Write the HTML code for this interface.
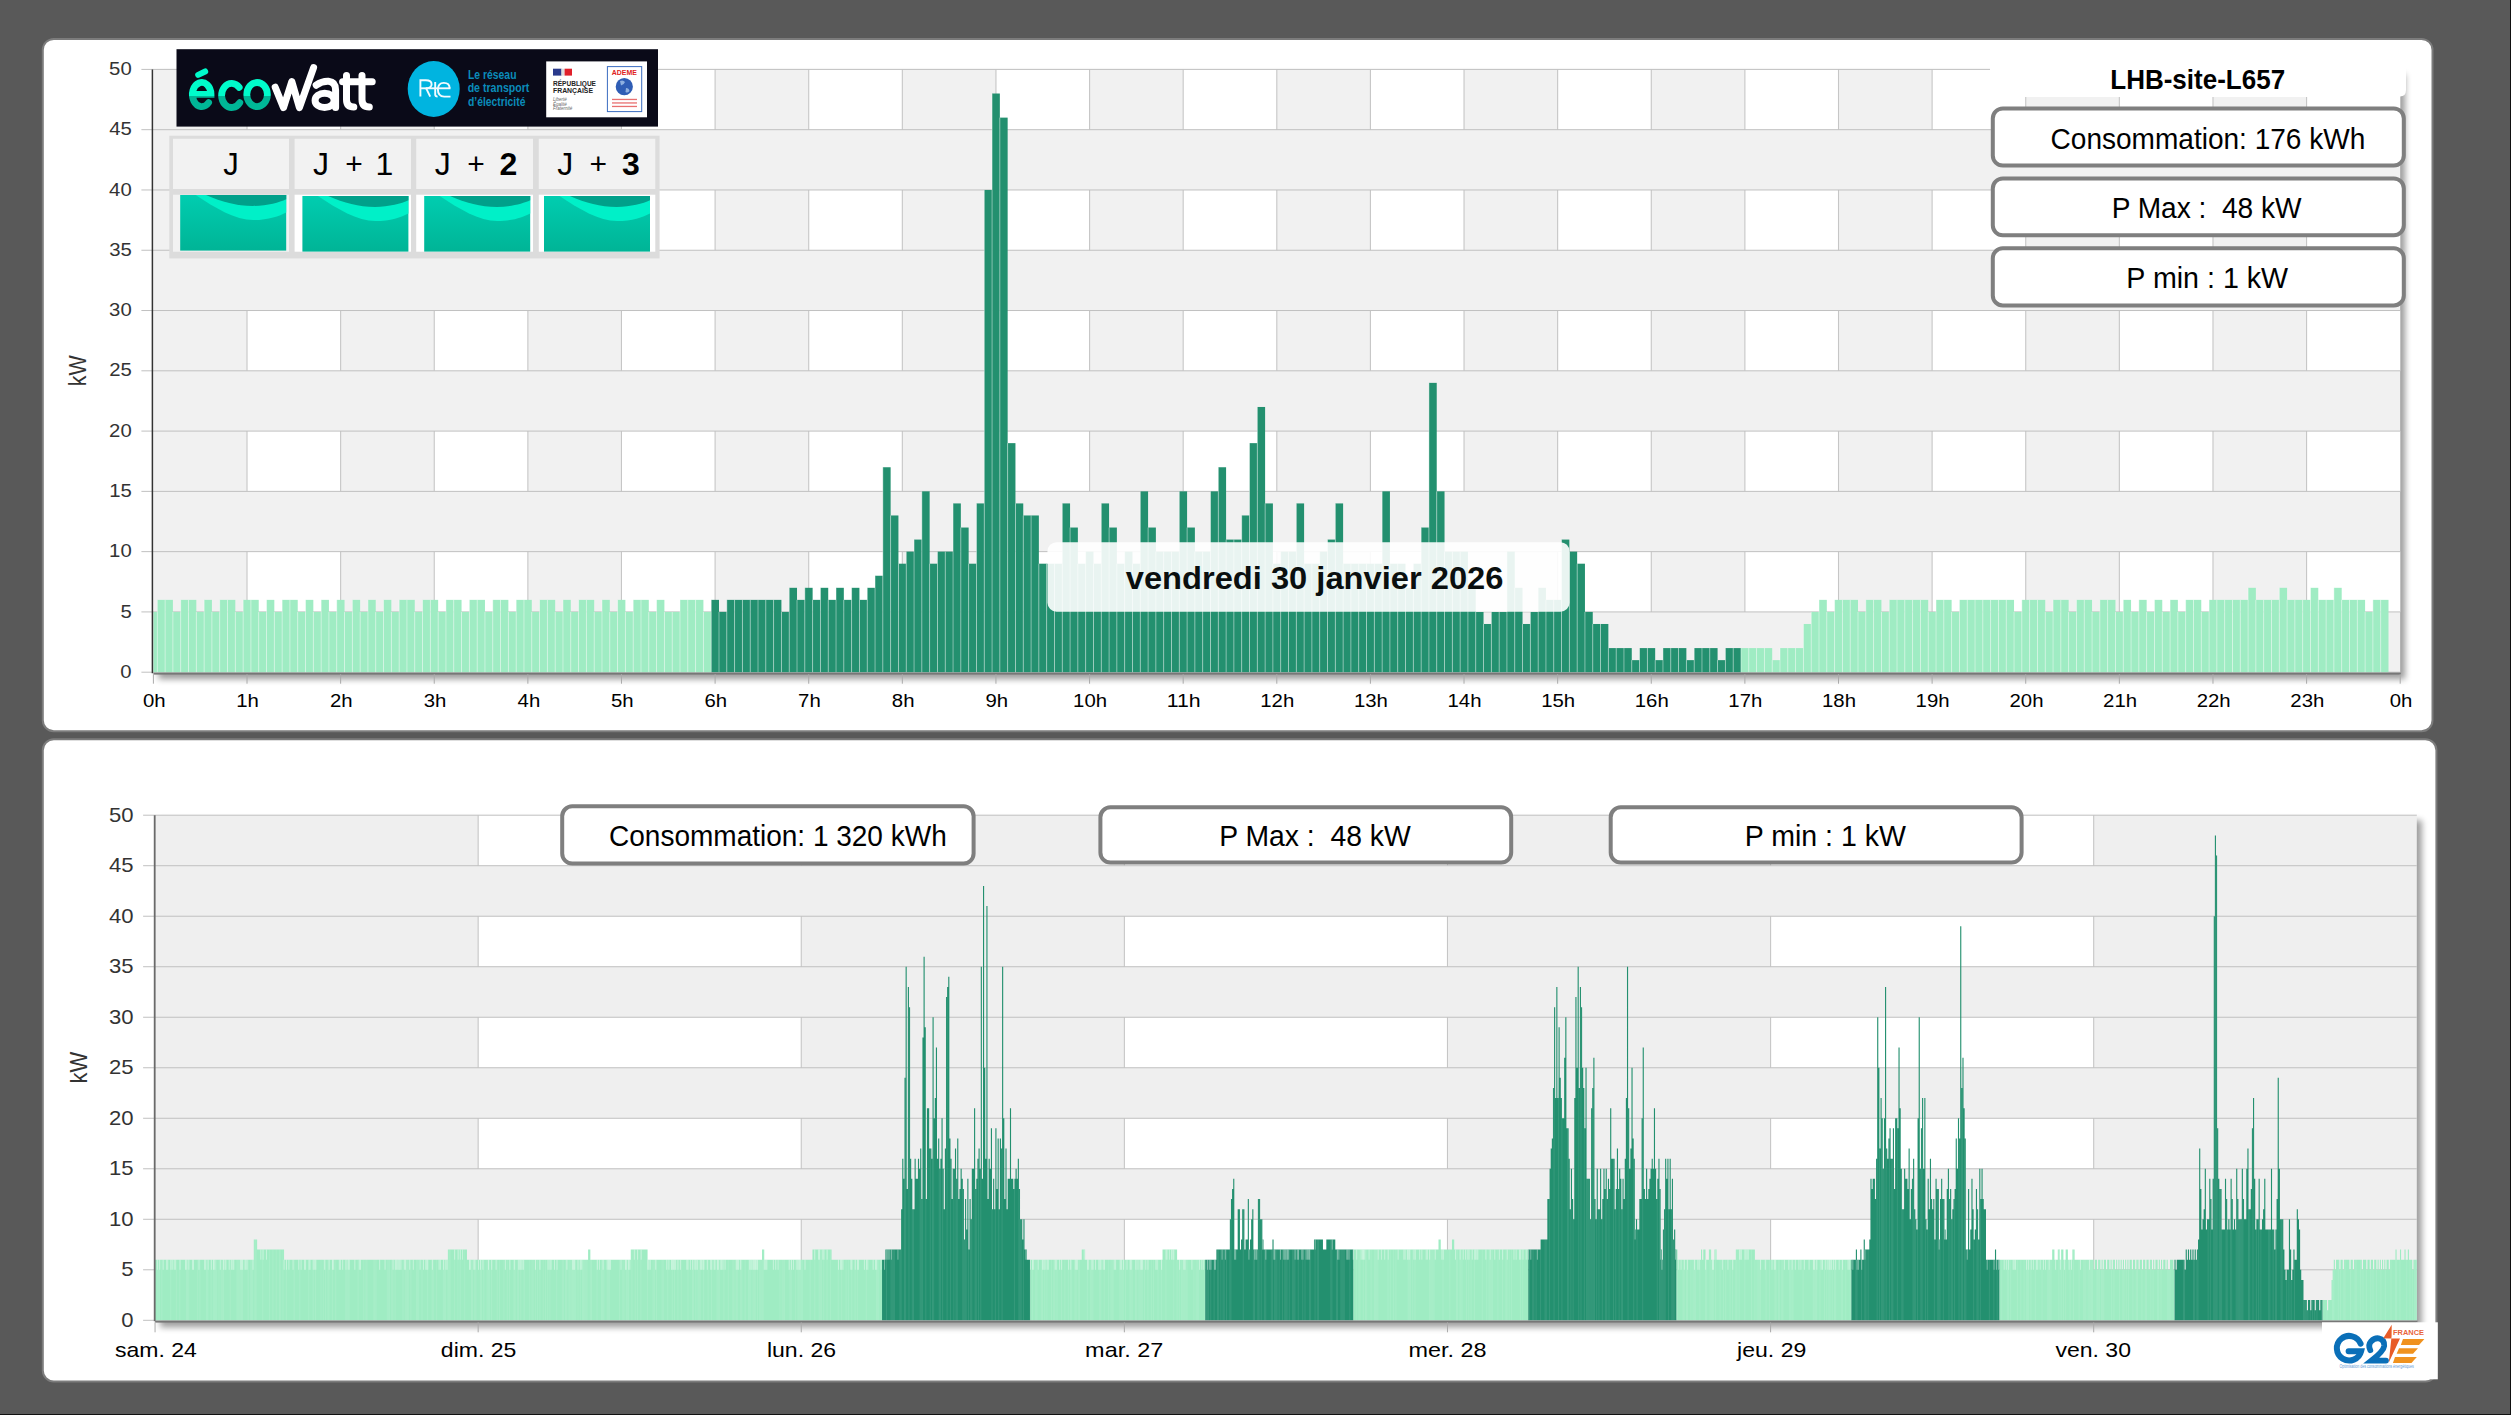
<!DOCTYPE html><html><head><meta charset="utf-8"><style>html,body{margin:0;padding:0;background:#595959;width:2511px;height:1415px;overflow:hidden} svg{position:absolute;left:0;top:0} text{font-family:"Liberation Sans",sans-serif}</style></head><body>
<svg width="2511" height="1415" viewBox="0 0 2511 1415">
<defs><filter id="sh" x="-5%" y="-5%" width="110%" height="110%"><feGaussianBlur stdDeviation="3"/></filter><filter id="sh2" x="-2%" y="-10%" width="104%" height="120%"><feGaussianBlur stdDeviation="3.2"/></filter><linearGradient id="tealg" x1="0" y1="0" x2="0" y2="1"><stop offset="0" stop-color="#00cdb0"/><stop offset="1" stop-color="#00b496"/></linearGradient><linearGradient id="ecog" x1="0" y1="0" x2="0" y2="1"><stop offset="0.5" stop-color="#00f0c8"/><stop offset="0.5" stop-color="#00b898"/></linearGradient><linearGradient id="ecog2" gradientUnits="userSpaceOnUse" x1="0" y1="70" x2="0" y2="112"><stop offset="0" stop-color="#00fccb"/><stop offset="0.63" stop-color="#00fccb"/><stop offset="0.63" stop-color="#00b596"/><stop offset="1" stop-color="#00b898"/></linearGradient></defs>
<rect x="2510" y="0" width="1" height="1415" fill="#111"/>
<rect x="0" y="1414" width="2511" height="1" fill="#111"/>
<rect x="42.8" y="38.9" width="2389.7" height="692.4" rx="11" fill="#ffffff" stroke="#7c7c7c" stroke-width="2"/>
<rect x="42.8" y="739.2" width="2393.6" height="642.3" rx="11" fill="#ffffff" stroke="#7c7c7c" stroke-width="2"/>
<rect x="158.4" y="74.4" width="2246.8" height="604.8" fill="#000" opacity="0.38" filter="url(#sh2)"/>
<rect x="153.40" y="69.40" width="2246.80" height="602.80" fill="#f1f1f1"/>
<rect x="247.02" y="69.40" width="93.62" height="60.28" fill="#ffffff"/>
<rect x="434.25" y="69.40" width="93.62" height="60.28" fill="#ffffff"/>
<rect x="621.48" y="69.40" width="93.62" height="60.28" fill="#ffffff"/>
<rect x="808.72" y="69.40" width="93.62" height="60.28" fill="#ffffff"/>
<rect x="995.95" y="69.40" width="93.62" height="60.28" fill="#ffffff"/>
<rect x="1183.18" y="69.40" width="93.62" height="60.28" fill="#ffffff"/>
<rect x="1370.42" y="69.40" width="93.62" height="60.28" fill="#ffffff"/>
<rect x="1557.65" y="69.40" width="93.62" height="60.28" fill="#ffffff"/>
<rect x="1744.88" y="69.40" width="93.62" height="60.28" fill="#ffffff"/>
<rect x="1932.12" y="69.40" width="93.62" height="60.28" fill="#ffffff"/>
<rect x="2119.35" y="69.40" width="93.62" height="60.28" fill="#ffffff"/>
<rect x="2306.58" y="69.40" width="93.62" height="60.28" fill="#ffffff"/>
<line x1="247.02" y1="69.40" x2="247.02" y2="129.68" stroke="#c6c6c6" stroke-width="1.1"/>
<line x1="340.63" y1="69.40" x2="340.63" y2="129.68" stroke="#c6c6c6" stroke-width="1.1"/>
<line x1="434.25" y1="69.40" x2="434.25" y2="129.68" stroke="#c6c6c6" stroke-width="1.1"/>
<line x1="527.87" y1="69.40" x2="527.87" y2="129.68" stroke="#c6c6c6" stroke-width="1.1"/>
<line x1="621.48" y1="69.40" x2="621.48" y2="129.68" stroke="#c6c6c6" stroke-width="1.1"/>
<line x1="715.10" y1="69.40" x2="715.10" y2="129.68" stroke="#c6c6c6" stroke-width="1.1"/>
<line x1="808.72" y1="69.40" x2="808.72" y2="129.68" stroke="#c6c6c6" stroke-width="1.1"/>
<line x1="902.33" y1="69.40" x2="902.33" y2="129.68" stroke="#c6c6c6" stroke-width="1.1"/>
<line x1="995.95" y1="69.40" x2="995.95" y2="129.68" stroke="#c6c6c6" stroke-width="1.1"/>
<line x1="1089.57" y1="69.40" x2="1089.57" y2="129.68" stroke="#c6c6c6" stroke-width="1.1"/>
<line x1="1183.18" y1="69.40" x2="1183.18" y2="129.68" stroke="#c6c6c6" stroke-width="1.1"/>
<line x1="1276.80" y1="69.40" x2="1276.80" y2="129.68" stroke="#c6c6c6" stroke-width="1.1"/>
<line x1="1370.42" y1="69.40" x2="1370.42" y2="129.68" stroke="#c6c6c6" stroke-width="1.1"/>
<line x1="1464.03" y1="69.40" x2="1464.03" y2="129.68" stroke="#c6c6c6" stroke-width="1.1"/>
<line x1="1557.65" y1="69.40" x2="1557.65" y2="129.68" stroke="#c6c6c6" stroke-width="1.1"/>
<line x1="1651.27" y1="69.40" x2="1651.27" y2="129.68" stroke="#c6c6c6" stroke-width="1.1"/>
<line x1="1744.88" y1="69.40" x2="1744.88" y2="129.68" stroke="#c6c6c6" stroke-width="1.1"/>
<line x1="1838.50" y1="69.40" x2="1838.50" y2="129.68" stroke="#c6c6c6" stroke-width="1.1"/>
<line x1="1932.12" y1="69.40" x2="1932.12" y2="129.68" stroke="#c6c6c6" stroke-width="1.1"/>
<line x1="2025.73" y1="69.40" x2="2025.73" y2="129.68" stroke="#c6c6c6" stroke-width="1.1"/>
<line x1="2119.35" y1="69.40" x2="2119.35" y2="129.68" stroke="#c6c6c6" stroke-width="1.1"/>
<line x1="2212.97" y1="69.40" x2="2212.97" y2="129.68" stroke="#c6c6c6" stroke-width="1.1"/>
<line x1="2306.58" y1="69.40" x2="2306.58" y2="129.68" stroke="#c6c6c6" stroke-width="1.1"/>
<rect x="247.02" y="189.96" width="93.62" height="60.28" fill="#ffffff"/>
<rect x="434.25" y="189.96" width="93.62" height="60.28" fill="#ffffff"/>
<rect x="621.48" y="189.96" width="93.62" height="60.28" fill="#ffffff"/>
<rect x="808.72" y="189.96" width="93.62" height="60.28" fill="#ffffff"/>
<rect x="995.95" y="189.96" width="93.62" height="60.28" fill="#ffffff"/>
<rect x="1183.18" y="189.96" width="93.62" height="60.28" fill="#ffffff"/>
<rect x="1370.42" y="189.96" width="93.62" height="60.28" fill="#ffffff"/>
<rect x="1557.65" y="189.96" width="93.62" height="60.28" fill="#ffffff"/>
<rect x="1744.88" y="189.96" width="93.62" height="60.28" fill="#ffffff"/>
<rect x="1932.12" y="189.96" width="93.62" height="60.28" fill="#ffffff"/>
<rect x="2119.35" y="189.96" width="93.62" height="60.28" fill="#ffffff"/>
<rect x="2306.58" y="189.96" width="93.62" height="60.28" fill="#ffffff"/>
<line x1="247.02" y1="189.96" x2="247.02" y2="250.24" stroke="#c6c6c6" stroke-width="1.1"/>
<line x1="340.63" y1="189.96" x2="340.63" y2="250.24" stroke="#c6c6c6" stroke-width="1.1"/>
<line x1="434.25" y1="189.96" x2="434.25" y2="250.24" stroke="#c6c6c6" stroke-width="1.1"/>
<line x1="527.87" y1="189.96" x2="527.87" y2="250.24" stroke="#c6c6c6" stroke-width="1.1"/>
<line x1="621.48" y1="189.96" x2="621.48" y2="250.24" stroke="#c6c6c6" stroke-width="1.1"/>
<line x1="715.10" y1="189.96" x2="715.10" y2="250.24" stroke="#c6c6c6" stroke-width="1.1"/>
<line x1="808.72" y1="189.96" x2="808.72" y2="250.24" stroke="#c6c6c6" stroke-width="1.1"/>
<line x1="902.33" y1="189.96" x2="902.33" y2="250.24" stroke="#c6c6c6" stroke-width="1.1"/>
<line x1="995.95" y1="189.96" x2="995.95" y2="250.24" stroke="#c6c6c6" stroke-width="1.1"/>
<line x1="1089.57" y1="189.96" x2="1089.57" y2="250.24" stroke="#c6c6c6" stroke-width="1.1"/>
<line x1="1183.18" y1="189.96" x2="1183.18" y2="250.24" stroke="#c6c6c6" stroke-width="1.1"/>
<line x1="1276.80" y1="189.96" x2="1276.80" y2="250.24" stroke="#c6c6c6" stroke-width="1.1"/>
<line x1="1370.42" y1="189.96" x2="1370.42" y2="250.24" stroke="#c6c6c6" stroke-width="1.1"/>
<line x1="1464.03" y1="189.96" x2="1464.03" y2="250.24" stroke="#c6c6c6" stroke-width="1.1"/>
<line x1="1557.65" y1="189.96" x2="1557.65" y2="250.24" stroke="#c6c6c6" stroke-width="1.1"/>
<line x1="1651.27" y1="189.96" x2="1651.27" y2="250.24" stroke="#c6c6c6" stroke-width="1.1"/>
<line x1="1744.88" y1="189.96" x2="1744.88" y2="250.24" stroke="#c6c6c6" stroke-width="1.1"/>
<line x1="1838.50" y1="189.96" x2="1838.50" y2="250.24" stroke="#c6c6c6" stroke-width="1.1"/>
<line x1="1932.12" y1="189.96" x2="1932.12" y2="250.24" stroke="#c6c6c6" stroke-width="1.1"/>
<line x1="2025.73" y1="189.96" x2="2025.73" y2="250.24" stroke="#c6c6c6" stroke-width="1.1"/>
<line x1="2119.35" y1="189.96" x2="2119.35" y2="250.24" stroke="#c6c6c6" stroke-width="1.1"/>
<line x1="2212.97" y1="189.96" x2="2212.97" y2="250.24" stroke="#c6c6c6" stroke-width="1.1"/>
<line x1="2306.58" y1="189.96" x2="2306.58" y2="250.24" stroke="#c6c6c6" stroke-width="1.1"/>
<rect x="247.02" y="310.52" width="93.62" height="60.28" fill="#ffffff"/>
<rect x="434.25" y="310.52" width="93.62" height="60.28" fill="#ffffff"/>
<rect x="621.48" y="310.52" width="93.62" height="60.28" fill="#ffffff"/>
<rect x="808.72" y="310.52" width="93.62" height="60.28" fill="#ffffff"/>
<rect x="995.95" y="310.52" width="93.62" height="60.28" fill="#ffffff"/>
<rect x="1183.18" y="310.52" width="93.62" height="60.28" fill="#ffffff"/>
<rect x="1370.42" y="310.52" width="93.62" height="60.28" fill="#ffffff"/>
<rect x="1557.65" y="310.52" width="93.62" height="60.28" fill="#ffffff"/>
<rect x="1744.88" y="310.52" width="93.62" height="60.28" fill="#ffffff"/>
<rect x="1932.12" y="310.52" width="93.62" height="60.28" fill="#ffffff"/>
<rect x="2119.35" y="310.52" width="93.62" height="60.28" fill="#ffffff"/>
<rect x="2306.58" y="310.52" width="93.62" height="60.28" fill="#ffffff"/>
<line x1="247.02" y1="310.52" x2="247.02" y2="370.80" stroke="#c6c6c6" stroke-width="1.1"/>
<line x1="340.63" y1="310.52" x2="340.63" y2="370.80" stroke="#c6c6c6" stroke-width="1.1"/>
<line x1="434.25" y1="310.52" x2="434.25" y2="370.80" stroke="#c6c6c6" stroke-width="1.1"/>
<line x1="527.87" y1="310.52" x2="527.87" y2="370.80" stroke="#c6c6c6" stroke-width="1.1"/>
<line x1="621.48" y1="310.52" x2="621.48" y2="370.80" stroke="#c6c6c6" stroke-width="1.1"/>
<line x1="715.10" y1="310.52" x2="715.10" y2="370.80" stroke="#c6c6c6" stroke-width="1.1"/>
<line x1="808.72" y1="310.52" x2="808.72" y2="370.80" stroke="#c6c6c6" stroke-width="1.1"/>
<line x1="902.33" y1="310.52" x2="902.33" y2="370.80" stroke="#c6c6c6" stroke-width="1.1"/>
<line x1="995.95" y1="310.52" x2="995.95" y2="370.80" stroke="#c6c6c6" stroke-width="1.1"/>
<line x1="1089.57" y1="310.52" x2="1089.57" y2="370.80" stroke="#c6c6c6" stroke-width="1.1"/>
<line x1="1183.18" y1="310.52" x2="1183.18" y2="370.80" stroke="#c6c6c6" stroke-width="1.1"/>
<line x1="1276.80" y1="310.52" x2="1276.80" y2="370.80" stroke="#c6c6c6" stroke-width="1.1"/>
<line x1="1370.42" y1="310.52" x2="1370.42" y2="370.80" stroke="#c6c6c6" stroke-width="1.1"/>
<line x1="1464.03" y1="310.52" x2="1464.03" y2="370.80" stroke="#c6c6c6" stroke-width="1.1"/>
<line x1="1557.65" y1="310.52" x2="1557.65" y2="370.80" stroke="#c6c6c6" stroke-width="1.1"/>
<line x1="1651.27" y1="310.52" x2="1651.27" y2="370.80" stroke="#c6c6c6" stroke-width="1.1"/>
<line x1="1744.88" y1="310.52" x2="1744.88" y2="370.80" stroke="#c6c6c6" stroke-width="1.1"/>
<line x1="1838.50" y1="310.52" x2="1838.50" y2="370.80" stroke="#c6c6c6" stroke-width="1.1"/>
<line x1="1932.12" y1="310.52" x2="1932.12" y2="370.80" stroke="#c6c6c6" stroke-width="1.1"/>
<line x1="2025.73" y1="310.52" x2="2025.73" y2="370.80" stroke="#c6c6c6" stroke-width="1.1"/>
<line x1="2119.35" y1="310.52" x2="2119.35" y2="370.80" stroke="#c6c6c6" stroke-width="1.1"/>
<line x1="2212.97" y1="310.52" x2="2212.97" y2="370.80" stroke="#c6c6c6" stroke-width="1.1"/>
<line x1="2306.58" y1="310.52" x2="2306.58" y2="370.80" stroke="#c6c6c6" stroke-width="1.1"/>
<rect x="247.02" y="431.08" width="93.62" height="60.28" fill="#ffffff"/>
<rect x="434.25" y="431.08" width="93.62" height="60.28" fill="#ffffff"/>
<rect x="621.48" y="431.08" width="93.62" height="60.28" fill="#ffffff"/>
<rect x="808.72" y="431.08" width="93.62" height="60.28" fill="#ffffff"/>
<rect x="995.95" y="431.08" width="93.62" height="60.28" fill="#ffffff"/>
<rect x="1183.18" y="431.08" width="93.62" height="60.28" fill="#ffffff"/>
<rect x="1370.42" y="431.08" width="93.62" height="60.28" fill="#ffffff"/>
<rect x="1557.65" y="431.08" width="93.62" height="60.28" fill="#ffffff"/>
<rect x="1744.88" y="431.08" width="93.62" height="60.28" fill="#ffffff"/>
<rect x="1932.12" y="431.08" width="93.62" height="60.28" fill="#ffffff"/>
<rect x="2119.35" y="431.08" width="93.62" height="60.28" fill="#ffffff"/>
<rect x="2306.58" y="431.08" width="93.62" height="60.28" fill="#ffffff"/>
<line x1="247.02" y1="431.08" x2="247.02" y2="491.36" stroke="#c6c6c6" stroke-width="1.1"/>
<line x1="340.63" y1="431.08" x2="340.63" y2="491.36" stroke="#c6c6c6" stroke-width="1.1"/>
<line x1="434.25" y1="431.08" x2="434.25" y2="491.36" stroke="#c6c6c6" stroke-width="1.1"/>
<line x1="527.87" y1="431.08" x2="527.87" y2="491.36" stroke="#c6c6c6" stroke-width="1.1"/>
<line x1="621.48" y1="431.08" x2="621.48" y2="491.36" stroke="#c6c6c6" stroke-width="1.1"/>
<line x1="715.10" y1="431.08" x2="715.10" y2="491.36" stroke="#c6c6c6" stroke-width="1.1"/>
<line x1="808.72" y1="431.08" x2="808.72" y2="491.36" stroke="#c6c6c6" stroke-width="1.1"/>
<line x1="902.33" y1="431.08" x2="902.33" y2="491.36" stroke="#c6c6c6" stroke-width="1.1"/>
<line x1="995.95" y1="431.08" x2="995.95" y2="491.36" stroke="#c6c6c6" stroke-width="1.1"/>
<line x1="1089.57" y1="431.08" x2="1089.57" y2="491.36" stroke="#c6c6c6" stroke-width="1.1"/>
<line x1="1183.18" y1="431.08" x2="1183.18" y2="491.36" stroke="#c6c6c6" stroke-width="1.1"/>
<line x1="1276.80" y1="431.08" x2="1276.80" y2="491.36" stroke="#c6c6c6" stroke-width="1.1"/>
<line x1="1370.42" y1="431.08" x2="1370.42" y2="491.36" stroke="#c6c6c6" stroke-width="1.1"/>
<line x1="1464.03" y1="431.08" x2="1464.03" y2="491.36" stroke="#c6c6c6" stroke-width="1.1"/>
<line x1="1557.65" y1="431.08" x2="1557.65" y2="491.36" stroke="#c6c6c6" stroke-width="1.1"/>
<line x1="1651.27" y1="431.08" x2="1651.27" y2="491.36" stroke="#c6c6c6" stroke-width="1.1"/>
<line x1="1744.88" y1="431.08" x2="1744.88" y2="491.36" stroke="#c6c6c6" stroke-width="1.1"/>
<line x1="1838.50" y1="431.08" x2="1838.50" y2="491.36" stroke="#c6c6c6" stroke-width="1.1"/>
<line x1="1932.12" y1="431.08" x2="1932.12" y2="491.36" stroke="#c6c6c6" stroke-width="1.1"/>
<line x1="2025.73" y1="431.08" x2="2025.73" y2="491.36" stroke="#c6c6c6" stroke-width="1.1"/>
<line x1="2119.35" y1="431.08" x2="2119.35" y2="491.36" stroke="#c6c6c6" stroke-width="1.1"/>
<line x1="2212.97" y1="431.08" x2="2212.97" y2="491.36" stroke="#c6c6c6" stroke-width="1.1"/>
<line x1="2306.58" y1="431.08" x2="2306.58" y2="491.36" stroke="#c6c6c6" stroke-width="1.1"/>
<rect x="247.02" y="551.64" width="93.62" height="60.28" fill="#ffffff"/>
<rect x="434.25" y="551.64" width="93.62" height="60.28" fill="#ffffff"/>
<rect x="621.48" y="551.64" width="93.62" height="60.28" fill="#ffffff"/>
<rect x="808.72" y="551.64" width="93.62" height="60.28" fill="#ffffff"/>
<rect x="995.95" y="551.64" width="93.62" height="60.28" fill="#ffffff"/>
<rect x="1183.18" y="551.64" width="93.62" height="60.28" fill="#ffffff"/>
<rect x="1370.42" y="551.64" width="93.62" height="60.28" fill="#ffffff"/>
<rect x="1557.65" y="551.64" width="93.62" height="60.28" fill="#ffffff"/>
<rect x="1744.88" y="551.64" width="93.62" height="60.28" fill="#ffffff"/>
<rect x="1932.12" y="551.64" width="93.62" height="60.28" fill="#ffffff"/>
<rect x="2119.35" y="551.64" width="93.62" height="60.28" fill="#ffffff"/>
<rect x="2306.58" y="551.64" width="93.62" height="60.28" fill="#ffffff"/>
<line x1="247.02" y1="551.64" x2="247.02" y2="611.92" stroke="#c6c6c6" stroke-width="1.1"/>
<line x1="340.63" y1="551.64" x2="340.63" y2="611.92" stroke="#c6c6c6" stroke-width="1.1"/>
<line x1="434.25" y1="551.64" x2="434.25" y2="611.92" stroke="#c6c6c6" stroke-width="1.1"/>
<line x1="527.87" y1="551.64" x2="527.87" y2="611.92" stroke="#c6c6c6" stroke-width="1.1"/>
<line x1="621.48" y1="551.64" x2="621.48" y2="611.92" stroke="#c6c6c6" stroke-width="1.1"/>
<line x1="715.10" y1="551.64" x2="715.10" y2="611.92" stroke="#c6c6c6" stroke-width="1.1"/>
<line x1="808.72" y1="551.64" x2="808.72" y2="611.92" stroke="#c6c6c6" stroke-width="1.1"/>
<line x1="902.33" y1="551.64" x2="902.33" y2="611.92" stroke="#c6c6c6" stroke-width="1.1"/>
<line x1="995.95" y1="551.64" x2="995.95" y2="611.92" stroke="#c6c6c6" stroke-width="1.1"/>
<line x1="1089.57" y1="551.64" x2="1089.57" y2="611.92" stroke="#c6c6c6" stroke-width="1.1"/>
<line x1="1183.18" y1="551.64" x2="1183.18" y2="611.92" stroke="#c6c6c6" stroke-width="1.1"/>
<line x1="1276.80" y1="551.64" x2="1276.80" y2="611.92" stroke="#c6c6c6" stroke-width="1.1"/>
<line x1="1370.42" y1="551.64" x2="1370.42" y2="611.92" stroke="#c6c6c6" stroke-width="1.1"/>
<line x1="1464.03" y1="551.64" x2="1464.03" y2="611.92" stroke="#c6c6c6" stroke-width="1.1"/>
<line x1="1557.65" y1="551.64" x2="1557.65" y2="611.92" stroke="#c6c6c6" stroke-width="1.1"/>
<line x1="1651.27" y1="551.64" x2="1651.27" y2="611.92" stroke="#c6c6c6" stroke-width="1.1"/>
<line x1="1744.88" y1="551.64" x2="1744.88" y2="611.92" stroke="#c6c6c6" stroke-width="1.1"/>
<line x1="1838.50" y1="551.64" x2="1838.50" y2="611.92" stroke="#c6c6c6" stroke-width="1.1"/>
<line x1="1932.12" y1="551.64" x2="1932.12" y2="611.92" stroke="#c6c6c6" stroke-width="1.1"/>
<line x1="2025.73" y1="551.64" x2="2025.73" y2="611.92" stroke="#c6c6c6" stroke-width="1.1"/>
<line x1="2119.35" y1="551.64" x2="2119.35" y2="611.92" stroke="#c6c6c6" stroke-width="1.1"/>
<line x1="2212.97" y1="551.64" x2="2212.97" y2="611.92" stroke="#c6c6c6" stroke-width="1.1"/>
<line x1="2306.58" y1="551.64" x2="2306.58" y2="611.92" stroke="#c6c6c6" stroke-width="1.1"/>
<line x1="141.4" y1="672.20" x2="2400.2" y2="672.20" stroke="#c0c0c0" stroke-width="1"/>
<line x1="141.4" y1="611.92" x2="2400.2" y2="611.92" stroke="#c0c0c0" stroke-width="1"/>
<line x1="141.4" y1="551.64" x2="2400.2" y2="551.64" stroke="#c0c0c0" stroke-width="1"/>
<line x1="141.4" y1="491.36" x2="2400.2" y2="491.36" stroke="#c0c0c0" stroke-width="1"/>
<line x1="141.4" y1="431.08" x2="2400.2" y2="431.08" stroke="#c0c0c0" stroke-width="1"/>
<line x1="141.4" y1="370.80" x2="2400.2" y2="370.80" stroke="#c0c0c0" stroke-width="1"/>
<line x1="141.4" y1="310.52" x2="2400.2" y2="310.52" stroke="#c0c0c0" stroke-width="1"/>
<line x1="141.4" y1="250.24" x2="2400.2" y2="250.24" stroke="#c0c0c0" stroke-width="1"/>
<line x1="141.4" y1="189.96" x2="2400.2" y2="189.96" stroke="#c0c0c0" stroke-width="1"/>
<line x1="141.4" y1="129.68" x2="2400.2" y2="129.68" stroke="#c0c0c0" stroke-width="1"/>
<line x1="141.4" y1="69.40" x2="2400.2" y2="69.40" stroke="#c0c0c0" stroke-width="1"/>
<rect x="153.40" y="611.92" width="3.90" height="60.28" fill="#9fecc3"/>
<rect x="157.30" y="599.86" width="7.80" height="72.34" fill="#9fecc3"/>
<rect x="165.10" y="599.86" width="7.80" height="72.34" fill="#9fecc3"/>
<rect x="172.90" y="611.92" width="7.80" height="60.28" fill="#9fecc3"/>
<rect x="180.70" y="599.86" width="7.80" height="72.34" fill="#9fecc3"/>
<rect x="188.51" y="599.86" width="7.80" height="72.34" fill="#9fecc3"/>
<rect x="196.31" y="611.92" width="7.80" height="60.28" fill="#9fecc3"/>
<rect x="204.11" y="599.86" width="7.80" height="72.34" fill="#9fecc3"/>
<rect x="211.91" y="611.92" width="7.80" height="60.28" fill="#9fecc3"/>
<rect x="219.71" y="599.86" width="7.80" height="72.34" fill="#9fecc3"/>
<rect x="227.51" y="599.86" width="7.80" height="72.34" fill="#9fecc3"/>
<rect x="235.31" y="611.92" width="7.80" height="60.28" fill="#9fecc3"/>
<rect x="243.12" y="599.86" width="7.80" height="72.34" fill="#9fecc3"/>
<rect x="250.92" y="599.86" width="7.80" height="72.34" fill="#9fecc3"/>
<rect x="258.72" y="611.92" width="7.80" height="60.28" fill="#9fecc3"/>
<rect x="266.52" y="599.86" width="7.80" height="72.34" fill="#9fecc3"/>
<rect x="274.32" y="611.92" width="7.80" height="60.28" fill="#9fecc3"/>
<rect x="282.12" y="599.86" width="7.80" height="72.34" fill="#9fecc3"/>
<rect x="289.92" y="599.86" width="7.80" height="72.34" fill="#9fecc3"/>
<rect x="297.73" y="611.92" width="7.80" height="60.28" fill="#9fecc3"/>
<rect x="305.53" y="599.86" width="7.80" height="72.34" fill="#9fecc3"/>
<rect x="313.33" y="611.92" width="7.80" height="60.28" fill="#9fecc3"/>
<rect x="321.13" y="599.86" width="7.80" height="72.34" fill="#9fecc3"/>
<rect x="328.93" y="611.92" width="7.80" height="60.28" fill="#9fecc3"/>
<rect x="336.73" y="599.86" width="7.80" height="72.34" fill="#9fecc3"/>
<rect x="344.53" y="611.92" width="7.80" height="60.28" fill="#9fecc3"/>
<rect x="352.34" y="599.86" width="7.80" height="72.34" fill="#9fecc3"/>
<rect x="360.14" y="611.92" width="7.80" height="60.28" fill="#9fecc3"/>
<rect x="367.94" y="599.86" width="7.80" height="72.34" fill="#9fecc3"/>
<rect x="375.74" y="611.92" width="7.80" height="60.28" fill="#9fecc3"/>
<rect x="383.54" y="599.86" width="7.80" height="72.34" fill="#9fecc3"/>
<rect x="391.34" y="611.92" width="7.80" height="60.28" fill="#9fecc3"/>
<rect x="399.14" y="599.86" width="7.80" height="72.34" fill="#9fecc3"/>
<rect x="406.95" y="599.86" width="7.80" height="72.34" fill="#9fecc3"/>
<rect x="414.75" y="611.92" width="7.80" height="60.28" fill="#9fecc3"/>
<rect x="422.55" y="599.86" width="7.80" height="72.34" fill="#9fecc3"/>
<rect x="430.35" y="599.86" width="7.80" height="72.34" fill="#9fecc3"/>
<rect x="438.15" y="611.92" width="7.80" height="60.28" fill="#9fecc3"/>
<rect x="445.95" y="599.86" width="7.80" height="72.34" fill="#9fecc3"/>
<rect x="453.75" y="599.86" width="7.80" height="72.34" fill="#9fecc3"/>
<rect x="461.55" y="611.92" width="7.80" height="60.28" fill="#9fecc3"/>
<rect x="469.36" y="599.86" width="7.80" height="72.34" fill="#9fecc3"/>
<rect x="477.16" y="599.86" width="7.80" height="72.34" fill="#9fecc3"/>
<rect x="484.96" y="611.92" width="7.80" height="60.28" fill="#9fecc3"/>
<rect x="492.76" y="599.86" width="7.80" height="72.34" fill="#9fecc3"/>
<rect x="500.56" y="599.86" width="7.80" height="72.34" fill="#9fecc3"/>
<rect x="508.36" y="611.92" width="7.80" height="60.28" fill="#9fecc3"/>
<rect x="516.16" y="599.86" width="7.80" height="72.34" fill="#9fecc3"/>
<rect x="523.97" y="599.86" width="7.80" height="72.34" fill="#9fecc3"/>
<rect x="531.77" y="611.92" width="7.80" height="60.28" fill="#9fecc3"/>
<rect x="539.57" y="599.86" width="7.80" height="72.34" fill="#9fecc3"/>
<rect x="547.37" y="599.86" width="7.80" height="72.34" fill="#9fecc3"/>
<rect x="555.17" y="611.92" width="7.80" height="60.28" fill="#9fecc3"/>
<rect x="562.97" y="599.86" width="7.80" height="72.34" fill="#9fecc3"/>
<rect x="570.77" y="611.92" width="7.80" height="60.28" fill="#9fecc3"/>
<rect x="578.58" y="599.86" width="7.80" height="72.34" fill="#9fecc3"/>
<rect x="586.38" y="599.86" width="7.80" height="72.34" fill="#9fecc3"/>
<rect x="594.18" y="611.92" width="7.80" height="60.28" fill="#9fecc3"/>
<rect x="601.98" y="599.86" width="7.80" height="72.34" fill="#9fecc3"/>
<rect x="609.78" y="611.92" width="7.80" height="60.28" fill="#9fecc3"/>
<rect x="617.58" y="599.86" width="7.80" height="72.34" fill="#9fecc3"/>
<rect x="625.38" y="611.92" width="7.80" height="60.28" fill="#9fecc3"/>
<rect x="633.19" y="599.86" width="7.80" height="72.34" fill="#9fecc3"/>
<rect x="640.99" y="599.86" width="7.80" height="72.34" fill="#9fecc3"/>
<rect x="648.79" y="611.92" width="7.80" height="60.28" fill="#9fecc3"/>
<rect x="656.59" y="599.86" width="7.80" height="72.34" fill="#9fecc3"/>
<rect x="664.39" y="611.92" width="7.80" height="60.28" fill="#9fecc3"/>
<rect x="672.19" y="611.92" width="7.80" height="60.28" fill="#9fecc3"/>
<rect x="679.99" y="599.86" width="7.80" height="72.34" fill="#9fecc3"/>
<rect x="687.80" y="599.86" width="7.80" height="72.34" fill="#9fecc3"/>
<rect x="695.60" y="599.86" width="7.80" height="72.34" fill="#9fecc3"/>
<rect x="703.40" y="611.92" width="7.80" height="60.28" fill="#9fecc3"/>
<rect x="711.20" y="599.86" width="7.80" height="72.34" fill="#23906f"/>
<rect x="719.00" y="611.92" width="7.80" height="60.28" fill="#23906f"/>
<rect x="726.80" y="599.86" width="7.80" height="72.34" fill="#23906f"/>
<rect x="734.60" y="599.86" width="7.80" height="72.34" fill="#23906f"/>
<rect x="742.40" y="599.86" width="7.80" height="72.34" fill="#23906f"/>
<rect x="750.21" y="599.86" width="7.80" height="72.34" fill="#23906f"/>
<rect x="758.01" y="599.86" width="7.80" height="72.34" fill="#23906f"/>
<rect x="765.81" y="599.86" width="7.80" height="72.34" fill="#23906f"/>
<rect x="773.61" y="599.86" width="7.80" height="72.34" fill="#23906f"/>
<rect x="781.41" y="611.92" width="7.80" height="60.28" fill="#23906f"/>
<rect x="789.21" y="587.81" width="7.80" height="84.39" fill="#23906f"/>
<rect x="797.01" y="599.86" width="7.80" height="72.34" fill="#23906f"/>
<rect x="804.82" y="587.81" width="7.80" height="84.39" fill="#23906f"/>
<rect x="812.62" y="599.86" width="7.80" height="72.34" fill="#23906f"/>
<rect x="820.42" y="587.81" width="7.80" height="84.39" fill="#23906f"/>
<rect x="828.22" y="599.86" width="7.80" height="72.34" fill="#23906f"/>
<rect x="836.02" y="587.81" width="7.80" height="84.39" fill="#23906f"/>
<rect x="843.82" y="599.86" width="7.80" height="72.34" fill="#23906f"/>
<rect x="851.62" y="587.81" width="7.80" height="84.39" fill="#23906f"/>
<rect x="859.43" y="599.86" width="7.80" height="72.34" fill="#23906f"/>
<rect x="867.23" y="587.81" width="7.80" height="84.39" fill="#23906f"/>
<rect x="875.03" y="575.75" width="7.80" height="96.45" fill="#23906f"/>
<rect x="882.83" y="467.25" width="7.80" height="204.95" fill="#23906f"/>
<rect x="890.63" y="515.47" width="7.80" height="156.73" fill="#23906f"/>
<rect x="898.43" y="563.70" width="7.80" height="108.50" fill="#23906f"/>
<rect x="906.23" y="551.64" width="7.80" height="120.56" fill="#23906f"/>
<rect x="914.04" y="539.58" width="7.80" height="132.62" fill="#23906f"/>
<rect x="921.84" y="491.36" width="7.80" height="180.84" fill="#23906f"/>
<rect x="929.64" y="563.70" width="7.80" height="108.50" fill="#23906f"/>
<rect x="937.44" y="551.64" width="7.80" height="120.56" fill="#23906f"/>
<rect x="945.24" y="551.64" width="7.80" height="120.56" fill="#23906f"/>
<rect x="953.04" y="503.42" width="7.80" height="168.78" fill="#23906f"/>
<rect x="960.84" y="527.53" width="7.80" height="144.67" fill="#23906f"/>
<rect x="968.65" y="563.70" width="7.80" height="108.50" fill="#23906f"/>
<rect x="976.45" y="503.42" width="7.80" height="168.78" fill="#23906f"/>
<rect x="984.25" y="189.96" width="7.80" height="482.24" fill="#23906f"/>
<rect x="992.05" y="93.51" width="7.80" height="578.69" fill="#23906f"/>
<rect x="999.85" y="117.62" width="7.80" height="554.58" fill="#23906f"/>
<rect x="1007.65" y="443.14" width="7.80" height="229.06" fill="#23906f"/>
<rect x="1015.45" y="503.42" width="7.80" height="168.78" fill="#23906f"/>
<rect x="1023.25" y="515.47" width="7.80" height="156.73" fill="#23906f"/>
<rect x="1031.06" y="515.47" width="7.80" height="156.73" fill="#23906f"/>
<rect x="1038.86" y="563.70" width="7.80" height="108.50" fill="#23906f"/>
<rect x="1046.66" y="563.70" width="7.80" height="108.50" fill="#23906f"/>
<rect x="1054.46" y="563.70" width="7.80" height="108.50" fill="#23906f"/>
<rect x="1062.26" y="503.42" width="7.80" height="168.78" fill="#23906f"/>
<rect x="1070.06" y="527.53" width="7.80" height="144.67" fill="#23906f"/>
<rect x="1077.86" y="563.70" width="7.80" height="108.50" fill="#23906f"/>
<rect x="1085.67" y="551.64" width="7.80" height="120.56" fill="#23906f"/>
<rect x="1093.47" y="563.70" width="7.80" height="108.50" fill="#23906f"/>
<rect x="1101.27" y="503.42" width="7.80" height="168.78" fill="#23906f"/>
<rect x="1109.07" y="527.53" width="7.80" height="144.67" fill="#23906f"/>
<rect x="1116.87" y="563.70" width="7.80" height="108.50" fill="#23906f"/>
<rect x="1124.67" y="551.64" width="7.80" height="120.56" fill="#23906f"/>
<rect x="1132.47" y="563.70" width="7.80" height="108.50" fill="#23906f"/>
<rect x="1140.28" y="491.36" width="7.80" height="180.84" fill="#23906f"/>
<rect x="1148.08" y="527.53" width="7.80" height="144.67" fill="#23906f"/>
<rect x="1155.88" y="551.64" width="7.80" height="120.56" fill="#23906f"/>
<rect x="1163.68" y="551.64" width="7.80" height="120.56" fill="#23906f"/>
<rect x="1171.48" y="551.64" width="7.80" height="120.56" fill="#23906f"/>
<rect x="1179.28" y="491.36" width="7.80" height="180.84" fill="#23906f"/>
<rect x="1187.08" y="527.53" width="7.80" height="144.67" fill="#23906f"/>
<rect x="1194.89" y="551.64" width="7.80" height="120.56" fill="#23906f"/>
<rect x="1202.69" y="551.64" width="7.80" height="120.56" fill="#23906f"/>
<rect x="1210.49" y="491.36" width="7.80" height="180.84" fill="#23906f"/>
<rect x="1218.29" y="467.25" width="7.80" height="204.95" fill="#23906f"/>
<rect x="1226.09" y="539.58" width="7.80" height="132.62" fill="#23906f"/>
<rect x="1233.89" y="539.58" width="7.80" height="132.62" fill="#23906f"/>
<rect x="1241.69" y="515.47" width="7.80" height="156.73" fill="#23906f"/>
<rect x="1249.50" y="443.14" width="7.80" height="229.06" fill="#23906f"/>
<rect x="1257.30" y="406.97" width="7.80" height="265.23" fill="#23906f"/>
<rect x="1265.10" y="503.42" width="7.80" height="168.78" fill="#23906f"/>
<rect x="1272.90" y="563.70" width="7.80" height="108.50" fill="#23906f"/>
<rect x="1280.70" y="551.64" width="7.80" height="120.56" fill="#23906f"/>
<rect x="1288.50" y="551.64" width="7.80" height="120.56" fill="#23906f"/>
<rect x="1296.30" y="503.42" width="7.80" height="168.78" fill="#23906f"/>
<rect x="1304.10" y="563.70" width="7.80" height="108.50" fill="#23906f"/>
<rect x="1311.91" y="563.70" width="7.80" height="108.50" fill="#23906f"/>
<rect x="1319.71" y="551.64" width="7.80" height="120.56" fill="#23906f"/>
<rect x="1327.51" y="539.58" width="7.80" height="132.62" fill="#23906f"/>
<rect x="1335.31" y="503.42" width="7.80" height="168.78" fill="#23906f"/>
<rect x="1343.11" y="563.70" width="7.80" height="108.50" fill="#23906f"/>
<rect x="1350.91" y="563.70" width="7.80" height="108.50" fill="#23906f"/>
<rect x="1358.71" y="563.70" width="7.80" height="108.50" fill="#23906f"/>
<rect x="1366.52" y="563.70" width="7.80" height="108.50" fill="#23906f"/>
<rect x="1374.32" y="563.70" width="7.80" height="108.50" fill="#23906f"/>
<rect x="1382.12" y="491.36" width="7.80" height="180.84" fill="#23906f"/>
<rect x="1389.92" y="563.70" width="7.80" height="108.50" fill="#23906f"/>
<rect x="1397.72" y="563.70" width="7.80" height="108.50" fill="#23906f"/>
<rect x="1405.52" y="587.81" width="7.80" height="84.39" fill="#23906f"/>
<rect x="1413.32" y="563.70" width="7.80" height="108.50" fill="#23906f"/>
<rect x="1421.13" y="527.53" width="7.80" height="144.67" fill="#23906f"/>
<rect x="1428.93" y="382.86" width="7.80" height="289.34" fill="#23906f"/>
<rect x="1436.73" y="491.36" width="7.80" height="180.84" fill="#23906f"/>
<rect x="1444.53" y="551.64" width="7.80" height="120.56" fill="#23906f"/>
<rect x="1452.33" y="551.64" width="7.80" height="120.56" fill="#23906f"/>
<rect x="1460.13" y="551.64" width="7.80" height="120.56" fill="#23906f"/>
<rect x="1467.93" y="587.81" width="7.80" height="84.39" fill="#23906f"/>
<rect x="1475.74" y="611.92" width="7.80" height="60.28" fill="#23906f"/>
<rect x="1483.54" y="623.98" width="7.80" height="48.22" fill="#23906f"/>
<rect x="1491.34" y="611.92" width="7.80" height="60.28" fill="#23906f"/>
<rect x="1499.14" y="611.92" width="7.80" height="60.28" fill="#23906f"/>
<rect x="1506.94" y="551.64" width="7.80" height="120.56" fill="#23906f"/>
<rect x="1514.74" y="587.81" width="7.80" height="84.39" fill="#23906f"/>
<rect x="1522.54" y="623.98" width="7.80" height="48.22" fill="#23906f"/>
<rect x="1530.35" y="611.92" width="7.80" height="60.28" fill="#23906f"/>
<rect x="1538.15" y="587.81" width="7.80" height="84.39" fill="#23906f"/>
<rect x="1545.95" y="599.86" width="7.80" height="72.34" fill="#23906f"/>
<rect x="1553.75" y="599.86" width="7.80" height="72.34" fill="#23906f"/>
<rect x="1561.55" y="539.58" width="7.80" height="132.62" fill="#23906f"/>
<rect x="1569.35" y="551.64" width="7.80" height="120.56" fill="#23906f"/>
<rect x="1577.15" y="563.70" width="7.80" height="108.50" fill="#23906f"/>
<rect x="1584.95" y="611.92" width="7.80" height="60.28" fill="#23906f"/>
<rect x="1592.76" y="623.98" width="7.80" height="48.22" fill="#23906f"/>
<rect x="1600.56" y="623.98" width="7.80" height="48.22" fill="#23906f"/>
<rect x="1608.36" y="648.09" width="7.80" height="24.11" fill="#23906f"/>
<rect x="1616.16" y="648.09" width="7.80" height="24.11" fill="#23906f"/>
<rect x="1623.96" y="648.09" width="7.80" height="24.11" fill="#23906f"/>
<rect x="1631.76" y="660.14" width="7.80" height="12.06" fill="#23906f"/>
<rect x="1639.56" y="648.09" width="7.80" height="24.11" fill="#23906f"/>
<rect x="1647.37" y="648.09" width="7.80" height="24.11" fill="#23906f"/>
<rect x="1655.17" y="660.14" width="7.80" height="12.06" fill="#23906f"/>
<rect x="1662.97" y="648.09" width="7.80" height="24.11" fill="#23906f"/>
<rect x="1670.77" y="648.09" width="7.80" height="24.11" fill="#23906f"/>
<rect x="1678.57" y="648.09" width="7.80" height="24.11" fill="#23906f"/>
<rect x="1686.37" y="660.14" width="7.80" height="12.06" fill="#23906f"/>
<rect x="1694.17" y="648.09" width="7.80" height="24.11" fill="#23906f"/>
<rect x="1701.98" y="648.09" width="7.80" height="24.11" fill="#23906f"/>
<rect x="1709.78" y="648.09" width="7.80" height="24.11" fill="#23906f"/>
<rect x="1717.58" y="660.14" width="7.80" height="12.06" fill="#23906f"/>
<rect x="1725.38" y="648.09" width="7.80" height="24.11" fill="#23906f"/>
<rect x="1733.18" y="648.09" width="7.80" height="24.11" fill="#23906f"/>
<rect x="1740.98" y="648.09" width="7.80" height="24.11" fill="#9fecc3"/>
<rect x="1748.78" y="648.09" width="7.80" height="24.11" fill="#9fecc3"/>
<rect x="1756.59" y="648.09" width="7.80" height="24.11" fill="#9fecc3"/>
<rect x="1764.39" y="648.09" width="7.80" height="24.11" fill="#9fecc3"/>
<rect x="1772.19" y="660.14" width="7.80" height="12.06" fill="#9fecc3"/>
<rect x="1779.99" y="648.09" width="7.80" height="24.11" fill="#9fecc3"/>
<rect x="1787.79" y="648.09" width="7.80" height="24.11" fill="#9fecc3"/>
<rect x="1795.59" y="648.09" width="7.80" height="24.11" fill="#9fecc3"/>
<rect x="1803.39" y="623.98" width="7.80" height="48.22" fill="#9fecc3"/>
<rect x="1811.20" y="611.92" width="7.80" height="60.28" fill="#9fecc3"/>
<rect x="1819.00" y="599.86" width="7.80" height="72.34" fill="#9fecc3"/>
<rect x="1826.80" y="611.92" width="7.80" height="60.28" fill="#9fecc3"/>
<rect x="1834.60" y="599.86" width="7.80" height="72.34" fill="#9fecc3"/>
<rect x="1842.40" y="599.86" width="7.80" height="72.34" fill="#9fecc3"/>
<rect x="1850.20" y="599.86" width="7.80" height="72.34" fill="#9fecc3"/>
<rect x="1858.00" y="611.92" width="7.80" height="60.28" fill="#9fecc3"/>
<rect x="1865.80" y="599.86" width="7.80" height="72.34" fill="#9fecc3"/>
<rect x="1873.61" y="599.86" width="7.80" height="72.34" fill="#9fecc3"/>
<rect x="1881.41" y="611.92" width="7.80" height="60.28" fill="#9fecc3"/>
<rect x="1889.21" y="599.86" width="7.80" height="72.34" fill="#9fecc3"/>
<rect x="1897.01" y="599.86" width="7.80" height="72.34" fill="#9fecc3"/>
<rect x="1904.81" y="599.86" width="7.80" height="72.34" fill="#9fecc3"/>
<rect x="1912.61" y="599.86" width="7.80" height="72.34" fill="#9fecc3"/>
<rect x="1920.41" y="599.86" width="7.80" height="72.34" fill="#9fecc3"/>
<rect x="1928.22" y="611.92" width="7.80" height="60.28" fill="#9fecc3"/>
<rect x="1936.02" y="599.86" width="7.80" height="72.34" fill="#9fecc3"/>
<rect x="1943.82" y="599.86" width="7.80" height="72.34" fill="#9fecc3"/>
<rect x="1951.62" y="611.92" width="7.80" height="60.28" fill="#9fecc3"/>
<rect x="1959.42" y="599.86" width="7.80" height="72.34" fill="#9fecc3"/>
<rect x="1967.22" y="599.86" width="7.80" height="72.34" fill="#9fecc3"/>
<rect x="1975.02" y="599.86" width="7.80" height="72.34" fill="#9fecc3"/>
<rect x="1982.83" y="599.86" width="7.80" height="72.34" fill="#9fecc3"/>
<rect x="1990.63" y="599.86" width="7.80" height="72.34" fill="#9fecc3"/>
<rect x="1998.43" y="599.86" width="7.80" height="72.34" fill="#9fecc3"/>
<rect x="2006.23" y="599.86" width="7.80" height="72.34" fill="#9fecc3"/>
<rect x="2014.03" y="611.92" width="7.80" height="60.28" fill="#9fecc3"/>
<rect x="2021.83" y="599.86" width="7.80" height="72.34" fill="#9fecc3"/>
<rect x="2029.63" y="599.86" width="7.80" height="72.34" fill="#9fecc3"/>
<rect x="2037.44" y="599.86" width="7.80" height="72.34" fill="#9fecc3"/>
<rect x="2045.24" y="611.92" width="7.80" height="60.28" fill="#9fecc3"/>
<rect x="2053.04" y="599.86" width="7.80" height="72.34" fill="#9fecc3"/>
<rect x="2060.84" y="599.86" width="7.80" height="72.34" fill="#9fecc3"/>
<rect x="2068.64" y="611.92" width="7.80" height="60.28" fill="#9fecc3"/>
<rect x="2076.44" y="599.86" width="7.80" height="72.34" fill="#9fecc3"/>
<rect x="2084.24" y="599.86" width="7.80" height="72.34" fill="#9fecc3"/>
<rect x="2092.05" y="611.92" width="7.80" height="60.28" fill="#9fecc3"/>
<rect x="2099.85" y="599.86" width="7.80" height="72.34" fill="#9fecc3"/>
<rect x="2107.65" y="599.86" width="7.80" height="72.34" fill="#9fecc3"/>
<rect x="2115.45" y="611.92" width="7.80" height="60.28" fill="#9fecc3"/>
<rect x="2123.25" y="599.86" width="7.80" height="72.34" fill="#9fecc3"/>
<rect x="2131.05" y="611.92" width="7.80" height="60.28" fill="#9fecc3"/>
<rect x="2138.85" y="599.86" width="7.80" height="72.34" fill="#9fecc3"/>
<rect x="2146.65" y="611.92" width="7.80" height="60.28" fill="#9fecc3"/>
<rect x="2154.46" y="599.86" width="7.80" height="72.34" fill="#9fecc3"/>
<rect x="2162.26" y="611.92" width="7.80" height="60.28" fill="#9fecc3"/>
<rect x="2170.06" y="599.86" width="7.80" height="72.34" fill="#9fecc3"/>
<rect x="2177.86" y="611.92" width="7.80" height="60.28" fill="#9fecc3"/>
<rect x="2185.66" y="599.86" width="7.80" height="72.34" fill="#9fecc3"/>
<rect x="2193.46" y="599.86" width="7.80" height="72.34" fill="#9fecc3"/>
<rect x="2201.26" y="611.92" width="7.80" height="60.28" fill="#9fecc3"/>
<rect x="2209.07" y="599.86" width="7.80" height="72.34" fill="#9fecc3"/>
<rect x="2216.87" y="599.86" width="7.80" height="72.34" fill="#9fecc3"/>
<rect x="2224.67" y="599.86" width="7.80" height="72.34" fill="#9fecc3"/>
<rect x="2232.47" y="599.86" width="7.80" height="72.34" fill="#9fecc3"/>
<rect x="2240.27" y="599.86" width="7.80" height="72.34" fill="#9fecc3"/>
<rect x="2248.07" y="587.81" width="7.80" height="84.39" fill="#9fecc3"/>
<rect x="2255.87" y="599.86" width="7.80" height="72.34" fill="#9fecc3"/>
<rect x="2263.68" y="599.86" width="7.80" height="72.34" fill="#9fecc3"/>
<rect x="2271.48" y="599.86" width="7.80" height="72.34" fill="#9fecc3"/>
<rect x="2279.28" y="587.81" width="7.80" height="84.39" fill="#9fecc3"/>
<rect x="2287.08" y="599.86" width="7.80" height="72.34" fill="#9fecc3"/>
<rect x="2294.88" y="599.86" width="7.80" height="72.34" fill="#9fecc3"/>
<rect x="2302.68" y="599.86" width="7.80" height="72.34" fill="#9fecc3"/>
<rect x="2310.48" y="587.81" width="7.80" height="84.39" fill="#9fecc3"/>
<rect x="2318.29" y="599.86" width="7.80" height="72.34" fill="#9fecc3"/>
<rect x="2326.09" y="599.86" width="7.80" height="72.34" fill="#9fecc3"/>
<rect x="2333.89" y="587.81" width="7.80" height="84.39" fill="#9fecc3"/>
<rect x="2341.69" y="599.86" width="7.80" height="72.34" fill="#9fecc3"/>
<rect x="2349.49" y="599.86" width="7.80" height="72.34" fill="#9fecc3"/>
<rect x="2357.29" y="599.86" width="7.80" height="72.34" fill="#9fecc3"/>
<rect x="2365.09" y="611.92" width="7.80" height="60.28" fill="#9fecc3"/>
<rect x="2372.90" y="599.86" width="7.80" height="72.34" fill="#9fecc3"/>
<rect x="2380.70" y="599.86" width="7.80" height="72.34" fill="#9fecc3"/>
<rect x="156.85" y="611.92" width="0.9" height="60.28" fill="#fff" opacity="0.45"/>
<rect x="156.85" y="599.86" width="0.9" height="12.06" fill="#fff" opacity="0.45"/>
<rect x="164.65" y="599.86" width="0.9" height="72.34" fill="#fff" opacity="0.45"/>
<rect x="172.45" y="611.92" width="0.9" height="60.28" fill="#fff" opacity="0.45"/>
<rect x="180.25" y="611.92" width="0.9" height="60.28" fill="#fff" opacity="0.45"/>
<rect x="180.25" y="599.86" width="0.9" height="12.06" fill="#fff" opacity="0.45"/>
<rect x="188.06" y="599.86" width="0.9" height="72.34" fill="#fff" opacity="0.45"/>
<rect x="195.86" y="611.92" width="0.9" height="60.28" fill="#fff" opacity="0.45"/>
<rect x="203.66" y="611.92" width="0.9" height="60.28" fill="#fff" opacity="0.45"/>
<rect x="203.66" y="599.86" width="0.9" height="12.06" fill="#fff" opacity="0.45"/>
<rect x="211.46" y="611.92" width="0.9" height="60.28" fill="#fff" opacity="0.45"/>
<rect x="219.26" y="611.92" width="0.9" height="60.28" fill="#fff" opacity="0.45"/>
<rect x="219.26" y="599.86" width="0.9" height="12.06" fill="#fff" opacity="0.45"/>
<rect x="227.06" y="599.86" width="0.9" height="72.34" fill="#fff" opacity="0.45"/>
<rect x="234.86" y="611.92" width="0.9" height="60.28" fill="#fff" opacity="0.45"/>
<rect x="242.67" y="611.92" width="0.9" height="60.28" fill="#fff" opacity="0.45"/>
<rect x="242.67" y="599.86" width="0.9" height="12.06" fill="#fff" opacity="0.45"/>
<rect x="250.47" y="599.86" width="0.9" height="72.34" fill="#fff" opacity="0.45"/>
<rect x="258.27" y="611.92" width="0.9" height="60.28" fill="#fff" opacity="0.45"/>
<rect x="266.07" y="611.92" width="0.9" height="60.28" fill="#fff" opacity="0.45"/>
<rect x="266.07" y="599.86" width="0.9" height="12.06" fill="#fff" opacity="0.45"/>
<rect x="273.87" y="611.92" width="0.9" height="60.28" fill="#fff" opacity="0.45"/>
<rect x="281.67" y="611.92" width="0.9" height="60.28" fill="#fff" opacity="0.45"/>
<rect x="281.67" y="599.86" width="0.9" height="12.06" fill="#fff" opacity="0.45"/>
<rect x="289.47" y="599.86" width="0.9" height="72.34" fill="#fff" opacity="0.45"/>
<rect x="297.28" y="611.92" width="0.9" height="60.28" fill="#fff" opacity="0.45"/>
<rect x="305.08" y="611.92" width="0.9" height="60.28" fill="#fff" opacity="0.45"/>
<rect x="305.08" y="599.86" width="0.9" height="12.06" fill="#fff" opacity="0.45"/>
<rect x="312.88" y="611.92" width="0.9" height="60.28" fill="#fff" opacity="0.45"/>
<rect x="320.68" y="611.92" width="0.9" height="60.28" fill="#fff" opacity="0.45"/>
<rect x="320.68" y="599.86" width="0.9" height="12.06" fill="#fff" opacity="0.45"/>
<rect x="328.48" y="611.92" width="0.9" height="60.28" fill="#fff" opacity="0.45"/>
<rect x="336.28" y="611.92" width="0.9" height="60.28" fill="#fff" opacity="0.45"/>
<rect x="336.28" y="599.86" width="0.9" height="12.06" fill="#fff" opacity="0.45"/>
<rect x="344.08" y="611.92" width="0.9" height="60.28" fill="#fff" opacity="0.45"/>
<rect x="351.89" y="611.92" width="0.9" height="60.28" fill="#fff" opacity="0.45"/>
<rect x="351.89" y="599.86" width="0.9" height="12.06" fill="#fff" opacity="0.45"/>
<rect x="359.69" y="611.92" width="0.9" height="60.28" fill="#fff" opacity="0.45"/>
<rect x="367.49" y="611.92" width="0.9" height="60.28" fill="#fff" opacity="0.45"/>
<rect x="367.49" y="599.86" width="0.9" height="12.06" fill="#fff" opacity="0.45"/>
<rect x="375.29" y="611.92" width="0.9" height="60.28" fill="#fff" opacity="0.45"/>
<rect x="383.09" y="611.92" width="0.9" height="60.28" fill="#fff" opacity="0.45"/>
<rect x="383.09" y="599.86" width="0.9" height="12.06" fill="#fff" opacity="0.45"/>
<rect x="390.89" y="611.92" width="0.9" height="60.28" fill="#fff" opacity="0.45"/>
<rect x="398.69" y="611.92" width="0.9" height="60.28" fill="#fff" opacity="0.45"/>
<rect x="398.69" y="599.86" width="0.9" height="12.06" fill="#fff" opacity="0.45"/>
<rect x="406.50" y="599.86" width="0.9" height="72.34" fill="#fff" opacity="0.45"/>
<rect x="414.30" y="611.92" width="0.9" height="60.28" fill="#fff" opacity="0.45"/>
<rect x="422.10" y="611.92" width="0.9" height="60.28" fill="#fff" opacity="0.45"/>
<rect x="422.10" y="599.86" width="0.9" height="12.06" fill="#fff" opacity="0.45"/>
<rect x="429.90" y="599.86" width="0.9" height="72.34" fill="#fff" opacity="0.45"/>
<rect x="437.70" y="611.92" width="0.9" height="60.28" fill="#fff" opacity="0.45"/>
<rect x="445.50" y="611.92" width="0.9" height="60.28" fill="#fff" opacity="0.45"/>
<rect x="445.50" y="599.86" width="0.9" height="12.06" fill="#fff" opacity="0.45"/>
<rect x="453.30" y="599.86" width="0.9" height="72.34" fill="#fff" opacity="0.45"/>
<rect x="461.10" y="611.92" width="0.9" height="60.28" fill="#fff" opacity="0.45"/>
<rect x="468.91" y="611.92" width="0.9" height="60.28" fill="#fff" opacity="0.45"/>
<rect x="468.91" y="599.86" width="0.9" height="12.06" fill="#fff" opacity="0.45"/>
<rect x="476.71" y="599.86" width="0.9" height="72.34" fill="#fff" opacity="0.45"/>
<rect x="484.51" y="611.92" width="0.9" height="60.28" fill="#fff" opacity="0.45"/>
<rect x="492.31" y="611.92" width="0.9" height="60.28" fill="#fff" opacity="0.45"/>
<rect x="492.31" y="599.86" width="0.9" height="12.06" fill="#fff" opacity="0.45"/>
<rect x="500.11" y="599.86" width="0.9" height="72.34" fill="#fff" opacity="0.45"/>
<rect x="507.91" y="611.92" width="0.9" height="60.28" fill="#fff" opacity="0.45"/>
<rect x="515.71" y="611.92" width="0.9" height="60.28" fill="#fff" opacity="0.45"/>
<rect x="515.71" y="599.86" width="0.9" height="12.06" fill="#fff" opacity="0.45"/>
<rect x="523.52" y="599.86" width="0.9" height="72.34" fill="#fff" opacity="0.45"/>
<rect x="531.32" y="611.92" width="0.9" height="60.28" fill="#fff" opacity="0.45"/>
<rect x="539.12" y="611.92" width="0.9" height="60.28" fill="#fff" opacity="0.45"/>
<rect x="539.12" y="599.86" width="0.9" height="12.06" fill="#fff" opacity="0.45"/>
<rect x="546.92" y="599.86" width="0.9" height="72.34" fill="#fff" opacity="0.45"/>
<rect x="554.72" y="611.92" width="0.9" height="60.28" fill="#fff" opacity="0.45"/>
<rect x="562.52" y="611.92" width="0.9" height="60.28" fill="#fff" opacity="0.45"/>
<rect x="562.52" y="599.86" width="0.9" height="12.06" fill="#fff" opacity="0.45"/>
<rect x="570.32" y="611.92" width="0.9" height="60.28" fill="#fff" opacity="0.45"/>
<rect x="578.13" y="611.92" width="0.9" height="60.28" fill="#fff" opacity="0.45"/>
<rect x="578.13" y="599.86" width="0.9" height="12.06" fill="#fff" opacity="0.45"/>
<rect x="585.93" y="599.86" width="0.9" height="72.34" fill="#fff" opacity="0.45"/>
<rect x="593.73" y="611.92" width="0.9" height="60.28" fill="#fff" opacity="0.45"/>
<rect x="601.53" y="611.92" width="0.9" height="60.28" fill="#fff" opacity="0.45"/>
<rect x="601.53" y="599.86" width="0.9" height="12.06" fill="#fff" opacity="0.45"/>
<rect x="609.33" y="611.92" width="0.9" height="60.28" fill="#fff" opacity="0.45"/>
<rect x="617.13" y="611.92" width="0.9" height="60.28" fill="#fff" opacity="0.45"/>
<rect x="617.13" y="599.86" width="0.9" height="12.06" fill="#fff" opacity="0.45"/>
<rect x="624.93" y="611.92" width="0.9" height="60.28" fill="#fff" opacity="0.45"/>
<rect x="632.74" y="611.92" width="0.9" height="60.28" fill="#fff" opacity="0.45"/>
<rect x="632.74" y="599.86" width="0.9" height="12.06" fill="#fff" opacity="0.45"/>
<rect x="640.54" y="599.86" width="0.9" height="72.34" fill="#fff" opacity="0.45"/>
<rect x="648.34" y="611.92" width="0.9" height="60.28" fill="#fff" opacity="0.45"/>
<rect x="656.14" y="611.92" width="0.9" height="60.28" fill="#fff" opacity="0.45"/>
<rect x="656.14" y="599.86" width="0.9" height="12.06" fill="#fff" opacity="0.45"/>
<rect x="663.94" y="611.92" width="0.9" height="60.28" fill="#fff" opacity="0.45"/>
<rect x="671.74" y="611.92" width="0.9" height="60.28" fill="#fff" opacity="0.45"/>
<rect x="679.54" y="611.92" width="0.9" height="60.28" fill="#fff" opacity="0.45"/>
<rect x="679.54" y="599.86" width="0.9" height="12.06" fill="#fff" opacity="0.45"/>
<rect x="687.35" y="599.86" width="0.9" height="72.34" fill="#fff" opacity="0.45"/>
<rect x="695.15" y="599.86" width="0.9" height="72.34" fill="#fff" opacity="0.45"/>
<rect x="702.95" y="611.92" width="0.9" height="60.28" fill="#fff" opacity="0.45"/>
<rect x="710.75" y="611.92" width="0.9" height="60.28" fill="#fff" opacity="0.45"/>
<rect x="710.75" y="599.86" width="0.9" height="12.06" fill="#fff" opacity="0.45"/>
<rect x="718.55" y="611.92" width="0.9" height="60.28" fill="#fff" opacity="0.45"/>
<rect x="726.35" y="611.92" width="0.9" height="60.28" fill="#fff" opacity="0.45"/>
<rect x="726.35" y="599.86" width="0.9" height="12.06" fill="#fff" opacity="0.45"/>
<rect x="734.15" y="599.86" width="0.9" height="72.34" fill="#fff" opacity="0.45"/>
<rect x="741.95" y="599.86" width="0.9" height="72.34" fill="#fff" opacity="0.45"/>
<rect x="749.76" y="599.86" width="0.9" height="72.34" fill="#fff" opacity="0.45"/>
<rect x="757.56" y="599.86" width="0.9" height="72.34" fill="#fff" opacity="0.45"/>
<rect x="765.36" y="599.86" width="0.9" height="72.34" fill="#fff" opacity="0.45"/>
<rect x="773.16" y="599.86" width="0.9" height="72.34" fill="#fff" opacity="0.45"/>
<rect x="780.96" y="611.92" width="0.9" height="60.28" fill="#fff" opacity="0.45"/>
<rect x="788.76" y="611.92" width="0.9" height="60.28" fill="#fff" opacity="0.45"/>
<rect x="788.76" y="587.81" width="0.9" height="24.11" fill="#fff" opacity="0.45"/>
<rect x="796.56" y="599.86" width="0.9" height="72.34" fill="#fff" opacity="0.45"/>
<rect x="804.37" y="599.86" width="0.9" height="72.34" fill="#fff" opacity="0.45"/>
<rect x="804.37" y="587.81" width="0.9" height="12.06" fill="#fff" opacity="0.45"/>
<rect x="812.17" y="599.86" width="0.9" height="72.34" fill="#fff" opacity="0.45"/>
<rect x="819.97" y="599.86" width="0.9" height="72.34" fill="#fff" opacity="0.45"/>
<rect x="819.97" y="587.81" width="0.9" height="12.06" fill="#fff" opacity="0.45"/>
<rect x="827.77" y="599.86" width="0.9" height="72.34" fill="#fff" opacity="0.45"/>
<rect x="835.57" y="599.86" width="0.9" height="72.34" fill="#fff" opacity="0.45"/>
<rect x="835.57" y="587.81" width="0.9" height="12.06" fill="#fff" opacity="0.45"/>
<rect x="843.37" y="599.86" width="0.9" height="72.34" fill="#fff" opacity="0.45"/>
<rect x="851.17" y="599.86" width="0.9" height="72.34" fill="#fff" opacity="0.45"/>
<rect x="851.17" y="587.81" width="0.9" height="12.06" fill="#fff" opacity="0.45"/>
<rect x="858.98" y="599.86" width="0.9" height="72.34" fill="#fff" opacity="0.45"/>
<rect x="866.78" y="599.86" width="0.9" height="72.34" fill="#fff" opacity="0.45"/>
<rect x="866.78" y="587.81" width="0.9" height="12.06" fill="#fff" opacity="0.45"/>
<rect x="874.58" y="587.81" width="0.9" height="84.39" fill="#fff" opacity="0.45"/>
<rect x="874.58" y="575.75" width="0.9" height="12.06" fill="#fff" opacity="0.45"/>
<rect x="882.38" y="575.75" width="0.9" height="96.45" fill="#fff" opacity="0.45"/>
<rect x="882.38" y="467.25" width="0.9" height="108.50" fill="#fff" opacity="0.45"/>
<rect x="890.18" y="515.47" width="0.9" height="156.73" fill="#fff" opacity="0.45"/>
<rect x="897.98" y="563.70" width="0.9" height="108.50" fill="#fff" opacity="0.45"/>
<rect x="905.78" y="563.70" width="0.9" height="108.50" fill="#fff" opacity="0.45"/>
<rect x="905.78" y="551.64" width="0.9" height="12.06" fill="#fff" opacity="0.45"/>
<rect x="913.59" y="551.64" width="0.9" height="120.56" fill="#fff" opacity="0.45"/>
<rect x="913.59" y="539.58" width="0.9" height="12.06" fill="#fff" opacity="0.45"/>
<rect x="921.39" y="539.58" width="0.9" height="132.62" fill="#fff" opacity="0.45"/>
<rect x="921.39" y="491.36" width="0.9" height="48.22" fill="#fff" opacity="0.45"/>
<rect x="929.19" y="563.70" width="0.9" height="108.50" fill="#fff" opacity="0.45"/>
<rect x="936.99" y="563.70" width="0.9" height="108.50" fill="#fff" opacity="0.45"/>
<rect x="936.99" y="551.64" width="0.9" height="12.06" fill="#fff" opacity="0.45"/>
<rect x="944.79" y="551.64" width="0.9" height="120.56" fill="#fff" opacity="0.45"/>
<rect x="952.59" y="551.64" width="0.9" height="120.56" fill="#fff" opacity="0.45"/>
<rect x="952.59" y="503.42" width="0.9" height="48.22" fill="#fff" opacity="0.45"/>
<rect x="960.39" y="527.53" width="0.9" height="144.67" fill="#fff" opacity="0.45"/>
<rect x="968.20" y="563.70" width="0.9" height="108.50" fill="#fff" opacity="0.45"/>
<rect x="976.00" y="563.70" width="0.9" height="108.50" fill="#fff" opacity="0.45"/>
<rect x="976.00" y="503.42" width="0.9" height="60.28" fill="#fff" opacity="0.45"/>
<rect x="983.80" y="503.42" width="0.9" height="168.78" fill="#fff" opacity="0.45"/>
<rect x="983.80" y="189.96" width="0.9" height="313.46" fill="#fff" opacity="0.45"/>
<rect x="991.60" y="189.96" width="0.9" height="482.24" fill="#fff" opacity="0.45"/>
<rect x="991.60" y="93.51" width="0.9" height="96.45" fill="#fff" opacity="0.45"/>
<rect x="999.40" y="117.62" width="0.9" height="554.58" fill="#fff" opacity="0.45"/>
<rect x="1007.20" y="443.14" width="0.9" height="229.06" fill="#fff" opacity="0.45"/>
<rect x="1015.00" y="503.42" width="0.9" height="168.78" fill="#fff" opacity="0.45"/>
<rect x="1022.80" y="515.47" width="0.9" height="156.73" fill="#fff" opacity="0.45"/>
<rect x="1030.61" y="515.47" width="0.9" height="156.73" fill="#fff" opacity="0.45"/>
<rect x="1038.41" y="563.70" width="0.9" height="108.50" fill="#fff" opacity="0.45"/>
<rect x="1046.21" y="563.70" width="0.9" height="108.50" fill="#fff" opacity="0.45"/>
<rect x="1054.01" y="563.70" width="0.9" height="108.50" fill="#fff" opacity="0.45"/>
<rect x="1061.81" y="563.70" width="0.9" height="108.50" fill="#fff" opacity="0.45"/>
<rect x="1061.81" y="503.42" width="0.9" height="60.28" fill="#fff" opacity="0.45"/>
<rect x="1069.61" y="527.53" width="0.9" height="144.67" fill="#fff" opacity="0.45"/>
<rect x="1077.41" y="563.70" width="0.9" height="108.50" fill="#fff" opacity="0.45"/>
<rect x="1085.22" y="563.70" width="0.9" height="108.50" fill="#fff" opacity="0.45"/>
<rect x="1085.22" y="551.64" width="0.9" height="12.06" fill="#fff" opacity="0.45"/>
<rect x="1093.02" y="563.70" width="0.9" height="108.50" fill="#fff" opacity="0.45"/>
<rect x="1100.82" y="563.70" width="0.9" height="108.50" fill="#fff" opacity="0.45"/>
<rect x="1100.82" y="503.42" width="0.9" height="60.28" fill="#fff" opacity="0.45"/>
<rect x="1108.62" y="527.53" width="0.9" height="144.67" fill="#fff" opacity="0.45"/>
<rect x="1116.42" y="563.70" width="0.9" height="108.50" fill="#fff" opacity="0.45"/>
<rect x="1124.22" y="563.70" width="0.9" height="108.50" fill="#fff" opacity="0.45"/>
<rect x="1124.22" y="551.64" width="0.9" height="12.06" fill="#fff" opacity="0.45"/>
<rect x="1132.02" y="563.70" width="0.9" height="108.50" fill="#fff" opacity="0.45"/>
<rect x="1139.83" y="563.70" width="0.9" height="108.50" fill="#fff" opacity="0.45"/>
<rect x="1139.83" y="491.36" width="0.9" height="72.34" fill="#fff" opacity="0.45"/>
<rect x="1147.63" y="527.53" width="0.9" height="144.67" fill="#fff" opacity="0.45"/>
<rect x="1155.43" y="551.64" width="0.9" height="120.56" fill="#fff" opacity="0.45"/>
<rect x="1163.23" y="551.64" width="0.9" height="120.56" fill="#fff" opacity="0.45"/>
<rect x="1171.03" y="551.64" width="0.9" height="120.56" fill="#fff" opacity="0.45"/>
<rect x="1178.83" y="551.64" width="0.9" height="120.56" fill="#fff" opacity="0.45"/>
<rect x="1178.83" y="491.36" width="0.9" height="60.28" fill="#fff" opacity="0.45"/>
<rect x="1186.63" y="527.53" width="0.9" height="144.67" fill="#fff" opacity="0.45"/>
<rect x="1194.44" y="551.64" width="0.9" height="120.56" fill="#fff" opacity="0.45"/>
<rect x="1202.24" y="551.64" width="0.9" height="120.56" fill="#fff" opacity="0.45"/>
<rect x="1210.04" y="551.64" width="0.9" height="120.56" fill="#fff" opacity="0.45"/>
<rect x="1210.04" y="491.36" width="0.9" height="60.28" fill="#fff" opacity="0.45"/>
<rect x="1217.84" y="491.36" width="0.9" height="180.84" fill="#fff" opacity="0.45"/>
<rect x="1217.84" y="467.25" width="0.9" height="24.11" fill="#fff" opacity="0.45"/>
<rect x="1225.64" y="539.58" width="0.9" height="132.62" fill="#fff" opacity="0.45"/>
<rect x="1233.44" y="539.58" width="0.9" height="132.62" fill="#fff" opacity="0.45"/>
<rect x="1241.24" y="539.58" width="0.9" height="132.62" fill="#fff" opacity="0.45"/>
<rect x="1241.24" y="515.47" width="0.9" height="24.11" fill="#fff" opacity="0.45"/>
<rect x="1249.05" y="515.47" width="0.9" height="156.73" fill="#fff" opacity="0.45"/>
<rect x="1249.05" y="443.14" width="0.9" height="72.34" fill="#fff" opacity="0.45"/>
<rect x="1256.85" y="443.14" width="0.9" height="229.06" fill="#fff" opacity="0.45"/>
<rect x="1256.85" y="406.97" width="0.9" height="36.17" fill="#fff" opacity="0.45"/>
<rect x="1264.65" y="503.42" width="0.9" height="168.78" fill="#fff" opacity="0.45"/>
<rect x="1272.45" y="563.70" width="0.9" height="108.50" fill="#fff" opacity="0.45"/>
<rect x="1280.25" y="563.70" width="0.9" height="108.50" fill="#fff" opacity="0.45"/>
<rect x="1280.25" y="551.64" width="0.9" height="12.06" fill="#fff" opacity="0.45"/>
<rect x="1288.05" y="551.64" width="0.9" height="120.56" fill="#fff" opacity="0.45"/>
<rect x="1295.85" y="551.64" width="0.9" height="120.56" fill="#fff" opacity="0.45"/>
<rect x="1295.85" y="503.42" width="0.9" height="48.22" fill="#fff" opacity="0.45"/>
<rect x="1303.65" y="563.70" width="0.9" height="108.50" fill="#fff" opacity="0.45"/>
<rect x="1311.46" y="563.70" width="0.9" height="108.50" fill="#fff" opacity="0.45"/>
<rect x="1319.26" y="563.70" width="0.9" height="108.50" fill="#fff" opacity="0.45"/>
<rect x="1319.26" y="551.64" width="0.9" height="12.06" fill="#fff" opacity="0.45"/>
<rect x="1327.06" y="551.64" width="0.9" height="120.56" fill="#fff" opacity="0.45"/>
<rect x="1327.06" y="539.58" width="0.9" height="12.06" fill="#fff" opacity="0.45"/>
<rect x="1334.86" y="539.58" width="0.9" height="132.62" fill="#fff" opacity="0.45"/>
<rect x="1334.86" y="503.42" width="0.9" height="36.17" fill="#fff" opacity="0.45"/>
<rect x="1342.66" y="563.70" width="0.9" height="108.50" fill="#fff" opacity="0.45"/>
<rect x="1350.46" y="563.70" width="0.9" height="108.50" fill="#fff" opacity="0.45"/>
<rect x="1358.26" y="563.70" width="0.9" height="108.50" fill="#fff" opacity="0.45"/>
<rect x="1366.07" y="563.70" width="0.9" height="108.50" fill="#fff" opacity="0.45"/>
<rect x="1373.87" y="563.70" width="0.9" height="108.50" fill="#fff" opacity="0.45"/>
<rect x="1381.67" y="563.70" width="0.9" height="108.50" fill="#fff" opacity="0.45"/>
<rect x="1381.67" y="491.36" width="0.9" height="72.34" fill="#fff" opacity="0.45"/>
<rect x="1389.47" y="563.70" width="0.9" height="108.50" fill="#fff" opacity="0.45"/>
<rect x="1397.27" y="563.70" width="0.9" height="108.50" fill="#fff" opacity="0.45"/>
<rect x="1405.07" y="587.81" width="0.9" height="84.39" fill="#fff" opacity="0.45"/>
<rect x="1412.87" y="587.81" width="0.9" height="84.39" fill="#fff" opacity="0.45"/>
<rect x="1412.87" y="563.70" width="0.9" height="24.11" fill="#fff" opacity="0.45"/>
<rect x="1420.68" y="563.70" width="0.9" height="108.50" fill="#fff" opacity="0.45"/>
<rect x="1420.68" y="527.53" width="0.9" height="36.17" fill="#fff" opacity="0.45"/>
<rect x="1428.48" y="527.53" width="0.9" height="144.67" fill="#fff" opacity="0.45"/>
<rect x="1428.48" y="382.86" width="0.9" height="144.67" fill="#fff" opacity="0.45"/>
<rect x="1436.28" y="491.36" width="0.9" height="180.84" fill="#fff" opacity="0.45"/>
<rect x="1444.08" y="551.64" width="0.9" height="120.56" fill="#fff" opacity="0.45"/>
<rect x="1451.88" y="551.64" width="0.9" height="120.56" fill="#fff" opacity="0.45"/>
<rect x="1459.68" y="551.64" width="0.9" height="120.56" fill="#fff" opacity="0.45"/>
<rect x="1467.48" y="587.81" width="0.9" height="84.39" fill="#fff" opacity="0.45"/>
<rect x="1475.29" y="611.92" width="0.9" height="60.28" fill="#fff" opacity="0.45"/>
<rect x="1483.09" y="623.98" width="0.9" height="48.22" fill="#fff" opacity="0.45"/>
<rect x="1490.89" y="623.98" width="0.9" height="48.22" fill="#fff" opacity="0.45"/>
<rect x="1490.89" y="611.92" width="0.9" height="12.06" fill="#fff" opacity="0.45"/>
<rect x="1498.69" y="611.92" width="0.9" height="60.28" fill="#fff" opacity="0.45"/>
<rect x="1506.49" y="611.92" width="0.9" height="60.28" fill="#fff" opacity="0.45"/>
<rect x="1506.49" y="551.64" width="0.9" height="60.28" fill="#fff" opacity="0.45"/>
<rect x="1514.29" y="587.81" width="0.9" height="84.39" fill="#fff" opacity="0.45"/>
<rect x="1522.09" y="623.98" width="0.9" height="48.22" fill="#fff" opacity="0.45"/>
<rect x="1529.90" y="623.98" width="0.9" height="48.22" fill="#fff" opacity="0.45"/>
<rect x="1529.90" y="611.92" width="0.9" height="12.06" fill="#fff" opacity="0.45"/>
<rect x="1537.70" y="611.92" width="0.9" height="60.28" fill="#fff" opacity="0.45"/>
<rect x="1537.70" y="587.81" width="0.9" height="24.11" fill="#fff" opacity="0.45"/>
<rect x="1545.50" y="599.86" width="0.9" height="72.34" fill="#fff" opacity="0.45"/>
<rect x="1553.30" y="599.86" width="0.9" height="72.34" fill="#fff" opacity="0.45"/>
<rect x="1561.10" y="599.86" width="0.9" height="72.34" fill="#fff" opacity="0.45"/>
<rect x="1561.10" y="539.58" width="0.9" height="60.28" fill="#fff" opacity="0.45"/>
<rect x="1568.90" y="551.64" width="0.9" height="120.56" fill="#fff" opacity="0.45"/>
<rect x="1576.70" y="563.70" width="0.9" height="108.50" fill="#fff" opacity="0.45"/>
<rect x="1584.50" y="611.92" width="0.9" height="60.28" fill="#fff" opacity="0.45"/>
<rect x="1592.31" y="623.98" width="0.9" height="48.22" fill="#fff" opacity="0.45"/>
<rect x="1600.11" y="623.98" width="0.9" height="48.22" fill="#fff" opacity="0.45"/>
<rect x="1607.91" y="648.09" width="0.9" height="24.11" fill="#fff" opacity="0.45"/>
<rect x="1615.71" y="648.09" width="0.9" height="24.11" fill="#fff" opacity="0.45"/>
<rect x="1623.51" y="648.09" width="0.9" height="24.11" fill="#fff" opacity="0.45"/>
<rect x="1631.31" y="660.14" width="0.9" height="12.06" fill="#fff" opacity="0.45"/>
<rect x="1639.11" y="660.14" width="0.9" height="12.06" fill="#fff" opacity="0.45"/>
<rect x="1639.11" y="648.09" width="0.9" height="12.06" fill="#fff" opacity="0.45"/>
<rect x="1646.92" y="648.09" width="0.9" height="24.11" fill="#fff" opacity="0.45"/>
<rect x="1654.72" y="660.14" width="0.9" height="12.06" fill="#fff" opacity="0.45"/>
<rect x="1662.52" y="660.14" width="0.9" height="12.06" fill="#fff" opacity="0.45"/>
<rect x="1662.52" y="648.09" width="0.9" height="12.06" fill="#fff" opacity="0.45"/>
<rect x="1670.32" y="648.09" width="0.9" height="24.11" fill="#fff" opacity="0.45"/>
<rect x="1678.12" y="648.09" width="0.9" height="24.11" fill="#fff" opacity="0.45"/>
<rect x="1685.92" y="660.14" width="0.9" height="12.06" fill="#fff" opacity="0.45"/>
<rect x="1693.72" y="660.14" width="0.9" height="12.06" fill="#fff" opacity="0.45"/>
<rect x="1693.72" y="648.09" width="0.9" height="12.06" fill="#fff" opacity="0.45"/>
<rect x="1701.53" y="648.09" width="0.9" height="24.11" fill="#fff" opacity="0.45"/>
<rect x="1709.33" y="648.09" width="0.9" height="24.11" fill="#fff" opacity="0.45"/>
<rect x="1717.13" y="660.14" width="0.9" height="12.06" fill="#fff" opacity="0.45"/>
<rect x="1724.93" y="660.14" width="0.9" height="12.06" fill="#fff" opacity="0.45"/>
<rect x="1724.93" y="648.09" width="0.9" height="12.06" fill="#fff" opacity="0.45"/>
<rect x="1732.73" y="648.09" width="0.9" height="24.11" fill="#fff" opacity="0.45"/>
<rect x="1740.53" y="648.09" width="0.9" height="24.11" fill="#fff" opacity="0.45"/>
<rect x="1748.33" y="648.09" width="0.9" height="24.11" fill="#fff" opacity="0.45"/>
<rect x="1756.14" y="648.09" width="0.9" height="24.11" fill="#fff" opacity="0.45"/>
<rect x="1763.94" y="648.09" width="0.9" height="24.11" fill="#fff" opacity="0.45"/>
<rect x="1771.74" y="660.14" width="0.9" height="12.06" fill="#fff" opacity="0.45"/>
<rect x="1779.54" y="660.14" width="0.9" height="12.06" fill="#fff" opacity="0.45"/>
<rect x="1779.54" y="648.09" width="0.9" height="12.06" fill="#fff" opacity="0.45"/>
<rect x="1787.34" y="648.09" width="0.9" height="24.11" fill="#fff" opacity="0.45"/>
<rect x="1795.14" y="648.09" width="0.9" height="24.11" fill="#fff" opacity="0.45"/>
<rect x="1802.94" y="648.09" width="0.9" height="24.11" fill="#fff" opacity="0.45"/>
<rect x="1802.94" y="623.98" width="0.9" height="24.11" fill="#fff" opacity="0.45"/>
<rect x="1810.75" y="623.98" width="0.9" height="48.22" fill="#fff" opacity="0.45"/>
<rect x="1810.75" y="611.92" width="0.9" height="12.06" fill="#fff" opacity="0.45"/>
<rect x="1818.55" y="611.92" width="0.9" height="60.28" fill="#fff" opacity="0.45"/>
<rect x="1818.55" y="599.86" width="0.9" height="12.06" fill="#fff" opacity="0.45"/>
<rect x="1826.35" y="611.92" width="0.9" height="60.28" fill="#fff" opacity="0.45"/>
<rect x="1834.15" y="611.92" width="0.9" height="60.28" fill="#fff" opacity="0.45"/>
<rect x="1834.15" y="599.86" width="0.9" height="12.06" fill="#fff" opacity="0.45"/>
<rect x="1841.95" y="599.86" width="0.9" height="72.34" fill="#fff" opacity="0.45"/>
<rect x="1849.75" y="599.86" width="0.9" height="72.34" fill="#fff" opacity="0.45"/>
<rect x="1857.55" y="611.92" width="0.9" height="60.28" fill="#fff" opacity="0.45"/>
<rect x="1865.35" y="611.92" width="0.9" height="60.28" fill="#fff" opacity="0.45"/>
<rect x="1865.35" y="599.86" width="0.9" height="12.06" fill="#fff" opacity="0.45"/>
<rect x="1873.16" y="599.86" width="0.9" height="72.34" fill="#fff" opacity="0.45"/>
<rect x="1880.96" y="611.92" width="0.9" height="60.28" fill="#fff" opacity="0.45"/>
<rect x="1888.76" y="611.92" width="0.9" height="60.28" fill="#fff" opacity="0.45"/>
<rect x="1888.76" y="599.86" width="0.9" height="12.06" fill="#fff" opacity="0.45"/>
<rect x="1896.56" y="599.86" width="0.9" height="72.34" fill="#fff" opacity="0.45"/>
<rect x="1904.36" y="599.86" width="0.9" height="72.34" fill="#fff" opacity="0.45"/>
<rect x="1912.16" y="599.86" width="0.9" height="72.34" fill="#fff" opacity="0.45"/>
<rect x="1919.96" y="599.86" width="0.9" height="72.34" fill="#fff" opacity="0.45"/>
<rect x="1927.77" y="611.92" width="0.9" height="60.28" fill="#fff" opacity="0.45"/>
<rect x="1935.57" y="611.92" width="0.9" height="60.28" fill="#fff" opacity="0.45"/>
<rect x="1935.57" y="599.86" width="0.9" height="12.06" fill="#fff" opacity="0.45"/>
<rect x="1943.37" y="599.86" width="0.9" height="72.34" fill="#fff" opacity="0.45"/>
<rect x="1951.17" y="611.92" width="0.9" height="60.28" fill="#fff" opacity="0.45"/>
<rect x="1958.97" y="611.92" width="0.9" height="60.28" fill="#fff" opacity="0.45"/>
<rect x="1958.97" y="599.86" width="0.9" height="12.06" fill="#fff" opacity="0.45"/>
<rect x="1966.77" y="599.86" width="0.9" height="72.34" fill="#fff" opacity="0.45"/>
<rect x="1974.57" y="599.86" width="0.9" height="72.34" fill="#fff" opacity="0.45"/>
<rect x="1982.38" y="599.86" width="0.9" height="72.34" fill="#fff" opacity="0.45"/>
<rect x="1990.18" y="599.86" width="0.9" height="72.34" fill="#fff" opacity="0.45"/>
<rect x="1997.98" y="599.86" width="0.9" height="72.34" fill="#fff" opacity="0.45"/>
<rect x="2005.78" y="599.86" width="0.9" height="72.34" fill="#fff" opacity="0.45"/>
<rect x="2013.58" y="611.92" width="0.9" height="60.28" fill="#fff" opacity="0.45"/>
<rect x="2021.38" y="611.92" width="0.9" height="60.28" fill="#fff" opacity="0.45"/>
<rect x="2021.38" y="599.86" width="0.9" height="12.06" fill="#fff" opacity="0.45"/>
<rect x="2029.18" y="599.86" width="0.9" height="72.34" fill="#fff" opacity="0.45"/>
<rect x="2036.99" y="599.86" width="0.9" height="72.34" fill="#fff" opacity="0.45"/>
<rect x="2044.79" y="611.92" width="0.9" height="60.28" fill="#fff" opacity="0.45"/>
<rect x="2052.59" y="611.92" width="0.9" height="60.28" fill="#fff" opacity="0.45"/>
<rect x="2052.59" y="599.86" width="0.9" height="12.06" fill="#fff" opacity="0.45"/>
<rect x="2060.39" y="599.86" width="0.9" height="72.34" fill="#fff" opacity="0.45"/>
<rect x="2068.19" y="611.92" width="0.9" height="60.28" fill="#fff" opacity="0.45"/>
<rect x="2075.99" y="611.92" width="0.9" height="60.28" fill="#fff" opacity="0.45"/>
<rect x="2075.99" y="599.86" width="0.9" height="12.06" fill="#fff" opacity="0.45"/>
<rect x="2083.79" y="599.86" width="0.9" height="72.34" fill="#fff" opacity="0.45"/>
<rect x="2091.60" y="611.92" width="0.9" height="60.28" fill="#fff" opacity="0.45"/>
<rect x="2099.40" y="611.92" width="0.9" height="60.28" fill="#fff" opacity="0.45"/>
<rect x="2099.40" y="599.86" width="0.9" height="12.06" fill="#fff" opacity="0.45"/>
<rect x="2107.20" y="599.86" width="0.9" height="72.34" fill="#fff" opacity="0.45"/>
<rect x="2115.00" y="611.92" width="0.9" height="60.28" fill="#fff" opacity="0.45"/>
<rect x="2122.80" y="611.92" width="0.9" height="60.28" fill="#fff" opacity="0.45"/>
<rect x="2122.80" y="599.86" width="0.9" height="12.06" fill="#fff" opacity="0.45"/>
<rect x="2130.60" y="611.92" width="0.9" height="60.28" fill="#fff" opacity="0.45"/>
<rect x="2138.40" y="611.92" width="0.9" height="60.28" fill="#fff" opacity="0.45"/>
<rect x="2138.40" y="599.86" width="0.9" height="12.06" fill="#fff" opacity="0.45"/>
<rect x="2146.20" y="611.92" width="0.9" height="60.28" fill="#fff" opacity="0.45"/>
<rect x="2154.01" y="611.92" width="0.9" height="60.28" fill="#fff" opacity="0.45"/>
<rect x="2154.01" y="599.86" width="0.9" height="12.06" fill="#fff" opacity="0.45"/>
<rect x="2161.81" y="611.92" width="0.9" height="60.28" fill="#fff" opacity="0.45"/>
<rect x="2169.61" y="611.92" width="0.9" height="60.28" fill="#fff" opacity="0.45"/>
<rect x="2169.61" y="599.86" width="0.9" height="12.06" fill="#fff" opacity="0.45"/>
<rect x="2177.41" y="611.92" width="0.9" height="60.28" fill="#fff" opacity="0.45"/>
<rect x="2185.21" y="611.92" width="0.9" height="60.28" fill="#fff" opacity="0.45"/>
<rect x="2185.21" y="599.86" width="0.9" height="12.06" fill="#fff" opacity="0.45"/>
<rect x="2193.01" y="599.86" width="0.9" height="72.34" fill="#fff" opacity="0.45"/>
<rect x="2200.81" y="611.92" width="0.9" height="60.28" fill="#fff" opacity="0.45"/>
<rect x="2208.62" y="611.92" width="0.9" height="60.28" fill="#fff" opacity="0.45"/>
<rect x="2208.62" y="599.86" width="0.9" height="12.06" fill="#fff" opacity="0.45"/>
<rect x="2216.42" y="599.86" width="0.9" height="72.34" fill="#fff" opacity="0.45"/>
<rect x="2224.22" y="599.86" width="0.9" height="72.34" fill="#fff" opacity="0.45"/>
<rect x="2232.02" y="599.86" width="0.9" height="72.34" fill="#fff" opacity="0.45"/>
<rect x="2239.82" y="599.86" width="0.9" height="72.34" fill="#fff" opacity="0.45"/>
<rect x="2247.62" y="599.86" width="0.9" height="72.34" fill="#fff" opacity="0.45"/>
<rect x="2247.62" y="587.81" width="0.9" height="12.06" fill="#fff" opacity="0.45"/>
<rect x="2255.42" y="599.86" width="0.9" height="72.34" fill="#fff" opacity="0.45"/>
<rect x="2263.23" y="599.86" width="0.9" height="72.34" fill="#fff" opacity="0.45"/>
<rect x="2271.03" y="599.86" width="0.9" height="72.34" fill="#fff" opacity="0.45"/>
<rect x="2278.83" y="599.86" width="0.9" height="72.34" fill="#fff" opacity="0.45"/>
<rect x="2278.83" y="587.81" width="0.9" height="12.06" fill="#fff" opacity="0.45"/>
<rect x="2286.63" y="599.86" width="0.9" height="72.34" fill="#fff" opacity="0.45"/>
<rect x="2294.43" y="599.86" width="0.9" height="72.34" fill="#fff" opacity="0.45"/>
<rect x="2302.23" y="599.86" width="0.9" height="72.34" fill="#fff" opacity="0.45"/>
<rect x="2310.03" y="599.86" width="0.9" height="72.34" fill="#fff" opacity="0.45"/>
<rect x="2310.03" y="587.81" width="0.9" height="12.06" fill="#fff" opacity="0.45"/>
<rect x="2317.84" y="599.86" width="0.9" height="72.34" fill="#fff" opacity="0.45"/>
<rect x="2325.64" y="599.86" width="0.9" height="72.34" fill="#fff" opacity="0.45"/>
<rect x="2333.44" y="599.86" width="0.9" height="72.34" fill="#fff" opacity="0.45"/>
<rect x="2333.44" y="587.81" width="0.9" height="12.06" fill="#fff" opacity="0.45"/>
<rect x="2341.24" y="599.86" width="0.9" height="72.34" fill="#fff" opacity="0.45"/>
<rect x="2349.04" y="599.86" width="0.9" height="72.34" fill="#fff" opacity="0.45"/>
<rect x="2356.84" y="599.86" width="0.9" height="72.34" fill="#fff" opacity="0.45"/>
<rect x="2364.64" y="611.92" width="0.9" height="60.28" fill="#fff" opacity="0.45"/>
<rect x="2372.45" y="611.92" width="0.9" height="60.28" fill="#fff" opacity="0.45"/>
<rect x="2372.45" y="599.86" width="0.9" height="12.06" fill="#fff" opacity="0.45"/>
<rect x="2380.25" y="599.86" width="0.9" height="72.34" fill="#fff" opacity="0.45"/>
<line x1="152.4" y1="69.4" x2="152.4" y2="673.2" stroke="#333" stroke-width="1.5"/>
<rect x="153.4" y="672.7" width="2247.4" height="1.9" fill="#777"/>
<line x1="153.40" y1="674.2" x2="153.40" y2="683.7" stroke="#aaaaaa" stroke-width="1"/>
<line x1="247.02" y1="674.2" x2="247.02" y2="683.7" stroke="#aaaaaa" stroke-width="1"/>
<line x1="340.63" y1="674.2" x2="340.63" y2="683.7" stroke="#aaaaaa" stroke-width="1"/>
<line x1="434.25" y1="674.2" x2="434.25" y2="683.7" stroke="#aaaaaa" stroke-width="1"/>
<line x1="527.87" y1="674.2" x2="527.87" y2="683.7" stroke="#aaaaaa" stroke-width="1"/>
<line x1="621.48" y1="674.2" x2="621.48" y2="683.7" stroke="#aaaaaa" stroke-width="1"/>
<line x1="715.10" y1="674.2" x2="715.10" y2="683.7" stroke="#aaaaaa" stroke-width="1"/>
<line x1="808.72" y1="674.2" x2="808.72" y2="683.7" stroke="#aaaaaa" stroke-width="1"/>
<line x1="902.33" y1="674.2" x2="902.33" y2="683.7" stroke="#aaaaaa" stroke-width="1"/>
<line x1="995.95" y1="674.2" x2="995.95" y2="683.7" stroke="#aaaaaa" stroke-width="1"/>
<line x1="1089.57" y1="674.2" x2="1089.57" y2="683.7" stroke="#aaaaaa" stroke-width="1"/>
<line x1="1183.18" y1="674.2" x2="1183.18" y2="683.7" stroke="#aaaaaa" stroke-width="1"/>
<line x1="1276.80" y1="674.2" x2="1276.80" y2="683.7" stroke="#aaaaaa" stroke-width="1"/>
<line x1="1370.42" y1="674.2" x2="1370.42" y2="683.7" stroke="#aaaaaa" stroke-width="1"/>
<line x1="1464.03" y1="674.2" x2="1464.03" y2="683.7" stroke="#aaaaaa" stroke-width="1"/>
<line x1="1557.65" y1="674.2" x2="1557.65" y2="683.7" stroke="#aaaaaa" stroke-width="1"/>
<line x1="1651.27" y1="674.2" x2="1651.27" y2="683.7" stroke="#aaaaaa" stroke-width="1"/>
<line x1="1744.88" y1="674.2" x2="1744.88" y2="683.7" stroke="#aaaaaa" stroke-width="1"/>
<line x1="1838.50" y1="674.2" x2="1838.50" y2="683.7" stroke="#aaaaaa" stroke-width="1"/>
<line x1="1932.12" y1="674.2" x2="1932.12" y2="683.7" stroke="#aaaaaa" stroke-width="1"/>
<line x1="2025.73" y1="674.2" x2="2025.73" y2="683.7" stroke="#aaaaaa" stroke-width="1"/>
<line x1="2119.35" y1="674.2" x2="2119.35" y2="683.7" stroke="#aaaaaa" stroke-width="1"/>
<line x1="2212.97" y1="674.2" x2="2212.97" y2="683.7" stroke="#aaaaaa" stroke-width="1"/>
<line x1="2306.58" y1="674.2" x2="2306.58" y2="683.7" stroke="#aaaaaa" stroke-width="1"/>
<line x1="2400.20" y1="674.2" x2="2400.20" y2="683.7" stroke="#aaaaaa" stroke-width="1"/>
<text x="120.39" y="677.80" font-size="18.3" fill="#333" textLength="11.30" lengthAdjust="spacingAndGlyphs" xml:space="preserve">0</text>
<text x="120.45" y="617.52" font-size="18.3" fill="#333" textLength="11.30" lengthAdjust="spacingAndGlyphs" xml:space="preserve">5</text>
<text x="109.09" y="557.24" font-size="18.3" fill="#333" textLength="22.61" lengthAdjust="spacingAndGlyphs" xml:space="preserve">10</text>
<text x="109.15" y="496.96" font-size="18.3" fill="#333" textLength="22.61" lengthAdjust="spacingAndGlyphs" xml:space="preserve">15</text>
<text x="109.09" y="436.68" font-size="18.3" fill="#333" textLength="22.61" lengthAdjust="spacingAndGlyphs" xml:space="preserve">20</text>
<text x="109.15" y="376.40" font-size="18.3" fill="#333" textLength="22.61" lengthAdjust="spacingAndGlyphs" xml:space="preserve">25</text>
<text x="109.09" y="316.12" font-size="18.3" fill="#333" textLength="22.61" lengthAdjust="spacingAndGlyphs" xml:space="preserve">30</text>
<text x="109.15" y="255.84" font-size="18.3" fill="#333" textLength="22.61" lengthAdjust="spacingAndGlyphs" xml:space="preserve">35</text>
<text x="109.09" y="195.56" font-size="18.3" fill="#333" textLength="22.61" lengthAdjust="spacingAndGlyphs" xml:space="preserve">40</text>
<text x="109.15" y="135.28" font-size="18.3" fill="#333" textLength="22.61" lengthAdjust="spacingAndGlyphs" xml:space="preserve">45</text>
<text x="109.09" y="75.00" font-size="18.3" fill="#333" textLength="22.61" lengthAdjust="spacingAndGlyphs" xml:space="preserve">50</text>
<text x="142.94" y="706.70" font-size="18.3" fill="#000" textLength="22.65" lengthAdjust="spacingAndGlyphs" xml:space="preserve">0h</text>
<text x="236.18" y="706.70" font-size="18.3" fill="#000" textLength="22.65" lengthAdjust="spacingAndGlyphs" xml:space="preserve">1h</text>
<text x="330.06" y="706.70" font-size="18.3" fill="#000" textLength="22.65" lengthAdjust="spacingAndGlyphs" xml:space="preserve">2h</text>
<text x="423.80" y="706.70" font-size="18.3" fill="#000" textLength="22.65" lengthAdjust="spacingAndGlyphs" xml:space="preserve">3h</text>
<text x="517.57" y="706.70" font-size="18.3" fill="#000" textLength="22.65" lengthAdjust="spacingAndGlyphs" xml:space="preserve">4h</text>
<text x="611.01" y="706.70" font-size="18.3" fill="#000" textLength="22.65" lengthAdjust="spacingAndGlyphs" xml:space="preserve">5h</text>
<text x="704.52" y="706.70" font-size="18.3" fill="#000" textLength="22.65" lengthAdjust="spacingAndGlyphs" xml:space="preserve">6h</text>
<text x="798.13" y="706.70" font-size="18.3" fill="#000" textLength="22.65" lengthAdjust="spacingAndGlyphs" xml:space="preserve">7h</text>
<text x="891.83" y="706.70" font-size="18.3" fill="#000" textLength="22.65" lengthAdjust="spacingAndGlyphs" xml:space="preserve">8h</text>
<text x="985.41" y="706.70" font-size="18.3" fill="#000" textLength="22.65" lengthAdjust="spacingAndGlyphs" xml:space="preserve">9h</text>
<text x="1073.07" y="706.70" font-size="18.3" fill="#000" textLength="33.97" lengthAdjust="spacingAndGlyphs" xml:space="preserve">10h</text>
<text x="1166.68" y="706.70" font-size="18.3" fill="#000" textLength="33.97" lengthAdjust="spacingAndGlyphs" xml:space="preserve">11h</text>
<text x="1260.30" y="706.70" font-size="18.3" fill="#000" textLength="33.97" lengthAdjust="spacingAndGlyphs" xml:space="preserve">12h</text>
<text x="1353.92" y="706.70" font-size="18.3" fill="#000" textLength="33.97" lengthAdjust="spacingAndGlyphs" xml:space="preserve">13h</text>
<text x="1447.53" y="706.70" font-size="18.3" fill="#000" textLength="33.97" lengthAdjust="spacingAndGlyphs" xml:space="preserve">14h</text>
<text x="1541.15" y="706.70" font-size="18.3" fill="#000" textLength="33.97" lengthAdjust="spacingAndGlyphs" xml:space="preserve">15h</text>
<text x="1634.77" y="706.70" font-size="18.3" fill="#000" textLength="33.97" lengthAdjust="spacingAndGlyphs" xml:space="preserve">16h</text>
<text x="1728.38" y="706.70" font-size="18.3" fill="#000" textLength="33.97" lengthAdjust="spacingAndGlyphs" xml:space="preserve">17h</text>
<text x="1822.00" y="706.70" font-size="18.3" fill="#000" textLength="33.97" lengthAdjust="spacingAndGlyphs" xml:space="preserve">18h</text>
<text x="1915.62" y="706.70" font-size="18.3" fill="#000" textLength="33.97" lengthAdjust="spacingAndGlyphs" xml:space="preserve">19h</text>
<text x="2009.50" y="706.70" font-size="18.3" fill="#000" textLength="33.97" lengthAdjust="spacingAndGlyphs" xml:space="preserve">20h</text>
<text x="2103.11" y="706.70" font-size="18.3" fill="#000" textLength="33.97" lengthAdjust="spacingAndGlyphs" xml:space="preserve">21h</text>
<text x="2196.73" y="706.70" font-size="18.3" fill="#000" textLength="33.97" lengthAdjust="spacingAndGlyphs" xml:space="preserve">22h</text>
<text x="2290.35" y="706.70" font-size="18.3" fill="#000" textLength="33.97" lengthAdjust="spacingAndGlyphs" xml:space="preserve">23h</text>
<text x="2389.74" y="706.70" font-size="18.3" fill="#000" textLength="22.65" lengthAdjust="spacingAndGlyphs" xml:space="preserve">0h</text>
<g transform="translate(86.2,369.95) rotate(-90)"><text x="-16.20" y="0.00" font-size="23" fill="#333" textLength="31.02" lengthAdjust="spacingAndGlyphs" xml:space="preserve">kW</text></g>
<rect x="160.1" y="820.2" width="2261.8" height="507.1" fill="#000" opacity="0.38" filter="url(#sh2)"/>
<rect x="155.05" y="815.20" width="2261.75" height="505.10" fill="#efefef"/>
<rect x="478.16" y="815.20" width="323.11" height="50.51" fill="#ffffff"/>
<rect x="1124.37" y="815.20" width="323.11" height="50.51" fill="#ffffff"/>
<rect x="1770.59" y="815.20" width="323.11" height="50.51" fill="#ffffff"/>
<line x1="478.16" y1="815.20" x2="478.16" y2="865.71" stroke="#c6c6c6" stroke-width="1.1"/>
<line x1="801.26" y1="815.20" x2="801.26" y2="865.71" stroke="#c6c6c6" stroke-width="1.1"/>
<line x1="1124.37" y1="815.20" x2="1124.37" y2="865.71" stroke="#c6c6c6" stroke-width="1.1"/>
<line x1="1447.48" y1="815.20" x2="1447.48" y2="865.71" stroke="#c6c6c6" stroke-width="1.1"/>
<line x1="1770.59" y1="815.20" x2="1770.59" y2="865.71" stroke="#c6c6c6" stroke-width="1.1"/>
<line x1="2093.69" y1="815.20" x2="2093.69" y2="865.71" stroke="#c6c6c6" stroke-width="1.1"/>
<rect x="478.16" y="916.22" width="323.11" height="50.51" fill="#ffffff"/>
<rect x="1124.37" y="916.22" width="323.11" height="50.51" fill="#ffffff"/>
<rect x="1770.59" y="916.22" width="323.11" height="50.51" fill="#ffffff"/>
<line x1="478.16" y1="916.22" x2="478.16" y2="966.73" stroke="#c6c6c6" stroke-width="1.1"/>
<line x1="801.26" y1="916.22" x2="801.26" y2="966.73" stroke="#c6c6c6" stroke-width="1.1"/>
<line x1="1124.37" y1="916.22" x2="1124.37" y2="966.73" stroke="#c6c6c6" stroke-width="1.1"/>
<line x1="1447.48" y1="916.22" x2="1447.48" y2="966.73" stroke="#c6c6c6" stroke-width="1.1"/>
<line x1="1770.59" y1="916.22" x2="1770.59" y2="966.73" stroke="#c6c6c6" stroke-width="1.1"/>
<line x1="2093.69" y1="916.22" x2="2093.69" y2="966.73" stroke="#c6c6c6" stroke-width="1.1"/>
<rect x="478.16" y="1017.24" width="323.11" height="50.51" fill="#ffffff"/>
<rect x="1124.37" y="1017.24" width="323.11" height="50.51" fill="#ffffff"/>
<rect x="1770.59" y="1017.24" width="323.11" height="50.51" fill="#ffffff"/>
<line x1="478.16" y1="1017.24" x2="478.16" y2="1067.75" stroke="#c6c6c6" stroke-width="1.1"/>
<line x1="801.26" y1="1017.24" x2="801.26" y2="1067.75" stroke="#c6c6c6" stroke-width="1.1"/>
<line x1="1124.37" y1="1017.24" x2="1124.37" y2="1067.75" stroke="#c6c6c6" stroke-width="1.1"/>
<line x1="1447.48" y1="1017.24" x2="1447.48" y2="1067.75" stroke="#c6c6c6" stroke-width="1.1"/>
<line x1="1770.59" y1="1017.24" x2="1770.59" y2="1067.75" stroke="#c6c6c6" stroke-width="1.1"/>
<line x1="2093.69" y1="1017.24" x2="2093.69" y2="1067.75" stroke="#c6c6c6" stroke-width="1.1"/>
<rect x="478.16" y="1118.26" width="323.11" height="50.51" fill="#ffffff"/>
<rect x="1124.37" y="1118.26" width="323.11" height="50.51" fill="#ffffff"/>
<rect x="1770.59" y="1118.26" width="323.11" height="50.51" fill="#ffffff"/>
<line x1="478.16" y1="1118.26" x2="478.16" y2="1168.77" stroke="#c6c6c6" stroke-width="1.1"/>
<line x1="801.26" y1="1118.26" x2="801.26" y2="1168.77" stroke="#c6c6c6" stroke-width="1.1"/>
<line x1="1124.37" y1="1118.26" x2="1124.37" y2="1168.77" stroke="#c6c6c6" stroke-width="1.1"/>
<line x1="1447.48" y1="1118.26" x2="1447.48" y2="1168.77" stroke="#c6c6c6" stroke-width="1.1"/>
<line x1="1770.59" y1="1118.26" x2="1770.59" y2="1168.77" stroke="#c6c6c6" stroke-width="1.1"/>
<line x1="2093.69" y1="1118.26" x2="2093.69" y2="1168.77" stroke="#c6c6c6" stroke-width="1.1"/>
<rect x="478.16" y="1219.28" width="323.11" height="50.51" fill="#ffffff"/>
<rect x="1124.37" y="1219.28" width="323.11" height="50.51" fill="#ffffff"/>
<rect x="1770.59" y="1219.28" width="323.11" height="50.51" fill="#ffffff"/>
<line x1="478.16" y1="1219.28" x2="478.16" y2="1269.79" stroke="#c6c6c6" stroke-width="1.1"/>
<line x1="801.26" y1="1219.28" x2="801.26" y2="1269.79" stroke="#c6c6c6" stroke-width="1.1"/>
<line x1="1124.37" y1="1219.28" x2="1124.37" y2="1269.79" stroke="#c6c6c6" stroke-width="1.1"/>
<line x1="1447.48" y1="1219.28" x2="1447.48" y2="1269.79" stroke="#c6c6c6" stroke-width="1.1"/>
<line x1="1770.59" y1="1219.28" x2="1770.59" y2="1269.79" stroke="#c6c6c6" stroke-width="1.1"/>
<line x1="2093.69" y1="1219.28" x2="2093.69" y2="1269.79" stroke="#c6c6c6" stroke-width="1.1"/>
<line x1="143.1" y1="1320.30" x2="2416.8" y2="1320.30" stroke="#c0c0c0" stroke-width="1"/>
<line x1="143.1" y1="1269.79" x2="2416.8" y2="1269.79" stroke="#c0c0c0" stroke-width="1"/>
<line x1="143.1" y1="1219.28" x2="2416.8" y2="1219.28" stroke="#c0c0c0" stroke-width="1"/>
<line x1="143.1" y1="1168.77" x2="2416.8" y2="1168.77" stroke="#c0c0c0" stroke-width="1"/>
<line x1="143.1" y1="1118.26" x2="2416.8" y2="1118.26" stroke="#c0c0c0" stroke-width="1"/>
<line x1="143.1" y1="1067.75" x2="2416.8" y2="1067.75" stroke="#c0c0c0" stroke-width="1"/>
<line x1="143.1" y1="1017.24" x2="2416.8" y2="1017.24" stroke="#c0c0c0" stroke-width="1"/>
<line x1="143.1" y1="966.73" x2="2416.8" y2="966.73" stroke="#c0c0c0" stroke-width="1"/>
<line x1="143.1" y1="916.22" x2="2416.8" y2="916.22" stroke="#c0c0c0" stroke-width="1"/>
<line x1="143.1" y1="865.71" x2="2416.8" y2="865.71" stroke="#c0c0c0" stroke-width="1"/>
<line x1="143.1" y1="815.20" x2="2416.8" y2="815.20" stroke="#c0c0c0" stroke-width="1"/>
<path d="M155.05,1320.30V1259.69H156.17V1259.69H157.29V1259.69H158.42V1259.69H159.54V1259.69H160.66V1259.69H161.78V1259.69H162.90V1259.69H164.03V1259.69H165.15V1259.69H166.27V1259.69H167.39V1259.69H168.51V1259.69H169.63V1259.69H170.76V1259.69H171.88V1259.69H173.00V1259.69H174.12V1259.69H175.24V1259.69H176.37V1259.69H177.49V1259.69H178.61V1259.69H179.73V1259.69H180.85V1259.69H181.98V1259.69H183.10V1259.69H184.22V1259.69H185.34V1259.69H186.46V1259.69H187.59V1259.69H188.71V1259.69H189.83V1259.69H190.95V1259.69H192.07V1259.69H193.19V1259.69H194.32V1259.69H195.44V1259.69H196.56V1259.69H197.68V1259.69H198.80V1259.69H199.93V1259.69H201.05V1259.69H202.17V1259.69H203.29V1259.69H204.41V1259.69H205.54V1259.69H206.66V1259.69H207.78V1259.69H208.90V1259.69H210.02V1259.69H211.14V1259.69H212.27V1259.69H213.39V1259.69H214.51V1259.69H215.63V1259.69H216.75V1259.69H217.88V1259.69H219.00V1259.69H220.12V1259.69H221.24V1259.69H222.36V1259.69H223.49V1259.69H224.61V1259.69H225.73V1259.69H226.85V1259.69H227.97V1259.69H229.10V1259.69H230.22V1259.69H231.34V1259.69H232.46V1259.69H233.58V1259.69H234.70V1259.69H235.83V1259.69H236.95V1259.69H238.07V1259.69H239.19V1259.69H240.31V1259.69H241.44V1259.69H242.56V1259.69H243.68V1259.69H244.80V1259.69H245.92V1259.69H247.05V1259.69H248.17V1259.69H249.29V1259.69H250.41V1259.69H251.53V1259.69H252.66V1259.69H253.78V1239.48H254.90V1239.48H256.02V1239.48H257.14V1249.59H258.26V1249.59H259.39V1249.59H260.51V1249.59H261.63V1249.59H262.75V1249.59H263.87V1249.59H265.00V1249.59H266.12V1249.59H267.24V1249.59H268.36V1249.59H269.48V1249.59H270.61V1249.59H271.73V1249.59H272.85V1249.59H273.97V1249.59H275.09V1249.59H276.22V1249.59H277.34V1249.59H278.46V1249.59H279.58V1249.59H280.70V1249.59H281.82V1249.59H282.95V1249.59H284.07V1259.69H285.19V1259.69H286.31V1259.69H287.43V1259.69H288.56V1259.69H289.68V1259.69H290.80V1259.69H291.92V1259.69H293.04V1259.69H294.17V1259.69H295.29V1259.69H296.41V1259.69H297.53V1259.69H298.65V1259.69H299.78V1259.69H300.90V1259.69H302.02V1259.69H303.14V1259.69H304.26V1259.69H305.38V1259.69H306.51V1259.69H307.63V1259.69H308.75V1259.69H309.87V1259.69H310.99V1259.69H312.12V1259.69H313.24V1259.69H314.36V1259.69H315.48V1259.69H316.60V1259.69H317.73V1259.69H318.85V1259.69H319.97V1259.69H321.09V1259.69H322.21V1259.69H323.33V1259.69H324.46V1259.69H325.58V1259.69H326.70V1259.69H327.82V1259.69H328.94V1259.69H330.07V1259.69H331.19V1259.69H332.31V1259.69H333.43V1259.69H334.55V1259.69H335.68V1259.69H336.80V1259.69H337.92V1259.69H339.04V1259.69H340.16V1259.69H341.29V1259.69H342.41V1259.69H343.53V1259.69H344.65V1259.69H345.77V1259.69H346.89V1259.69H348.02V1259.69H349.14V1259.69H350.26V1259.69H351.38V1259.69H352.50V1259.69H353.63V1259.69H354.75V1259.69H355.87V1259.69H356.99V1259.69H358.11V1259.69H359.24V1259.69H360.36V1259.69H361.48V1259.69H362.60V1259.69H363.72V1259.69H364.85V1259.69H365.97V1259.69H367.09V1259.69H368.21V1259.69H369.33V1259.69H370.45V1259.69H371.58V1259.69H372.70V1259.69H373.82V1259.69H374.94V1259.69H376.06V1259.69H377.19V1259.69H378.31V1259.69H379.43V1259.69H380.55V1259.69H381.67V1259.69H382.80V1259.69H383.92V1259.69H385.04V1259.69H386.16V1259.69H387.28V1259.69H388.41V1259.69H389.53V1259.69H390.65V1259.69H391.77V1259.69H392.89V1259.69H394.01V1259.69H395.14V1259.69H396.26V1259.69H397.38V1259.69H398.50V1259.69H399.62V1259.69H400.75V1259.69H401.87V1259.69H402.99V1259.69H404.11V1259.69H405.23V1259.69H406.36V1259.69H407.48V1259.69H408.60V1259.69H409.72V1259.69H410.84V1259.69H411.97V1259.69H413.09V1259.69H414.21V1259.69H415.33V1259.69H416.45V1259.69H417.57V1259.69H418.70V1259.69H419.82V1259.69H420.94V1259.69H422.06V1259.69H423.18V1259.69H424.31V1259.69H425.43V1259.69H426.55V1259.69H427.67V1259.69H428.79V1259.69H429.92V1259.69H431.04V1259.69H432.16V1259.69H433.28V1259.69H434.40V1259.69H435.52V1259.69H436.65V1259.69H437.77V1259.69H438.89V1259.69H440.01V1259.69H441.13V1259.69H442.26V1259.69H443.38V1259.69H444.50V1259.69H445.62V1259.69H446.74V1259.69H447.87V1249.59H448.99V1249.59H450.11V1249.59H451.23V1249.59H452.35V1249.59H453.48V1249.59H454.60V1249.59H455.72V1249.59H456.84V1249.59H457.96V1249.59H459.08V1249.59H460.21V1249.59H461.33V1249.59H462.45V1249.59H463.57V1249.59H464.69V1249.59H465.82V1249.59H466.94V1259.69H468.06V1259.69H469.18V1259.69H470.30V1259.69H471.43V1259.69H472.55V1259.69H473.67V1259.69H474.79V1259.69H475.91V1259.69H477.04V1259.69H478.16V1259.69H479.28V1259.69H480.40V1259.69H481.52V1259.69H482.64V1259.69H483.77V1259.69H484.89V1259.69H486.01V1259.69H487.13V1259.69H488.25V1259.69H489.38V1259.69H490.50V1259.69H491.62V1259.69H492.74V1259.69H493.86V1259.69H494.99V1259.69H496.11V1259.69H497.23V1259.69H498.35V1259.69H499.47V1259.69H500.60V1259.69H501.72V1259.69H502.84V1259.69H503.96V1259.69H505.08V1259.69H506.20V1259.69H507.33V1259.69H508.45V1259.69H509.57V1259.69H510.69V1259.69H511.81V1259.69H512.94V1259.69H514.06V1259.69H515.18V1259.69H516.30V1259.69H517.42V1259.69H518.55V1259.69H519.67V1259.69H520.79V1259.69H521.91V1259.69H523.03V1259.69H524.16V1259.69H525.28V1259.69H526.40V1259.69H527.52V1259.69H528.64V1259.69H529.76V1259.69H530.89V1259.69H532.01V1259.69H533.13V1259.69H534.25V1259.69H535.37V1259.69H536.50V1259.69H537.62V1259.69H538.74V1259.69H539.86V1259.69H540.98V1259.69H542.11V1259.69H543.23V1259.69H544.35V1259.69H545.47V1259.69H546.59V1259.69H547.71V1259.69H548.84V1259.69H549.96V1259.69H551.08V1259.69H552.20V1259.69H553.32V1259.69H554.45V1259.69H555.57V1259.69H556.69V1259.69H557.81V1259.69H558.93V1259.69H560.06V1259.69H561.18V1259.69H562.30V1259.69H563.42V1259.69H564.54V1259.69H565.67V1259.69H566.79V1259.69H567.91V1259.69H569.03V1259.69H570.15V1259.69H571.27V1259.69H572.40V1259.69H573.52V1259.69H574.64V1259.69H575.76V1259.69H576.88V1259.69H578.01V1259.69H579.13V1259.69H580.25V1259.69H581.37V1259.69H582.49V1259.69H583.62V1259.69H584.74V1259.69H585.86V1259.69H586.98V1259.69H588.10V1249.59H589.23V1249.59H590.35V1259.69H591.47V1259.69H592.59V1259.69H593.71V1259.69H594.83V1259.69H595.96V1259.69H597.08V1259.69H598.20V1259.69H599.32V1259.69H600.44V1259.69H601.57V1259.69H602.69V1259.69H603.81V1259.69H604.93V1259.69H606.05V1259.69H607.18V1259.69H608.30V1259.69H609.42V1259.69H610.54V1259.69H611.66V1259.69H612.79V1259.69H613.91V1259.69H615.03V1259.69H616.15V1259.69H617.27V1259.69H618.39V1259.69H619.52V1259.69H620.64V1259.69H621.76V1259.69H622.88V1259.69H624.00V1259.69H625.13V1259.69H626.25V1259.69H627.37V1259.69H628.49V1259.69H629.61V1259.69H630.74V1249.59H631.86V1249.59H632.98V1249.59H634.10V1249.59H635.22V1249.59H636.35V1249.59H637.47V1249.59H638.59V1249.59H639.71V1249.59H640.83V1249.59H641.95V1249.59H643.08V1249.59H644.20V1249.59H645.32V1249.59H646.44V1249.59H647.56V1259.69H648.69V1259.69H649.81V1259.69H650.93V1259.69H652.05V1259.69H653.17V1259.69H654.30V1259.69H655.42V1259.69H656.54V1259.69H657.66V1259.69H658.78V1259.69H659.90V1259.69H661.03V1259.69H662.15V1259.69H663.27V1259.69H664.39V1259.69H665.51V1259.69H666.64V1259.69H667.76V1259.69H668.88V1259.69H670.00V1259.69H671.12V1259.69H672.25V1259.69H673.37V1259.69H674.49V1259.69H675.61V1259.69H676.73V1259.69H677.86V1259.69H678.98V1259.69H680.10V1259.69H681.22V1259.69H682.34V1259.69H683.46V1259.69H684.59V1259.69H685.71V1259.69H686.83V1259.69H687.95V1259.69H689.07V1259.69H690.20V1259.69H691.32V1259.69H692.44V1259.69H693.56V1259.69H694.68V1259.69H695.81V1259.69H696.93V1259.69H698.05V1259.69H699.17V1259.69H700.29V1259.69H701.42V1259.69H702.54V1259.69H703.66V1259.69H704.78V1259.69H705.90V1259.69H707.02V1259.69H708.15V1259.69H709.27V1259.69H710.39V1259.69H711.51V1259.69H712.63V1259.69H713.76V1259.69H714.88V1259.69H716.00V1259.69H717.12V1259.69H718.24V1259.69H719.37V1259.69H720.49V1259.69H721.61V1259.69H722.73V1259.69H723.85V1259.69H724.98V1259.69H726.10V1259.69H727.22V1259.69H728.34V1259.69H729.46V1259.69H730.58V1259.69H731.71V1259.69H732.83V1259.69H733.95V1259.69H735.07V1259.69H736.19V1259.69H737.32V1259.69H738.44V1259.69H739.56V1259.69H740.68V1259.69H741.80V1259.69H742.93V1259.69H744.05V1259.69H745.17V1259.69H746.29V1259.69H747.41V1259.69H748.53V1259.69H749.66V1259.69H750.78V1259.69H751.90V1259.69H753.02V1259.69H754.14V1259.69H755.27V1259.69H756.39V1259.69H757.51V1259.69H758.63V1259.69H759.75V1259.69H760.88V1259.69H762.00V1249.59H763.12V1249.59H764.24V1259.69H765.36V1259.69H766.49V1259.69H767.61V1259.69H768.73V1259.69H769.85V1259.69H770.97V1259.69H772.09V1259.69H773.22V1259.69H774.34V1259.69H775.46V1259.69H776.58V1259.69H777.70V1259.69H778.83V1259.69H779.95V1259.69H781.07V1259.69H782.19V1259.69H783.31V1259.69H784.44V1259.69H785.56V1259.69H786.68V1259.69H787.80V1259.69H788.92V1259.69H790.05V1259.69H791.17V1259.69H792.29V1259.69H793.41V1259.69H794.53V1259.69H795.65V1259.69H796.78V1259.69H797.90V1259.69H799.02V1259.69H800.14V1259.69H801.26V1259.69H802.39V1259.69H803.51V1259.69H804.63V1259.69H805.75V1259.69H806.87V1259.69H808.00V1259.69H809.12V1259.69H810.24V1259.69H811.36V1259.69H812.48V1249.59H813.61V1249.59H814.73V1249.59H815.85V1249.59H816.97V1249.59H818.09V1249.59H819.21V1249.59H820.34V1249.59H821.46V1249.59H822.58V1249.59H823.70V1249.59H824.82V1249.59H825.95V1249.59H827.07V1249.59H828.19V1249.59H829.31V1249.59H830.43V1249.59H831.56V1259.69H832.68V1259.69H833.80V1259.69H834.92V1259.69H836.04V1259.69H837.17V1259.69H838.29V1259.69H839.41V1259.69H840.53V1259.69H841.65V1259.69H842.77V1259.69H843.90V1259.69H845.02V1259.69H846.14V1259.69H847.26V1259.69H848.38V1259.69H849.51V1259.69H850.63V1259.69H851.75V1259.69H852.87V1259.69H853.99V1259.69H855.12V1259.69H856.24V1259.69H857.36V1259.69H858.48V1259.69H859.60V1259.69H860.72V1259.69H861.85V1259.69H862.97V1259.69H864.09V1259.69H865.21V1259.69H866.33V1259.69H867.46V1259.69H868.58V1259.69H869.70V1259.69H870.82V1259.69H871.94V1259.69H873.07V1259.69H874.19V1259.69H875.31V1259.69H876.43V1259.69H877.55V1259.69H878.68V1259.69H879.80V1259.69H880.92V1259.69H882.04V1320.30ZM1030.13,1320.30V1259.69H1031.25V1259.69H1032.38V1259.69H1033.50V1259.69H1034.62V1259.69H1035.74V1259.69H1036.86V1259.69H1037.99V1259.69H1039.11V1259.69H1040.23V1259.69H1041.35V1259.69H1042.47V1259.69H1043.59V1259.69H1044.72V1259.69H1045.84V1259.69H1046.96V1259.69H1048.08V1259.69H1049.20V1259.69H1050.33V1259.69H1051.45V1259.69H1052.57V1259.69H1053.69V1259.69H1054.81V1259.69H1055.94V1259.69H1057.06V1259.69H1058.18V1259.69H1059.30V1259.69H1060.42V1259.69H1061.55V1259.69H1062.67V1259.69H1063.79V1259.69H1064.91V1259.69H1066.03V1259.69H1067.15V1259.69H1068.28V1259.69H1069.40V1259.69H1070.52V1259.69H1071.64V1259.69H1072.76V1259.69H1073.89V1259.69H1075.01V1259.69H1076.13V1259.69H1077.25V1259.69H1078.37V1259.69H1079.50V1259.69H1080.62V1259.69H1081.74V1249.59H1082.86V1249.59H1083.98V1249.59H1085.10V1259.69H1086.23V1259.69H1087.35V1259.69H1088.47V1259.69H1089.59V1259.69H1090.71V1259.69H1091.84V1259.69H1092.96V1259.69H1094.08V1259.69H1095.20V1259.69H1096.32V1259.69H1097.45V1259.69H1098.57V1259.69H1099.69V1259.69H1100.81V1259.69H1101.93V1259.69H1103.06V1259.69H1104.18V1259.69H1105.30V1259.69H1106.42V1259.69H1107.54V1259.69H1108.66V1259.69H1109.79V1259.69H1110.91V1259.69H1112.03V1259.69H1113.15V1259.69H1114.27V1259.69H1115.40V1259.69H1116.52V1259.69H1117.64V1259.69H1118.76V1259.69H1119.88V1259.69H1121.01V1259.69H1122.13V1259.69H1123.25V1259.69H1124.37V1259.69H1125.49V1259.69H1126.62V1259.69H1127.74V1259.69H1128.86V1259.69H1129.98V1259.69H1131.10V1259.69H1132.22V1259.69H1133.35V1259.69H1134.47V1259.69H1135.59V1259.69H1136.71V1259.69H1137.83V1259.69H1138.96V1259.69H1140.08V1259.69H1141.20V1259.69H1142.32V1259.69H1143.44V1259.69H1144.57V1259.69H1145.69V1259.69H1146.81V1259.69H1147.93V1259.69H1149.05V1259.69H1150.18V1259.69H1151.30V1259.69H1152.42V1259.69H1153.54V1259.69H1154.66V1259.69H1155.78V1259.69H1156.91V1259.69H1158.03V1259.69H1159.15V1259.69H1160.27V1259.69H1161.39V1259.69H1162.52V1249.59H1163.64V1249.59H1164.76V1249.59H1165.88V1249.59H1167.00V1249.59H1168.13V1249.59H1169.25V1249.59H1170.37V1249.59H1171.49V1249.59H1172.61V1249.59H1173.74V1249.59H1174.86V1249.59H1175.98V1249.59H1177.10V1259.69H1178.22V1259.69H1179.34V1259.69H1180.47V1259.69H1181.59V1259.69H1182.71V1259.69H1183.83V1259.69H1184.95V1259.69H1186.08V1259.69H1187.20V1259.69H1188.32V1259.69H1189.44V1259.69H1190.56V1259.69H1191.69V1259.69H1192.81V1259.69H1193.93V1259.69H1195.05V1259.69H1196.17V1259.69H1197.29V1259.69H1198.42V1259.69H1199.54V1259.69H1200.66V1259.69H1201.78V1259.69H1202.90V1259.69H1204.03V1259.69H1205.15V1320.30ZM1353.24,1320.30V1249.59H1354.36V1249.59H1355.48V1249.59H1356.60V1249.59H1357.73V1249.59H1358.85V1249.59H1359.97V1249.59H1361.09V1249.59H1362.21V1249.59H1363.34V1249.59H1364.46V1249.59H1365.58V1249.59H1366.70V1249.59H1367.82V1249.59H1368.95V1249.59H1370.07V1249.59H1371.19V1249.59H1372.31V1249.59H1373.43V1249.59H1374.56V1249.59H1375.68V1249.59H1376.80V1249.59H1377.92V1249.59H1379.04V1249.59H1380.16V1249.59H1381.29V1249.59H1382.41V1249.59H1383.53V1249.59H1384.65V1249.59H1385.77V1249.59H1386.90V1249.59H1388.02V1249.59H1389.14V1249.59H1390.26V1249.59H1391.38V1249.59H1392.51V1249.59H1393.63V1249.59H1394.75V1249.59H1395.87V1249.59H1396.99V1249.59H1398.11V1249.59H1399.24V1249.59H1400.36V1249.59H1401.48V1249.59H1402.60V1249.59H1403.72V1249.59H1404.85V1249.59H1405.97V1249.59H1407.09V1249.59H1408.21V1249.59H1409.33V1249.59H1410.46V1249.59H1411.58V1249.59H1412.70V1249.59H1413.82V1249.59H1414.94V1249.59H1416.07V1249.59H1417.19V1249.59H1418.31V1249.59H1419.43V1249.59H1420.55V1249.59H1421.67V1249.59H1422.80V1249.59H1423.92V1249.59H1425.04V1249.59H1426.16V1249.59H1427.28V1249.59H1428.41V1249.59H1429.53V1249.59H1430.65V1249.59H1431.77V1249.59H1432.89V1249.59H1434.02V1249.59H1435.14V1249.59H1436.26V1249.59H1437.38V1249.59H1438.50V1239.48H1439.63V1239.48H1440.75V1249.59H1441.87V1249.59H1442.99V1249.59H1444.11V1249.59H1445.23V1249.59H1446.36V1249.59H1447.48V1249.59H1448.60V1249.59H1449.72V1249.59H1450.84V1249.59H1451.97V1239.48H1453.09V1239.48H1454.21V1249.59H1455.33V1249.59H1456.45V1249.59H1457.58V1249.59H1458.70V1249.59H1459.82V1249.59H1460.94V1249.59H1462.06V1249.59H1463.19V1249.59H1464.31V1249.59H1465.43V1249.59H1466.55V1249.59H1467.67V1249.59H1468.79V1249.59H1469.92V1249.59H1471.04V1249.59H1472.16V1249.59H1473.28V1249.59H1474.40V1249.59H1475.53V1249.59H1476.65V1249.59H1477.77V1249.59H1478.89V1249.59H1480.01V1249.59H1481.14V1249.59H1482.26V1249.59H1483.38V1249.59H1484.50V1249.59H1485.62V1249.59H1486.75V1249.59H1487.87V1249.59H1488.99V1249.59H1490.11V1249.59H1491.23V1249.59H1492.35V1249.59H1493.48V1249.59H1494.60V1249.59H1495.72V1249.59H1496.84V1249.59H1497.96V1249.59H1499.09V1249.59H1500.21V1249.59H1501.33V1249.59H1502.45V1249.59H1503.57V1249.59H1504.70V1249.59H1505.82V1249.59H1506.94V1249.59H1508.06V1249.59H1509.18V1249.59H1510.30V1249.59H1511.43V1249.59H1512.55V1249.59H1513.67V1249.59H1514.79V1249.59H1515.91V1249.59H1517.04V1249.59H1518.16V1249.59H1519.28V1249.59H1520.40V1249.59H1521.52V1249.59H1522.65V1249.59H1523.77V1249.59H1524.89V1249.59H1526.01V1249.59H1527.13V1249.59H1528.26V1320.30ZM1676.35,1320.30V1249.59H1677.47V1259.69H1678.59V1259.69H1679.71V1259.69H1680.83V1259.69H1681.96V1259.69H1683.08V1259.69H1684.20V1259.69H1685.32V1259.69H1686.44V1259.69H1687.57V1259.69H1688.69V1259.69H1689.81V1259.69H1690.93V1259.69H1692.05V1259.69H1693.17V1259.69H1694.30V1259.69H1695.42V1259.69H1696.54V1259.69H1697.66V1259.69H1698.78V1259.69H1699.91V1259.69H1701.03V1249.59H1702.15V1259.69H1703.27V1249.59H1704.39V1249.59H1705.52V1259.69H1706.64V1259.69H1707.76V1259.69H1708.88V1249.59H1710.00V1249.59H1711.13V1259.69H1712.25V1259.69H1713.37V1259.69H1714.49V1249.59H1715.61V1249.59H1716.73V1259.69H1717.86V1259.69H1718.98V1259.69H1720.10V1259.69H1721.22V1259.69H1722.34V1259.69H1723.47V1259.69H1724.59V1259.69H1725.71V1259.69H1726.83V1259.69H1727.95V1259.69H1729.08V1259.69H1730.20V1259.69H1731.32V1259.69H1732.44V1259.69H1733.56V1259.69H1734.68V1259.69H1735.81V1249.59H1736.93V1249.59H1738.05V1249.59H1739.17V1249.59H1740.29V1249.59H1741.42V1249.59H1742.54V1249.59H1743.66V1249.59H1744.78V1249.59H1745.90V1249.59H1747.03V1249.59H1748.15V1249.59H1749.27V1249.59H1750.39V1249.59H1751.51V1249.59H1752.64V1249.59H1753.76V1249.59H1754.88V1259.69H1756.00V1259.69H1757.12V1259.69H1758.24V1259.69H1759.37V1259.69H1760.49V1259.69H1761.61V1259.69H1762.73V1259.69H1763.85V1259.69H1764.98V1259.69H1766.10V1259.69H1767.22V1259.69H1768.34V1259.69H1769.46V1259.69H1770.59V1259.69H1771.71V1259.69H1772.83V1259.69H1773.95V1259.69H1775.07V1259.69H1776.20V1259.69H1777.32V1259.69H1778.44V1259.69H1779.56V1259.69H1780.68V1259.69H1781.80V1259.69H1782.93V1259.69H1784.05V1259.69H1785.17V1259.69H1786.29V1259.69H1787.41V1259.69H1788.54V1259.69H1789.66V1259.69H1790.78V1259.69H1791.90V1259.69H1793.02V1259.69H1794.15V1259.69H1795.27V1259.69H1796.39V1259.69H1797.51V1259.69H1798.63V1259.69H1799.76V1259.69H1800.88V1259.69H1802.00V1259.69H1803.12V1259.69H1804.24V1259.69H1805.36V1259.69H1806.49V1259.69H1807.61V1259.69H1808.73V1259.69H1809.85V1259.69H1810.97V1259.69H1812.10V1259.69H1813.22V1259.69H1814.34V1259.69H1815.46V1259.69H1816.58V1259.69H1817.71V1259.69H1818.83V1259.69H1819.95V1259.69H1821.07V1259.69H1822.19V1259.69H1823.32V1259.69H1824.44V1259.69H1825.56V1259.69H1826.68V1259.69H1827.80V1259.69H1828.92V1259.69H1830.05V1259.69H1831.17V1259.69H1832.29V1259.69H1833.41V1259.69H1834.53V1259.69H1835.66V1259.69H1836.78V1259.69H1837.90V1259.69H1839.02V1259.69H1840.14V1259.69H1841.27V1259.69H1842.39V1259.69H1843.51V1259.69H1844.63V1259.69H1845.75V1259.69H1846.87V1259.69H1848.00V1259.69H1849.12V1259.69H1850.24V1259.69H1851.36V1320.30ZM1999.45,1320.30V1259.69H2000.58V1259.69H2001.70V1259.69H2002.82V1259.69H2003.94V1259.69H2005.06V1259.69H2006.18V1259.69H2007.31V1259.69H2008.43V1259.69H2009.55V1259.69H2010.67V1259.69H2011.79V1259.69H2012.92V1259.69H2014.04V1259.69H2015.16V1259.69H2016.28V1259.69H2017.40V1259.69H2018.53V1259.69H2019.65V1259.69H2020.77V1259.69H2021.89V1259.69H2023.01V1259.69H2024.14V1259.69H2025.26V1259.69H2026.38V1259.69H2027.50V1259.69H2028.62V1259.69H2029.74V1259.69H2030.87V1259.69H2031.99V1259.69H2033.11V1259.69H2034.23V1259.69H2035.35V1259.69H2036.48V1259.69H2037.60V1259.69H2038.72V1259.69H2039.84V1259.69H2040.96V1259.69H2042.09V1259.69H2043.21V1259.69H2044.33V1259.69H2045.45V1259.69H2046.57V1259.69H2047.69V1259.69H2048.82V1259.69H2049.94V1259.69H2051.06V1259.69H2052.18V1249.59H2053.30V1249.59H2054.43V1259.69H2055.55V1259.69H2056.67V1259.69H2057.79V1249.59H2058.91V1249.59H2060.04V1259.69H2061.16V1249.59H2062.28V1249.59H2063.40V1259.69H2064.52V1259.69H2065.65V1249.59H2066.77V1249.59H2067.89V1259.69H2069.01V1259.69H2070.13V1259.69H2071.25V1259.69H2072.38V1249.59H2073.50V1249.59H2074.62V1259.69H2075.74V1259.69H2076.86V1259.69H2077.99V1259.69H2079.11V1259.69H2080.23V1259.69H2081.35V1259.69H2082.47V1259.69H2083.60V1259.69H2084.72V1259.69H2085.84V1259.69H2086.96V1259.69H2088.08V1259.69H2089.21V1259.69H2090.33V1259.69H2091.45V1259.69H2092.57V1259.69H2093.69V1269.79H2094.81V1259.69H2095.94V1259.69H2097.06V1269.79H2098.18V1259.69H2099.30V1259.69H2100.42V1269.79H2101.55V1259.69H2102.67V1269.79H2103.79V1259.69H2104.91V1259.69H2106.03V1269.79H2107.16V1259.69H2108.28V1259.69H2109.40V1269.79H2110.52V1259.69H2111.64V1269.79H2112.77V1259.69H2113.89V1259.69H2115.01V1269.79H2116.13V1259.69H2117.25V1269.79H2118.37V1259.69H2119.50V1269.79H2120.62V1259.69H2121.74V1269.79H2122.86V1259.69H2123.98V1269.79H2125.11V1259.69H2126.23V1269.79H2127.35V1259.69H2128.47V1269.79H2129.59V1259.69H2130.72V1259.69H2131.84V1269.79H2132.96V1259.69H2134.08V1259.69H2135.20V1269.79H2136.33V1259.69H2137.45V1259.69H2138.57V1269.79H2139.69V1259.69H2140.81V1259.69H2141.93V1269.79H2143.06V1259.69H2144.18V1259.69H2145.30V1269.79H2146.42V1259.69H2147.54V1259.69H2148.67V1269.79H2149.79V1259.69H2150.91V1259.69H2152.03V1269.79H2153.15V1259.69H2154.28V1269.79H2155.40V1259.69H2156.52V1259.69H2157.64V1269.79H2158.76V1259.69H2159.88V1269.79H2161.01V1259.69H2162.13V1269.79H2163.25V1259.69H2164.37V1259.69H2165.49V1269.79H2166.62V1259.69H2167.74V1269.79H2168.86V1269.79H2169.98V1259.69H2171.10V1259.69H2172.23V1259.69H2173.35V1269.79H2174.47V1320.30ZM2322.56,1320.30V1300.10H2323.68V1300.10H2324.80V1300.10H2325.93V1300.10H2327.05V1310.20H2328.17V1300.10H2329.29V1300.10H2330.41V1300.10H2331.54V1279.89H2332.66V1269.79H2333.78V1259.69H2334.90V1269.79H2336.02V1259.69H2337.15V1259.69H2338.27V1259.69H2339.39V1269.79H2340.51V1259.69H2341.63V1259.69H2342.75V1269.79H2343.88V1259.69H2345.00V1259.69H2346.12V1259.69H2347.24V1259.69H2348.36V1259.69H2349.49V1269.79H2350.61V1259.69H2351.73V1259.69H2352.85V1269.79H2353.97V1259.69H2355.10V1259.69H2356.22V1259.69H2357.34V1259.69H2358.46V1259.69H2359.58V1259.69H2360.71V1259.69H2361.83V1269.79H2362.95V1259.69H2364.07V1259.69H2365.19V1259.69H2366.31V1269.79H2367.44V1259.69H2368.56V1259.69H2369.68V1269.79H2370.80V1259.69H2371.92V1259.69H2373.05V1269.79H2374.17V1259.69H2375.29V1259.69H2376.41V1269.79H2377.53V1259.69H2378.66V1269.79H2379.78V1259.69H2380.90V1269.79H2382.02V1259.69H2383.14V1269.79H2384.26V1259.69H2385.39V1269.79H2386.51V1259.69H2387.63V1259.69H2388.75V1269.79H2389.87V1259.69H2391.00V1259.69H2392.12V1259.69H2393.24V1259.69H2394.36V1259.69H2395.48V1249.59H2396.61V1259.69H2397.73V1259.69H2398.85V1259.69H2399.97V1249.59H2401.09V1259.69H2402.22V1259.69H2403.34V1259.69H2404.46V1249.59H2405.58V1259.69H2406.70V1259.69H2407.82V1249.59H2408.95V1259.69H2410.07V1259.69H2411.19V1259.69H2412.31V1269.79H2413.43V1259.69H2414.56V1259.69H2415.68V1259.69H2416.80V1320.30Z" fill="#9fecc3"/>
<path d="M882.04,1320.30V1259.69H883.16V1259.69H884.28V1259.69H885.41V1249.59H886.53V1249.59H887.65V1249.59H888.77V1249.59H889.89V1249.59H891.02V1249.59H892.14V1249.59H893.26V1249.59H894.38V1249.59H895.50V1249.59H896.63V1249.59H897.75V1249.59H898.87V1249.59H899.99V1249.59H901.11V1209.18H902.24V1158.67H903.36V1178.87H904.48V1077.85H905.60V966.73H906.72V1188.97H907.84V986.93H908.97V1007.14H910.09V1158.67H911.21V1178.87H912.33V1209.18H913.45V1209.18H914.58V1158.67H915.70V1178.87H916.82V1178.87H917.94V1158.67H919.06V1168.77H920.19V1148.57H921.31V1199.08H922.43V1037.44H923.55V956.63H924.67V1027.34H925.80V1199.08H926.92V1108.16H928.04V1108.16H929.16V1148.57H930.28V1148.57H931.40V1158.67H932.53V1017.24H933.65V1118.26H934.77V1098.06H935.89V1047.55H937.01V1158.67H938.14V1138.46H939.26V1168.77H940.38V1158.67H941.50V1118.26H942.62V1168.77H943.75V1209.18H944.87V1148.57H945.99V997.04H947.11V986.93H948.23V976.83H949.36V1138.46H950.48V1158.67H951.60V1199.08H952.72V1168.77H953.84V1168.77H954.96V1148.57H956.09V1178.87H957.21V1138.46H958.33V1199.08H959.45V1188.97H960.57V1168.77H961.70V1178.87H962.82V1188.97H963.94V1239.48H965.06V1199.08H966.18V1229.38H967.31V1178.87H968.43V1249.59H969.55V1199.08H970.67V1219.28H971.79V1168.77H972.91V1168.77H974.04V1108.16H975.16V1188.97H976.28V1178.87H977.40V1158.67H978.52V1148.57H979.65V1168.77H980.77V966.73H981.89V1178.87H983.01V885.91H984.13V1067.75H985.26V1158.67H986.38V906.12H987.50V1199.08H988.62V1158.67H989.74V1168.77H990.87V1128.36H991.99V1209.18H993.11V1178.87H994.23V1209.18H995.35V1128.36H996.47V1188.97H997.60V1138.46H998.72V1209.18H999.84V1138.46H1000.96V1148.57H1002.08V966.73H1003.21V1118.26H1004.33V1199.08H1005.45V1148.57H1006.57V1209.18H1007.69V1178.87H1008.82V1178.87H1009.94V1108.16H1011.06V1178.87H1012.18V1178.87H1013.30V1188.97H1014.43V1178.87H1015.55V1168.77H1016.67V1178.87H1017.79V1158.67H1018.91V1188.97H1020.03V1219.28H1021.16V1219.28H1022.28V1239.48H1023.40V1219.28H1024.52V1249.59H1025.64V1249.59H1026.77V1259.69H1027.89V1259.69H1029.01V1259.69H1030.13V1320.30ZM1205.15,1320.30V1259.69H1206.27V1259.69H1207.39V1259.69H1208.51V1259.69H1209.64V1259.69H1210.76V1259.69H1211.88V1259.69H1213.00V1259.69H1214.12V1259.69H1215.25V1259.69H1216.37V1249.59H1217.49V1249.59H1218.61V1249.59H1219.73V1249.59H1220.85V1249.59H1221.98V1249.59H1223.10V1249.59H1224.22V1249.59H1225.34V1249.59H1226.46V1249.59H1227.59V1249.59H1228.71V1249.59H1229.83V1219.28H1230.95V1199.08H1232.07V1188.97H1233.20V1178.87H1234.32V1249.59H1235.44V1249.59H1236.56V1249.59H1237.68V1209.18H1238.81V1209.18H1239.93V1249.59H1241.05V1239.48H1242.17V1209.18H1243.29V1209.18H1244.41V1249.59H1245.54V1239.48H1246.66V1239.48H1247.78V1199.08H1248.90V1249.59H1250.02V1239.48H1251.15V1219.28H1252.27V1209.18H1253.39V1249.59H1254.51V1249.59H1255.63V1249.59H1256.76V1249.59H1257.88V1199.08H1259.00V1199.08H1260.12V1219.28H1261.24V1219.28H1262.37V1239.48H1263.49V1249.59H1264.61V1249.59H1265.73V1249.59H1266.85V1249.59H1267.97V1249.59H1269.10V1249.59H1270.22V1249.59H1271.34V1249.59H1272.46V1239.48H1273.58V1249.59H1274.71V1249.59H1275.83V1249.59H1276.95V1249.59H1278.07V1249.59H1279.19V1249.59H1280.32V1249.59H1281.44V1249.59H1282.56V1249.59H1283.68V1249.59H1284.80V1249.59H1285.92V1249.59H1287.05V1249.59H1288.17V1249.59H1289.29V1249.59H1290.41V1249.59H1291.53V1249.59H1292.66V1249.59H1293.78V1249.59H1294.90V1249.59H1296.02V1249.59H1297.14V1249.59H1298.27V1249.59H1299.39V1249.59H1300.51V1249.59H1301.63V1249.59H1302.75V1249.59H1303.88V1249.59H1305.00V1249.59H1306.12V1249.59H1307.24V1249.59H1308.36V1249.59H1309.48V1249.59H1310.61V1249.59H1311.73V1249.59H1312.85V1249.59H1313.97V1239.48H1315.09V1239.48H1316.22V1239.48H1317.34V1239.48H1318.46V1239.48H1319.58V1239.48H1320.70V1239.48H1321.83V1239.48H1322.95V1249.59H1324.07V1249.59H1325.19V1249.59H1326.31V1239.48H1327.44V1239.48H1328.56V1239.48H1329.68V1239.48H1330.80V1239.48H1331.92V1239.48H1333.04V1239.48H1334.17V1239.48H1335.29V1249.59H1336.41V1249.59H1337.53V1249.59H1338.65V1249.59H1339.78V1249.59H1340.90V1249.59H1342.02V1249.59H1343.14V1249.59H1344.26V1249.59H1345.39V1249.59H1346.51V1249.59H1347.63V1249.59H1348.75V1249.59H1349.87V1249.59H1351.00V1249.59H1352.12V1249.59H1353.24V1320.30ZM1528.26,1320.30V1249.59H1529.38V1249.59H1530.50V1249.59H1531.62V1249.59H1532.74V1249.59H1533.86V1249.59H1534.99V1249.59H1536.11V1249.59H1537.23V1249.59H1538.35V1249.59H1539.47V1249.59H1540.60V1239.48H1541.72V1239.48H1542.84V1239.48H1543.96V1239.48H1545.08V1239.48H1546.21V1239.48H1547.33V1199.08H1548.45V1199.08H1549.57V1168.77H1550.69V1148.57H1551.82V1138.46H1552.94V1087.95H1554.06V1007.14H1555.18V1098.06H1556.30V986.93H1557.42V1098.06H1558.55V1027.34H1559.67V1077.85H1560.79V1098.06H1561.91V1118.26H1563.03V1118.26H1564.16V1057.65H1565.28V1017.24H1566.40V1128.36H1567.52V1128.36H1568.64V1158.67H1569.77V1209.18H1570.89V1168.77H1572.01V1199.08H1573.13V1219.28H1574.25V1098.06H1575.38V997.04H1576.50V1067.75H1577.62V966.73H1578.74V1087.95H1579.86V986.93H1580.98V1007.14H1582.11V1067.75H1583.23V1087.95H1584.35V1128.36H1585.47V1067.75H1586.59V1178.87H1587.72V1178.87H1588.84V1178.87H1589.96V1219.28H1591.08V1108.16H1592.20V1087.95H1593.33V1057.65H1594.45V1199.08H1595.57V1219.28H1596.69V1168.77H1597.81V1209.18H1598.94V1209.18H1600.06V1168.77H1601.18V1219.28H1602.30V1199.08H1603.42V1168.77H1604.54V1188.97H1605.67V1168.77H1606.79V1199.08H1607.91V1178.87H1609.03V1188.97H1610.15V1108.16H1611.28V1158.67H1612.40V1158.67H1613.52V1158.67H1614.64V1209.18H1615.76V1188.97H1616.89V1148.57H1618.01V1188.97H1619.13V1168.77H1620.25V1178.87H1621.37V1209.18H1622.49V1178.87H1623.62V1199.08H1624.74V1158.67H1625.86V1098.06H1626.98V966.73H1628.10V1108.16H1629.23V1168.77H1630.35V1148.57H1631.47V1067.75H1632.59V1138.46H1633.71V1158.67H1634.84V1229.38H1635.96V1219.28H1637.08V1229.38H1638.20V1229.38H1639.32V1199.08H1640.45V1199.08H1641.57V1118.26H1642.69V1047.55H1643.81V1188.97H1644.93V1199.08H1646.05V1168.77H1647.18V1199.08H1648.30V1188.97H1649.42V1178.87H1650.54V1168.77H1651.66V1158.67H1652.79V1168.77H1653.91V1108.16H1655.03V1168.77H1656.15V1199.08H1657.27V1178.87H1658.40V1158.67H1659.52V1188.97H1660.64V1249.59H1661.76V1259.69H1662.88V1229.38H1664.01V1209.18H1665.13V1158.67H1666.25V1178.87H1667.37V1158.67H1668.49V1209.18H1669.61V1158.67H1670.74V1209.18H1671.86V1178.87H1672.98V1239.48H1674.10V1229.38H1675.22V1249.59H1676.35V1320.30ZM1851.36,1320.30V1259.69H1852.48V1259.69H1853.61V1259.69H1854.73V1259.69H1855.85V1249.59H1856.97V1259.69H1858.09V1259.69H1859.22V1259.69H1860.34V1249.59H1861.46V1259.69H1862.58V1259.69H1863.70V1239.48H1864.83V1249.59H1865.95V1249.59H1867.07V1249.59H1868.19V1249.59H1869.31V1239.48H1870.43V1178.87H1871.56V1188.97H1872.68V1178.87H1873.80V1178.87H1874.92V1199.08H1876.04V1158.67H1877.17V1017.24H1878.29V1067.75H1879.41V1148.57H1880.53V1098.06H1881.65V1118.26H1882.78V1168.77H1883.90V1118.26H1885.02V986.93H1886.14V1148.57H1887.26V1158.67H1888.39V1138.46H1889.51V1128.36H1890.63V1158.67H1891.75V1158.67H1892.87V1128.36H1893.99V1188.97H1895.12V1118.26H1896.24V1118.26H1897.36V1128.36H1898.48V1047.55H1899.60V1108.16H1900.73V1168.77H1901.85V1209.18H1902.97V1209.18H1904.09V1168.77H1905.21V1178.87H1906.34V1178.87H1907.46V1188.97H1908.58V1148.57H1909.70V1219.28H1910.82V1188.97H1911.95V1178.87H1913.07V1158.67H1914.19V1209.18H1915.31V1219.28H1916.43V1229.38H1917.55V1118.26H1918.68V1017.24H1919.80V1168.77H1920.92V1128.36H1922.04V1098.06H1923.16V1168.77H1924.29V1098.06H1925.41V1219.28H1926.53V1229.38H1927.65V1178.87H1928.77V1209.18H1929.90V1158.67H1931.02V1199.08H1932.14V1209.18H1933.26V1199.08H1934.38V1239.48H1935.50V1178.87H1936.63V1188.97H1937.75V1188.97H1938.87V1239.48H1939.99V1199.08H1941.11V1178.87H1942.24V1199.08H1943.36V1199.08H1944.48V1229.38H1945.60V1239.48H1946.72V1188.97H1947.85V1168.77H1948.97V1199.08H1950.09V1188.97H1951.21V1219.28H1952.33V1209.18H1953.46V1199.08H1954.58V1188.97H1955.70V1138.46H1956.82V1168.77H1957.94V1118.26H1959.06V1138.46H1960.19V926.32H1961.31V1087.95H1962.43V1057.65H1963.55V1108.16H1964.67V1138.46H1965.80V1249.59H1966.92V1249.59H1968.04V1188.97H1969.16V1249.59H1970.28V1229.38H1971.41V1178.87H1972.53V1209.18H1973.65V1239.48H1974.77V1229.38H1975.89V1188.97H1977.02V1209.18H1978.14V1239.48H1979.26V1168.77H1980.38V1199.08H1981.50V1168.77H1982.62V1199.08H1983.75V1209.18H1984.87V1209.18H1985.99V1259.69H1987.11V1259.69H1988.23V1259.69H1989.36V1259.69H1990.48V1259.69H1991.60V1259.69H1992.72V1259.69H1993.84V1259.69H1994.97V1249.59H1996.09V1259.69H1997.21V1259.69H1998.33V1259.69H1999.45V1320.30ZM2174.47,1320.30V1259.69H2175.59V1269.79H2176.71V1259.69H2177.84V1259.69H2178.96V1259.69H2180.08V1259.69H2181.20V1259.69H2182.32V1259.69H2183.44V1259.69H2184.57V1269.79H2185.69V1249.59H2186.81V1259.69H2187.93V1249.59H2189.05V1259.69H2190.18V1249.59H2191.30V1259.69H2192.42V1249.59H2193.54V1259.69H2194.66V1249.59H2195.79V1259.69H2196.91V1249.59H2198.03V1239.48H2199.15V1148.57H2200.27V1188.97H2201.40V1229.38H2202.52V1219.28H2203.64V1209.18H2204.76V1168.77H2205.88V1229.38H2207.00V1219.28H2208.13V1219.28H2209.25V1178.87H2210.37V1199.08H2211.49V1229.38H2212.61V1178.87H2213.74V916.22H2214.86V835.40H2215.98V855.61H2217.10V1128.36H2218.22V1178.87H2219.35V1188.97H2220.47V1188.97H2221.59V1229.38H2222.71V1229.38H2223.83V1229.38H2224.96V1178.87H2226.08V1199.08H2227.20V1229.38H2228.32V1219.28H2229.44V1229.38H2230.56V1178.87H2231.69V1199.08H2232.81V1229.38H2233.93V1219.28H2235.05V1229.38H2236.17V1168.77H2237.30V1199.08H2238.42V1219.28H2239.54V1219.28H2240.66V1219.28H2241.78V1168.77H2242.91V1199.08H2244.03V1219.28H2245.15V1219.28H2246.27V1168.77H2247.39V1148.57H2248.52V1209.18H2249.64V1209.18H2250.76V1188.97H2251.88V1128.36H2253.00V1098.06H2254.12V1178.87H2255.25V1229.38H2256.37V1219.28H2257.49V1219.28H2258.61V1178.87H2259.73V1229.38H2260.86V1229.38H2261.98V1219.28H2263.10V1209.18H2264.22V1178.87H2265.34V1229.38H2266.47V1229.38H2267.59V1229.38H2268.71V1229.38H2269.83V1229.38H2270.95V1168.77H2272.07V1229.38H2273.20V1229.38H2274.32V1249.59H2275.44V1229.38H2276.56V1199.08H2277.68V1077.85H2278.81V1168.77H2279.93V1219.28H2281.05V1219.28H2282.17V1219.28H2283.29V1249.59H2284.42V1269.79H2285.54V1279.89H2286.66V1269.79H2287.78V1269.79H2288.90V1219.28H2290.03V1249.59H2291.15V1279.89H2292.27V1269.79H2293.39V1249.59H2294.51V1259.69H2295.63V1259.69H2296.76V1209.18H2297.88V1219.28H2299.00V1229.38H2300.12V1269.79H2301.24V1279.89H2302.37V1279.89H2303.49V1300.10H2304.61V1300.10H2305.73V1300.10H2306.85V1310.20H2307.98V1300.10H2309.10V1300.10H2310.22V1310.20H2311.34V1300.10H2312.46V1300.10H2313.59V1300.10H2314.71V1310.20H2315.83V1300.10H2316.95V1300.10H2318.07V1300.10H2319.19V1310.20H2320.32V1300.10H2321.44V1300.10H2322.56V1320.30Z" fill="#23906f"/>
<path d="M157.29,1259.69V1320.30M158.42,1259.69V1320.30M159.54,1259.69V1320.30M161.78,1259.69V1320.30M170.76,1259.69V1320.30M176.37,1259.69V1320.30M179.73,1259.69V1320.30M186.46,1259.69V1320.30M187.59,1259.69V1320.30M188.71,1259.69V1320.30M197.68,1259.69V1320.30M199.93,1259.69V1320.30M206.66,1259.69V1320.30M207.78,1259.69V1320.30M211.14,1259.69V1320.30M213.39,1259.69V1320.30M214.51,1259.69V1320.30M215.63,1259.69V1320.30M216.75,1259.69V1320.30M219.00,1259.69V1320.30M221.24,1259.69V1320.30M222.36,1259.69V1320.30M223.49,1259.69V1320.30M230.22,1259.69V1320.30M236.95,1259.69V1320.30M238.07,1259.69V1320.30M239.19,1259.69V1320.30M240.31,1259.69V1320.30M241.44,1259.69V1320.30M242.56,1259.69V1320.30M248.17,1259.69V1320.30M250.41,1259.69V1320.30M251.53,1259.69V1320.30M252.66,1259.69V1320.30M254.90,1239.48V1320.30M256.02,1239.48V1320.30M262.75,1249.59V1320.30M269.48,1249.59V1320.30M272.85,1249.59V1320.30M276.22,1249.59V1320.30M279.58,1249.59V1320.30M280.70,1249.59V1320.30M282.95,1249.59V1320.30M286.31,1259.69V1320.30M294.17,1259.69V1320.30M299.78,1259.69V1320.30M308.75,1259.69V1320.30M313.24,1259.69V1320.30M315.48,1259.69V1320.30M321.09,1259.69V1320.30M323.33,1259.69V1320.30M325.58,1259.69V1320.30M327.82,1259.69V1320.30M328.94,1259.69V1320.30M332.31,1259.69V1320.30M335.68,1259.69V1320.30M345.77,1259.69V1320.30M346.89,1259.69V1320.30M348.02,1259.69V1320.30M349.14,1259.69V1320.30M358.11,1259.69V1320.30M363.72,1259.69V1320.30M365.97,1259.69V1320.30M367.09,1259.69V1320.30M373.82,1259.69V1320.30M374.94,1259.69V1320.30M376.06,1259.69V1320.30M387.28,1259.69V1320.30M388.41,1259.69V1320.30M389.53,1259.69V1320.30M391.77,1259.69V1320.30M392.89,1259.69V1320.30M395.14,1259.69V1320.30M402.99,1259.69V1320.30M405.23,1259.69V1320.30M406.36,1259.69V1320.30M407.48,1259.69V1320.30M408.60,1259.69V1320.30M410.84,1259.69V1320.30M416.45,1259.69V1320.30M417.57,1259.69V1320.30M418.70,1259.69V1320.30M422.06,1259.69V1320.30M427.67,1259.69V1320.30M432.16,1259.69V1320.30M433.28,1259.69V1320.30M436.65,1259.69V1320.30M443.38,1259.69V1320.30M444.50,1259.69V1320.30M445.62,1259.69V1320.30M447.87,1259.69V1320.30M448.99,1249.59V1320.30M450.11,1249.59V1320.30M454.60,1249.59V1320.30M457.96,1249.59V1320.30M460.21,1249.59V1320.30M464.69,1249.59V1320.30M471.43,1259.69V1320.30M472.55,1259.69V1320.30M474.79,1259.69V1320.30M475.91,1259.69V1320.30M480.40,1259.69V1320.30M481.52,1259.69V1320.30M483.77,1259.69V1320.30M487.13,1259.69V1320.30M488.25,1259.69V1320.30M489.38,1259.69V1320.30M491.62,1259.69V1320.30M497.23,1259.69V1320.30M499.47,1259.69V1320.30M503.96,1259.69V1320.30M507.33,1259.69V1320.30M509.57,1259.69V1320.30M514.06,1259.69V1320.30M515.18,1259.69V1320.30M517.42,1259.69V1320.30M518.55,1259.69V1320.30M520.79,1259.69V1320.30M524.16,1259.69V1320.30M529.76,1259.69V1320.30M532.01,1259.69V1320.30M533.13,1259.69V1320.30M535.37,1259.69V1320.30M537.62,1259.69V1320.30M539.86,1259.69V1320.30M543.23,1259.69V1320.30M545.47,1259.69V1320.30M547.71,1259.69V1320.30M549.96,1259.69V1320.30M556.69,1259.69V1320.30M562.30,1259.69V1320.30M563.42,1259.69V1320.30M565.67,1259.69V1320.30M566.79,1259.69V1320.30M569.03,1259.69V1320.30M570.15,1259.69V1320.30M571.27,1259.69V1320.30M572.40,1259.69V1320.30M573.52,1259.69V1320.30M574.64,1259.69V1320.30M575.76,1259.69V1320.30M578.01,1259.69V1320.30M580.25,1259.69V1320.30M582.49,1259.69V1320.30M583.62,1259.69V1320.30M584.74,1259.69V1320.30M585.86,1259.69V1320.30M586.98,1259.69V1320.30M590.35,1259.69V1320.30M591.47,1259.69V1320.30M597.08,1259.69V1320.30M601.57,1259.69V1320.30M602.69,1259.69V1320.30M603.81,1259.69V1320.30M607.18,1259.69V1320.30M608.30,1259.69V1320.30M609.42,1259.69V1320.30M619.52,1259.69V1320.30M622.88,1259.69V1320.30M624.00,1259.69V1320.30M626.25,1259.69V1320.30M627.37,1259.69V1320.30M628.49,1259.69V1320.30M631.86,1249.59V1320.30M635.22,1249.59V1320.30M637.47,1249.59V1320.30M640.83,1249.59V1320.30M647.56,1259.69V1320.30M653.17,1259.69V1320.30M654.30,1259.69V1320.30M656.54,1259.69V1320.30M662.15,1259.69V1320.30M663.27,1259.69V1320.30M667.76,1259.69V1320.30M672.25,1259.69V1320.30M674.49,1259.69V1320.30M677.86,1259.69V1320.30M681.22,1259.69V1320.30M687.95,1259.69V1320.30M692.44,1259.69V1320.30M693.56,1259.69V1320.30M695.81,1259.69V1320.30M698.05,1259.69V1320.30M699.17,1259.69V1320.30M700.29,1259.69V1320.30M703.66,1259.69V1320.30M708.15,1259.69V1320.30M711.51,1259.69V1320.30M717.12,1259.69V1320.30M718.24,1259.69V1320.30M719.37,1259.69V1320.30M723.85,1259.69V1320.30M728.34,1259.69V1320.30M732.83,1259.69V1320.30M733.95,1259.69V1320.30M736.19,1259.69V1320.30M737.32,1259.69V1320.30M740.68,1259.69V1320.30M741.80,1259.69V1320.30M745.17,1259.69V1320.30M748.53,1259.69V1320.30M749.66,1259.69V1320.30M750.78,1259.69V1320.30M753.02,1259.69V1320.30M754.14,1259.69V1320.30M755.27,1259.69V1320.30M757.51,1259.69V1320.30M759.75,1259.69V1320.30M760.88,1259.69V1320.30M762.00,1259.69V1320.30M763.12,1249.59V1320.30M779.95,1259.69V1320.30M782.19,1259.69V1320.30M783.31,1259.69V1320.30M784.44,1259.69V1320.30M790.05,1259.69V1320.30M791.17,1259.69V1320.30M795.65,1259.69V1320.30M797.90,1259.69V1320.30M799.02,1259.69V1320.30M800.14,1259.69V1320.30M801.26,1259.69V1320.30M802.39,1259.69V1320.30M810.24,1259.69V1320.30M814.73,1249.59V1320.30M819.21,1249.59V1320.30M820.34,1249.59V1320.30M821.46,1249.59V1320.30M823.70,1249.59V1320.30M827.07,1249.59V1320.30M830.43,1249.59V1320.30M838.29,1259.69V1320.30M841.65,1259.69V1320.30M846.14,1259.69V1320.30M848.38,1259.69V1320.30M851.75,1259.69V1320.30M855.12,1259.69V1320.30M857.36,1259.69V1320.30M866.33,1259.69V1320.30M876.43,1259.69V1320.30M877.55,1259.69V1320.30M878.68,1259.69V1320.30M886.53,1249.59V1320.30M891.02,1249.59V1320.30M892.14,1249.59V1320.30M893.26,1249.59V1320.30M894.38,1249.59V1320.30M899.99,1249.59V1320.30M901.11,1249.59V1320.30M904.48,1178.87V1320.30M905.60,1077.85V1320.30M908.97,1007.14V1320.30M912.33,1209.18V1320.30M913.45,1209.18V1320.30M920.19,1168.77V1320.30M921.31,1199.08V1320.30M922.43,1199.08V1320.30M925.80,1199.08V1320.30M930.28,1148.57V1320.30M932.53,1158.67V1320.30M933.65,1118.26V1320.30M939.26,1168.77V1320.30M940.38,1168.77V1320.30M942.62,1168.77V1320.30M947.11,997.04V1320.30M950.48,1158.67V1320.30M953.84,1168.77V1320.30M956.09,1178.87V1320.30M957.21,1178.87V1320.30M962.82,1188.97V1320.30M963.94,1239.48V1320.30M965.06,1239.48V1320.30M966.18,1229.38V1320.30M968.43,1249.59V1320.30M970.67,1219.28V1320.30M971.79,1219.28V1320.30M975.16,1188.97V1320.30M976.28,1188.97V1320.30M978.52,1158.67V1320.30M980.77,1168.77V1320.30M991.99,1209.18V1320.30M995.35,1209.18V1320.30M998.72,1209.18V1320.30M1002.08,1148.57V1320.30M1014.43,1188.97V1320.30M1018.91,1188.97V1320.30M1020.03,1219.28V1320.30M1021.16,1219.28V1320.30M1023.40,1239.48V1320.30M1030.13,1259.69V1320.30M1032.38,1259.69V1320.30M1035.74,1259.69V1320.30M1036.86,1259.69V1320.30M1041.35,1259.69V1320.30M1042.47,1259.69V1320.30M1044.72,1259.69V1320.30M1046.96,1259.69V1320.30M1051.45,1259.69V1320.30M1053.69,1259.69V1320.30M1054.81,1259.69V1320.30M1057.06,1259.69V1320.30M1061.55,1259.69V1320.30M1064.91,1259.69V1320.30M1068.28,1259.69V1320.30M1070.52,1259.69V1320.30M1071.64,1259.69V1320.30M1075.01,1259.69V1320.30M1076.13,1259.69V1320.30M1078.37,1259.69V1320.30M1079.50,1259.69V1320.30M1087.35,1259.69V1320.30M1090.71,1259.69V1320.30M1091.84,1259.69V1320.30M1092.96,1259.69V1320.30M1099.69,1259.69V1320.30M1100.81,1259.69V1320.30M1104.18,1259.69V1320.30M1108.66,1259.69V1320.30M1110.91,1259.69V1320.30M1112.03,1259.69V1320.30M1113.15,1259.69V1320.30M1119.88,1259.69V1320.30M1121.01,1259.69V1320.30M1122.13,1259.69V1320.30M1123.25,1259.69V1320.30M1125.49,1259.69V1320.30M1129.98,1259.69V1320.30M1131.10,1259.69V1320.30M1132.22,1259.69V1320.30M1135.59,1259.69V1320.30M1136.71,1259.69V1320.30M1138.96,1259.69V1320.30M1140.08,1259.69V1320.30M1141.20,1259.69V1320.30M1142.32,1259.69V1320.30M1144.57,1259.69V1320.30M1147.93,1259.69V1320.30M1151.30,1259.69V1320.30M1153.54,1259.69V1320.30M1158.03,1259.69V1320.30M1161.39,1259.69V1320.30M1165.88,1249.59V1320.30M1173.74,1249.59V1320.30M1177.10,1259.69V1320.30M1179.34,1259.69V1320.30M1181.59,1259.69V1320.30M1182.71,1259.69V1320.30M1183.83,1259.69V1320.30M1184.95,1259.69V1320.30M1186.08,1259.69V1320.30M1187.20,1259.69V1320.30M1193.93,1259.69V1320.30M1196.17,1259.69V1320.30M1197.29,1259.69V1320.30M1198.42,1259.69V1320.30M1205.15,1259.69V1320.30M1206.27,1259.69V1320.30M1207.39,1259.69V1320.30M1208.51,1259.69V1320.30M1210.76,1259.69V1320.30M1214.12,1259.69V1320.30M1217.49,1249.59V1320.30M1218.61,1249.59V1320.30M1220.85,1249.59V1320.30M1223.10,1249.59V1320.30M1224.22,1249.59V1320.30M1226.46,1249.59V1320.30M1229.83,1249.59V1320.30M1230.95,1219.28V1320.30M1243.29,1209.18V1320.30M1253.39,1249.59V1320.30M1254.51,1249.59V1320.30M1257.88,1249.59V1320.30M1259.00,1199.08V1320.30M1261.24,1219.28V1320.30M1264.61,1249.59V1320.30M1265.73,1249.59V1320.30M1271.34,1249.59V1320.30M1272.46,1249.59V1320.30M1274.71,1249.59V1320.30M1275.83,1249.59V1320.30M1276.95,1249.59V1320.30M1279.19,1249.59V1320.30M1282.56,1249.59V1320.30M1284.80,1249.59V1320.30M1285.92,1249.59V1320.30M1287.05,1249.59V1320.30M1289.29,1249.59V1320.30M1292.66,1249.59V1320.30M1293.78,1249.59V1320.30M1294.90,1249.59V1320.30M1298.27,1249.59V1320.30M1302.75,1249.59V1320.30M1305.00,1249.59V1320.30M1309.48,1249.59V1320.30M1310.61,1249.59V1320.30M1315.09,1239.48V1320.30M1317.34,1239.48V1320.30M1318.46,1239.48V1320.30M1330.80,1239.48V1320.30M1331.92,1239.48V1320.30M1336.41,1249.59V1320.30M1337.53,1249.59V1320.30M1340.90,1249.59V1320.30M1342.02,1249.59V1320.30M1343.14,1249.59V1320.30M1344.26,1249.59V1320.30M1349.87,1249.59V1320.30M1356.60,1249.59V1320.30M1358.85,1249.59V1320.30M1359.97,1249.59V1320.30M1363.34,1249.59V1320.30M1365.58,1249.59V1320.30M1366.70,1249.59V1320.30M1371.19,1249.59V1320.30M1374.56,1249.59V1320.30M1375.68,1249.59V1320.30M1376.80,1249.59V1320.30M1377.92,1249.59V1320.30M1388.02,1249.59V1320.30M1390.26,1249.59V1320.30M1393.63,1249.59V1320.30M1395.87,1249.59V1320.30M1408.21,1249.59V1320.30M1409.33,1249.59V1320.30M1410.46,1249.59V1320.30M1412.70,1249.59V1320.30M1414.94,1249.59V1320.30M1429.53,1249.59V1320.30M1430.65,1249.59V1320.30M1431.77,1249.59V1320.30M1432.89,1249.59V1320.30M1434.02,1249.59V1320.30M1442.99,1249.59V1320.30M1449.72,1249.59V1320.30M1456.45,1249.59V1320.30M1457.58,1249.59V1320.30M1459.82,1249.59V1320.30M1460.94,1249.59V1320.30M1462.06,1249.59V1320.30M1466.55,1249.59V1320.30M1468.79,1249.59V1320.30M1471.04,1249.59V1320.30M1474.40,1249.59V1320.30M1482.26,1249.59V1320.30M1486.75,1249.59V1320.30M1488.99,1249.59V1320.30M1490.11,1249.59V1320.30M1491.23,1249.59V1320.30M1492.35,1249.59V1320.30M1497.96,1249.59V1320.30M1502.45,1249.59V1320.30M1505.82,1249.59V1320.30M1506.94,1249.59V1320.30M1509.18,1249.59V1320.30M1511.43,1249.59V1320.30M1520.40,1249.59V1320.30M1522.65,1249.59V1320.30M1529.38,1249.59V1320.30M1532.74,1249.59V1320.30M1533.86,1249.59V1320.30M1536.11,1249.59V1320.30M1540.60,1249.59V1320.30M1545.08,1239.48V1320.30M1546.21,1239.48V1320.30M1549.57,1199.08V1320.30M1554.06,1087.95V1320.30M1558.55,1098.06V1320.30M1561.91,1118.26V1320.30M1567.52,1128.36V1320.30M1568.64,1158.67V1320.30M1570.89,1209.18V1320.30M1573.13,1219.28V1320.30M1578.74,1087.95V1320.30M1580.98,1007.14V1320.30M1584.35,1128.36V1320.30M1586.59,1178.87V1320.30M1587.72,1178.87V1320.30M1588.84,1178.87V1320.30M1589.96,1219.28V1320.30M1591.08,1219.28V1320.30M1592.20,1108.16V1320.30M1593.33,1087.95V1320.30M1594.45,1199.08V1320.30M1596.69,1219.28V1320.30M1598.94,1209.18V1320.30M1602.30,1219.28V1320.30M1605.67,1188.97V1320.30M1606.79,1199.08V1320.30M1609.03,1188.97V1320.30M1613.52,1158.67V1320.30M1615.76,1209.18V1320.30M1619.13,1188.97V1320.30M1621.37,1209.18V1320.30M1622.49,1209.18V1320.30M1628.10,1108.16V1320.30M1633.71,1158.67V1320.30M1637.08,1229.38V1320.30M1642.69,1118.26V1320.30M1657.27,1199.08V1320.30M1659.52,1188.97V1320.30M1660.64,1249.59V1320.30M1661.76,1259.69V1320.30M1662.88,1259.69V1320.30M1664.01,1229.38V1320.30M1665.13,1209.18V1320.30M1668.49,1209.18V1320.30M1671.86,1209.18V1320.30M1672.98,1239.48V1320.30M1674.10,1239.48V1320.30M1677.47,1259.69V1320.30M1683.08,1259.69V1320.30M1684.20,1259.69V1320.30M1686.44,1259.69V1320.30M1687.57,1259.69V1320.30M1690.93,1259.69V1320.30M1693.17,1259.69V1320.30M1694.30,1259.69V1320.30M1695.42,1259.69V1320.30M1699.91,1259.69V1320.30M1705.52,1259.69V1320.30M1706.64,1259.69V1320.30M1710.00,1249.59V1320.30M1711.13,1259.69V1320.30M1712.25,1259.69V1320.30M1713.37,1259.69V1320.30M1715.61,1249.59V1320.30M1720.10,1259.69V1320.30M1723.47,1259.69V1320.30M1725.71,1259.69V1320.30M1730.20,1259.69V1320.30M1732.44,1259.69V1320.30M1735.81,1259.69V1320.30M1736.93,1249.59V1320.30M1739.17,1249.59V1320.30M1744.78,1249.59V1320.30M1751.51,1249.59V1320.30M1754.88,1259.69V1320.30M1757.12,1259.69V1320.30M1758.24,1259.69V1320.30M1759.37,1259.69V1320.30M1760.49,1259.69V1320.30M1766.10,1259.69V1320.30M1769.46,1259.69V1320.30M1775.07,1259.69V1320.30M1776.20,1259.69V1320.30M1778.44,1259.69V1320.30M1779.56,1259.69V1320.30M1781.80,1259.69V1320.30M1782.93,1259.69V1320.30M1789.66,1259.69V1320.30M1790.78,1259.69V1320.30M1791.90,1259.69V1320.30M1793.02,1259.69V1320.30M1803.12,1259.69V1320.30M1813.22,1259.69V1320.30M1814.34,1259.69V1320.30M1815.46,1259.69V1320.30M1816.58,1259.69V1320.30M1819.95,1259.69V1320.30M1824.44,1259.69V1320.30M1826.68,1259.69V1320.30M1828.92,1259.69V1320.30M1830.05,1259.69V1320.30M1832.29,1259.69V1320.30M1834.53,1259.69V1320.30M1835.66,1259.69V1320.30M1841.27,1259.69V1320.30M1842.39,1259.69V1320.30M1845.75,1259.69V1320.30M1850.24,1259.69V1320.30M1855.85,1259.69V1320.30M1856.97,1259.69V1320.30M1861.46,1259.69V1320.30M1864.83,1249.59V1320.30M1865.95,1249.59V1320.30M1868.19,1249.59V1320.30M1877.17,1158.67V1320.30M1879.41,1148.57V1320.30M1881.65,1118.26V1320.30M1882.78,1168.77V1320.30M1883.90,1168.77V1320.30M1886.14,1148.57V1320.30M1889.51,1138.46V1320.30M1891.75,1158.67V1320.30M1892.87,1158.67V1320.30M1897.36,1128.36V1320.30M1901.85,1209.18V1320.30M1902.97,1209.18V1320.30M1913.07,1178.87V1320.30M1914.19,1209.18V1320.30M1915.31,1219.28V1320.30M1917.55,1229.38V1320.30M1920.92,1168.77V1320.30M1922.04,1128.36V1320.30M1925.41,1219.28V1320.30M1927.65,1229.38V1320.30M1934.38,1239.48V1320.30M1937.75,1188.97V1320.30M1938.87,1239.48V1320.30M1939.99,1239.48V1320.30M1943.36,1199.08V1320.30M1948.97,1199.08V1320.30M1951.21,1219.28V1320.30M1952.33,1219.28V1320.30M1954.58,1199.08V1320.30M1959.06,1138.46V1320.30M1961.31,1087.95V1320.30M1962.43,1087.95V1320.30M1964.67,1138.46V1320.30M1965.80,1249.59V1320.30M1973.65,1239.48V1320.30M1977.02,1209.18V1320.30M1978.14,1239.48V1320.30M1980.38,1199.08V1320.30M1989.36,1259.69V1320.30M1993.84,1259.69V1320.30M1997.21,1259.69V1320.30M1999.45,1259.69V1320.30M2001.70,1259.69V1320.30M2007.31,1259.69V1320.30M2008.43,1259.69V1320.30M2010.67,1259.69V1320.30M2017.40,1259.69V1320.30M2020.77,1259.69V1320.30M2024.14,1259.69V1320.30M2026.38,1259.69V1320.30M2027.50,1259.69V1320.30M2028.62,1259.69V1320.30M2030.87,1259.69V1320.30M2035.35,1259.69V1320.30M2042.09,1259.69V1320.30M2047.69,1259.69V1320.30M2048.82,1259.69V1320.30M2049.94,1259.69V1320.30M2051.06,1259.69V1320.30M2058.91,1249.59V1320.30M2061.16,1259.69V1320.30M2063.40,1259.69V1320.30M2065.65,1259.69V1320.30M2070.13,1259.69V1320.30M2073.50,1249.59V1320.30M2079.11,1259.69V1320.30M2083.60,1259.69V1320.30M2084.72,1259.69V1320.30M2085.84,1259.69V1320.30M2088.08,1259.69V1320.30M2089.21,1259.69V1320.30M2090.33,1259.69V1320.30M2091.45,1259.69V1320.30M2092.57,1259.69V1320.30M2097.06,1269.79V1320.30M2098.18,1269.79V1320.30M2099.30,1259.69V1320.30M2101.55,1269.79V1320.30M2102.67,1269.79V1320.30M2103.79,1269.79V1320.30M2111.64,1269.79V1320.30M2113.89,1259.69V1320.30M2119.50,1269.79V1320.30M2122.86,1269.79V1320.30M2123.98,1269.79V1320.30M2126.23,1269.79V1320.30M2128.47,1269.79V1320.30M2132.96,1269.79V1320.30M2136.33,1269.79V1320.30M2137.45,1259.69V1320.30M2141.93,1269.79V1320.30M2145.30,1269.79V1320.30M2146.42,1269.79V1320.30M2150.91,1259.69V1320.30M2153.15,1269.79V1320.30M2157.64,1269.79V1320.30M2158.76,1269.79V1320.30M2161.01,1269.79V1320.30M2167.74,1269.79V1320.30M2168.86,1269.79V1320.30M2169.98,1269.79V1320.30M2174.47,1269.79V1320.30M2183.44,1259.69V1320.30M2184.57,1269.79V1320.30M2193.54,1259.69V1320.30M2194.66,1259.69V1320.30M2196.91,1259.69V1320.30M2198.03,1249.59V1320.30M2208.13,1219.28V1320.30M2210.37,1199.08V1320.30M2213.74,1178.87V1320.30M2214.86,916.22V1320.30M2215.98,855.61V1320.30M2217.10,1128.36V1320.30M2219.35,1188.97V1320.30M2220.47,1188.97V1320.30M2221.59,1229.38V1320.30M2226.08,1199.08V1320.30M2227.20,1229.38V1320.30M2230.56,1229.38V1320.30M2231.69,1199.08V1320.30M2236.17,1229.38V1320.30M2237.30,1199.08V1320.30M2238.42,1219.28V1320.30M2239.54,1219.28V1320.30M2240.66,1219.28V1320.30M2241.78,1219.28V1320.30M2242.91,1199.08V1320.30M2248.52,1209.18V1320.30M2249.64,1209.18V1320.30M2253.00,1128.36V1320.30M2256.37,1229.38V1320.30M2258.61,1219.28V1320.30M2260.86,1229.38V1320.30M2268.71,1229.38V1320.30M2269.83,1229.38V1320.30M2273.20,1229.38V1320.30M2275.44,1249.59V1320.30M2276.56,1229.38V1320.30M2281.05,1219.28V1320.30M2282.17,1219.28V1320.30M2286.66,1279.89V1320.30M2288.90,1269.79V1320.30M2291.15,1279.89V1320.30M2294.51,1259.69V1320.30M2303.49,1300.10V1320.30M2304.61,1300.10V1320.30M2305.73,1300.10V1320.30M2306.85,1310.20V1320.30M2307.98,1310.20V1320.30M2310.22,1310.20V1320.30M2312.46,1300.10V1320.30M2314.71,1310.20V1320.30M2316.95,1300.10V1320.30M2321.44,1300.10V1320.30M2322.56,1300.10V1320.30M2327.05,1310.20V1320.30M2332.66,1279.89V1320.30M2333.78,1269.79V1320.30M2338.27,1259.69V1320.30M2340.51,1269.79V1320.30M2343.88,1269.79V1320.30M2345.00,1259.69V1320.30M2350.61,1269.79V1320.30M2355.10,1259.69V1320.30M2356.22,1259.69V1320.30M2360.71,1259.69V1320.30M2362.95,1269.79V1320.30M2366.31,1269.79V1320.30M2370.80,1269.79V1320.30M2373.05,1269.79V1320.30M2376.41,1269.79V1320.30M2380.90,1269.79V1320.30M2385.39,1269.79V1320.30M2391.00,1259.69V1320.30M2395.48,1259.69V1320.30M2396.61,1259.69V1320.30M2399.97,1259.69V1320.30M2406.70,1259.69V1320.30M2410.07,1259.69V1320.30M2412.31,1269.79V1320.30M2414.56,1259.69V1320.30M2415.68,1259.69V1320.30" stroke="#fff" stroke-width="0.35" opacity="0.25"/>
<path d="M157.39,1259.69V1269.79M159.73,1259.69V1269.79M163.16,1259.69V1269.79M166.65,1259.69V1269.79M167.72,1259.69V1269.79M170.89,1259.69V1269.79M172.19,1259.69V1269.79M174.20,1259.69V1269.79M175.32,1259.69V1269.79M180.07,1259.69V1269.79M185.53,1259.69V1269.79M186.78,1259.69V1269.79M188.88,1259.69V1269.79M192.45,1259.69V1269.79M193.53,1259.69V1269.79M198.99,1259.69V1269.79M204.61,1259.69V1269.79M205.68,1259.69V1269.79M208.17,1259.69V1269.79M211.33,1259.69V1269.79M213.51,1259.69V1269.79M214.85,1259.69V1269.79M220.31,1259.69V1269.79M223.49,1259.69V1269.79M224.98,1259.69V1269.79M225.89,1259.69V1269.79M229.20,1259.69V1269.79M231.40,1259.69V1269.79M232.84,1259.69V1269.79M233.78,1259.69V1269.79M240.65,1259.69V1269.79M241.68,1259.69V1269.79M242.67,1259.69V1269.79M245.04,1259.69V1269.79M245.93,1259.69V1269.79M247.08,1259.69V1269.79M253.04,1259.69V1269.79M260.84,1249.59V1259.69M263.10,1249.59V1259.69M266.48,1249.59V1259.69M284.10,1259.69V1269.79M286.46,1259.69V1269.79M288.92,1259.69V1269.79M293.05,1259.69V1269.79M298.72,1259.69V1269.79M301.10,1259.69V1269.79M304.54,1259.69V1269.79M305.57,1259.69V1269.79M309.05,1259.69V1269.79M310.03,1259.69V1269.79M313.24,1259.69V1269.79M314.67,1259.69V1269.79M315.80,1259.69V1269.79M324.68,1259.69V1269.79M329.14,1259.69V1269.79M332.50,1259.69V1269.79M333.66,1259.69V1269.79M339.32,1259.69V1269.79M340.41,1259.69V1269.79M342.67,1259.69V1269.79M345.97,1259.69V1269.79M348.16,1259.69V1269.79M349.20,1259.69V1269.79M354.84,1259.69V1269.79M359.30,1259.69V1269.79M360.48,1259.69V1269.79M379.67,1259.69V1269.79M385.07,1259.69V1269.79M393.07,1259.69V1269.79M395.33,1259.69V1269.79M396.40,1259.69V1269.79M397.74,1259.69V1269.79M398.82,1259.69V1269.79M399.79,1259.69V1269.79M400.98,1259.69V1269.79M404.37,1259.69V1269.79M405.61,1259.69V1269.79M409.73,1259.69V1269.79M413.30,1259.69V1269.79M420.08,1259.69V1269.79M423.52,1259.69V1269.79M425.81,1259.69V1269.79M426.77,1259.69V1269.79M427.75,1259.69V1269.79M432.38,1259.69V1269.79M439.09,1259.69V1269.79M440.33,1259.69V1269.79M443.57,1259.69V1269.79M445.94,1259.69V1269.79M447.13,1259.69V1269.79M454.68,1249.59V1259.69M458.16,1249.59V1259.69M460.30,1249.59V1259.69M462.58,1249.59V1259.69M469.51,1259.69V1269.79M470.31,1259.69V1269.79M473.86,1259.69V1269.79M474.90,1259.69V1269.79M478.54,1259.69V1269.79M480.55,1259.69V1269.79M482.95,1259.69V1269.79M488.53,1259.69V1269.79M491.74,1259.69V1269.79M496.11,1259.69V1269.79M505.36,1259.69V1269.79M509.94,1259.69V1269.79M514.30,1259.69V1269.79M518.81,1259.69V1269.79M519.87,1259.69V1269.79M520.91,1259.69V1269.79M522.02,1259.69V1269.79M523.31,1259.69V1269.79M535.46,1259.69V1269.79M539.92,1259.69V1269.79M548.10,1259.69V1269.79M549.99,1259.69V1269.79M551.08,1259.69V1269.79M554.56,1259.69V1269.79M557.05,1259.69V1269.79M566.91,1259.69V1269.79M572.70,1259.69V1269.79M573.69,1259.69V1269.79M574.65,1259.69V1269.79M578.02,1259.69V1269.79M580.28,1259.69V1269.79M581.73,1259.69V1269.79M597.33,1259.69V1269.79M599.41,1259.69V1269.79M603.07,1259.69V1269.79M607.19,1259.69V1269.79M608.59,1259.69V1269.79M609.62,1259.69V1269.79M610.55,1259.69V1269.79M621.01,1259.69V1269.79M625.48,1259.69V1269.79M626.29,1259.69V1269.79M628.63,1259.69V1269.79M629.80,1259.69V1269.79M634.32,1249.59V1259.69M637.63,1249.59V1259.69M641.15,1249.59V1259.69M647.87,1259.69V1269.79M648.91,1259.69V1269.79M650.19,1259.69V1269.79M655.73,1259.69V1269.79M666.76,1259.69V1269.79M668.92,1259.69V1269.79M671.50,1259.69V1269.79M672.37,1259.69V1269.79M673.52,1259.69V1269.79M674.73,1259.69V1269.79M675.66,1259.69V1269.79M677.96,1259.69V1269.79M680.38,1259.69V1269.79M686.85,1259.69V1269.79M687.96,1259.69V1269.79M690.38,1259.69V1269.79M692.71,1259.69V1269.79M694.89,1259.69V1269.79M696.02,1259.69V1269.79M697.31,1259.69V1269.79M700.33,1259.69V1269.79M701.56,1259.69V1269.79M702.89,1259.69V1269.79M703.83,1259.69V1269.79M707.30,1259.69V1269.79M710.70,1259.69V1269.79M711.79,1259.69V1269.79M714.15,1259.69V1269.79M715.01,1259.69V1269.79M717.43,1259.69V1269.79M718.31,1259.69V1269.79M720.84,1259.69V1269.79M721.76,1259.69V1269.79M722.99,1259.69V1269.79M725.08,1259.69V1269.79M736.28,1259.69V1269.79M737.66,1259.69V1269.79M738.63,1259.69V1269.79M740.73,1259.69V1269.79M749.81,1259.69V1269.79M751.06,1259.69V1269.79M752.09,1259.69V1269.79M753.38,1259.69V1269.79M754.37,1259.69V1269.79M755.51,1259.69V1269.79M756.70,1259.69V1269.79M757.67,1259.69V1269.79M764.31,1259.69V1269.79M765.71,1259.69V1269.79M766.81,1259.69V1269.79M773.36,1259.69V1269.79M775.72,1259.69V1269.79M778.10,1259.69V1269.79M789.18,1259.69V1269.79M791.49,1259.69V1269.79M793.45,1259.69V1269.79M796.87,1259.69V1269.79M798.01,1259.69V1269.79M799.19,1259.69V1269.79M800.15,1259.69V1269.79M805.01,1259.69V1269.79M814.74,1249.59V1259.69M818.45,1249.59V1259.69M819.49,1249.59V1259.69M822.78,1249.59V1259.69M823.98,1249.59V1259.69M827.12,1249.59V1259.69M838.47,1259.69V1269.79M840.59,1259.69V1269.79M841.70,1259.69V1269.79M842.94,1259.69V1269.79M850.89,1259.69V1269.79M851.88,1259.69V1269.79M855.24,1259.69V1269.79M857.54,1259.69V1269.79M858.54,1259.69V1269.79M864.43,1259.69V1269.79M866.58,1259.69V1269.79M867.79,1259.69V1269.79M873.17,1259.69V1269.79M875.53,1259.69V1269.79M876.70,1259.69V1269.79M881.02,1259.69V1269.79M884.55,1259.69V1269.79M886.83,1249.59V1259.69M887.99,1249.59V1259.69M889.16,1249.59V1259.69M891.34,1249.59V1259.69M897.95,1249.59V1259.69M1025.95,1249.59V1259.69M1030.50,1259.69V1269.79M1032.50,1259.69V1269.79M1033.65,1259.69V1269.79M1038.21,1259.69V1269.79M1042.68,1259.69V1269.79M1043.85,1259.69V1269.79M1045.09,1259.69V1269.79M1047.17,1259.69V1269.79M1048.26,1259.69V1269.79M1055.20,1259.69V1269.79M1056.24,1259.69V1269.79M1059.60,1259.69V1269.79M1061.66,1259.69V1269.79M1068.67,1259.69V1269.79M1070.75,1259.69V1269.79M1075.27,1259.69V1269.79M1076.41,1259.69V1269.79M1077.38,1259.69V1269.79M1084.22,1249.59V1259.69M1087.58,1259.69V1269.79M1088.67,1259.69V1269.79M1091.95,1259.69V1269.79M1093.06,1259.69V1269.79M1095.54,1259.69V1269.79M1098.79,1259.69V1269.79M1099.97,1259.69V1269.79M1100.96,1259.69V1269.79M1103.22,1259.69V1269.79M1104.46,1259.69V1269.79M1114.27,1259.69V1269.79M1115.62,1259.69V1269.79M1120.25,1259.69V1269.79M1121.39,1259.69V1269.79M1123.58,1259.69V1269.79M1127.01,1259.69V1269.79M1130.20,1259.69V1269.79M1131.16,1259.69V1269.79M1135.92,1259.69V1269.79M1137.98,1259.69V1269.79M1140.25,1259.69V1269.79M1141.51,1259.69V1269.79M1142.68,1259.69V1269.79M1145.78,1259.69V1269.79M1147.97,1259.69V1269.79M1155.95,1259.69V1269.79M1157.14,1259.69V1269.79M1161.60,1259.69V1269.79M1166.09,1249.59V1259.69M1167.01,1249.59V1259.69M1169.36,1249.59V1259.69M1171.56,1249.59V1259.69M1172.86,1249.59V1259.69M1173.81,1249.59V1259.69M1179.63,1259.69V1269.79M1183.87,1259.69V1269.79M1185.03,1259.69V1269.79M1191.91,1259.69V1269.79M1199.57,1259.69V1269.79M1201.79,1259.69V1269.79M1203.30,1259.69V1269.79M1207.60,1259.69V1269.79M1209.67,1259.69V1269.79M1210.93,1259.69V1269.79M1214.46,1259.69V1269.79M1215.46,1259.69V1269.79M1222.08,1249.59V1259.69M1225.37,1249.59V1259.69M1234.66,1249.59V1259.69M1235.67,1249.59V1259.69M1248.95,1249.59V1259.69M1254.73,1249.59V1259.69M1255.91,1249.59V1259.69M1256.78,1249.59V1259.69M1262.57,1239.48V1249.59M1265.85,1249.59V1259.69M1273.93,1249.59V1259.69M1274.77,1249.59V1259.69M1280.47,1249.59V1259.69M1283.80,1249.59V1259.69M1284.93,1249.59V1259.69M1286.06,1249.59V1259.69M1287.43,1249.59V1259.69M1288.30,1249.59V1259.69M1295.12,1249.59V1259.69M1297.32,1249.59V1259.69M1298.46,1249.59V1259.69M1301.79,1249.59V1259.69M1302.99,1249.59V1259.69M1306.13,1249.59V1259.69M1307.40,1249.59V1259.69M1308.40,1249.59V1259.69M1309.55,1249.59V1259.69M1315.16,1239.48V1249.59M1332.25,1239.48V1249.59M1337.62,1249.59V1259.69M1338.89,1249.59V1259.69M1346.86,1249.59V1259.69M1347.82,1249.59V1259.69M1349.02,1249.59V1259.69M1353.27,1249.59V1259.69M1356.74,1249.59V1259.69M1361.17,1249.59V1259.69M1362.45,1249.59V1259.69M1363.50,1249.59V1259.69M1364.71,1249.59V1259.69M1369.09,1249.59V1259.69M1378.21,1249.59V1259.69M1381.41,1249.59V1259.69M1384.71,1249.59V1259.69M1388.21,1249.59V1259.69M1398.14,1249.59V1259.69M1403.90,1249.59V1259.69M1405.09,1249.59V1259.69M1407.40,1249.59V1259.69M1408.24,1249.59V1259.69M1409.64,1249.59V1259.69M1413.92,1249.59V1259.69M1415.23,1249.59V1259.69M1419.70,1249.59V1259.69M1421.85,1249.59V1259.69M1426.18,1249.59V1259.69M1427.34,1249.59V1259.69M1429.64,1249.59V1259.69M1435.26,1249.59V1259.69M1441.92,1249.59V1259.69M1443.23,1249.59V1259.69M1455.52,1249.59V1259.69M1460.14,1249.59V1259.69M1463.25,1249.59V1259.69M1465.56,1249.59V1259.69M1467.78,1249.59V1259.69M1469.07,1249.59V1259.69M1472.25,1249.59V1259.69M1474.80,1249.59V1259.69M1475.67,1249.59V1259.69M1476.88,1249.59V1259.69M1477.81,1249.59V1259.69M1485.83,1249.59V1259.69M1490.21,1249.59V1259.69M1494.77,1249.59V1259.69M1499.38,1249.59V1259.69M1502.68,1249.59V1259.69M1507.26,1249.59V1259.69M1513.98,1249.59V1259.69M1516.14,1249.59V1259.69M1519.54,1249.59V1259.69M1520.72,1249.59V1259.69M1523.00,1249.59V1259.69M1526.19,1249.59V1259.69M1528.26,1249.59V1259.69M1530.80,1249.59V1259.69M1537.39,1249.59V1259.69M1635.09,1229.38V1239.48M1660.80,1249.59V1259.69M1661.95,1259.69V1269.79M1675.45,1249.59V1259.69M1678.70,1259.69V1269.79M1681.06,1259.69V1269.79M1684.33,1259.69V1269.79M1687.61,1259.69V1269.79M1694.46,1259.69V1269.79M1697.85,1259.69V1269.79M1699.16,1259.69V1269.79M1705.67,1259.69V1269.79M1712.50,1259.69V1269.79M1713.51,1259.69V1269.79M1715.99,1249.59V1259.69M1722.35,1259.69V1269.79M1727.96,1259.69V1269.79M1732.78,1259.69V1269.79M1739.46,1249.59V1259.69M1740.34,1249.59V1259.69M1741.42,1249.59V1259.69M1744.97,1249.59V1259.69M1746.01,1249.59V1259.69M1747.12,1249.59V1259.69M1748.28,1249.59V1259.69M1760.60,1259.69V1269.79M1765.30,1259.69V1269.79M1772.01,1259.69V1269.79M1774.31,1259.69V1269.79M1775.30,1259.69V1269.79M1784.37,1259.69V1269.79M1788.78,1259.69V1269.79M1792.14,1259.69V1269.79M1795.35,1259.69V1269.79M1798.95,1259.69V1269.79M1800.90,1259.69V1269.79M1804.37,1259.69V1269.79M1809.09,1259.69V1269.79M1813.48,1259.69V1269.79M1814.57,1259.69V1269.79M1816.80,1259.69V1269.79M1821.15,1259.69V1269.79M1822.53,1259.69V1269.79M1825.65,1259.69V1269.79M1827.87,1259.69V1269.79M1829.28,1259.69V1269.79M1830.12,1259.69V1269.79M1831.41,1259.69V1269.79M1833.55,1259.69V1269.79M1835.67,1259.69V1269.79M1839.16,1259.69V1269.79M1842.60,1259.69V1269.79M1848.07,1259.69V1269.79M1849.31,1259.69V1269.79M1852.83,1259.69V1269.79M1857.09,1259.69V1269.79M1858.39,1259.69V1269.79M1861.69,1259.69V1269.79M1864.93,1249.59V1259.69M1939.16,1239.48V1249.59M1944.58,1229.38V1239.48M1967.29,1249.59V1259.69M1987.19,1259.69V1269.79M1994.07,1259.69V1269.79M1996.44,1259.69V1269.79M1998.66,1259.69V1269.79M2004.18,1259.69V1269.79M2006.32,1259.69V1269.79M2008.68,1259.69V1269.79M2013.20,1259.69V1269.79M2014.22,1259.69V1269.79M2015.47,1259.69V1269.79M2026.59,1259.69V1269.79M2028.66,1259.69V1269.79M2031.21,1259.69V1269.79M2033.37,1259.69V1269.79M2036.59,1259.69V1269.79M2037.72,1259.69V1269.79M2040.19,1259.69V1269.79M2043.48,1259.69V1269.79M2045.56,1259.69V1269.79M2049.15,1259.69V1269.79M2055.62,1259.69V1269.79M2059.29,1249.59V1259.69M2060.34,1259.69V1269.79M2064.54,1259.69V1269.79M2069.10,1259.69V1269.79M2071.45,1259.69V1269.79M2080.46,1259.69V1269.79M2089.58,1259.69V1269.79" stroke="#fff" stroke-width="0.8" opacity="0.5"/>
<line x1="154.7" y1="815.2" x2="154.7" y2="1321.3" stroke="#6a6a6a" stroke-width="1.8"/>
<rect x="155.1" y="1320.7" width="2262.3" height="1.9" fill="#777"/>
<line x1="155.05" y1="1322.3" x2="155.05" y2="1332.3" stroke="#aaaaaa" stroke-width="1"/>
<line x1="478.16" y1="1322.3" x2="478.16" y2="1332.3" stroke="#aaaaaa" stroke-width="1"/>
<line x1="801.26" y1="1322.3" x2="801.26" y2="1332.3" stroke="#aaaaaa" stroke-width="1"/>
<line x1="1124.37" y1="1322.3" x2="1124.37" y2="1332.3" stroke="#aaaaaa" stroke-width="1"/>
<line x1="1447.48" y1="1322.3" x2="1447.48" y2="1332.3" stroke="#aaaaaa" stroke-width="1"/>
<line x1="1770.59" y1="1322.3" x2="1770.59" y2="1332.3" stroke="#aaaaaa" stroke-width="1"/>
<line x1="2093.69" y1="1322.3" x2="2093.69" y2="1332.3" stroke="#aaaaaa" stroke-width="1"/>
<line x1="2416.80" y1="1322.3" x2="2416.80" y2="1332.3" stroke="#aaaaaa" stroke-width="1"/>
<text x="114.94" y="1356.60" font-size="21.0" fill="#000" textLength="81.96" lengthAdjust="spacingAndGlyphs" xml:space="preserve">sam. 24</text>
<text x="440.88" y="1356.60" font-size="21.0" fill="#000" textLength="75.56" lengthAdjust="spacingAndGlyphs" xml:space="preserve">dim. 25</text>
<text x="766.91" y="1356.60" font-size="21.0" fill="#000" textLength="69.18" lengthAdjust="spacingAndGlyphs" xml:space="preserve">lun. 26</text>
<text x="1085.13" y="1356.60" font-size="21.0" fill="#000" textLength="78.11" lengthAdjust="spacingAndGlyphs" xml:space="preserve">mar. 27</text>
<text x="1408.46" y="1356.60" font-size="21.0" fill="#000" textLength="78.11" lengthAdjust="spacingAndGlyphs" xml:space="preserve">mer. 28</text>
<text x="1737.12" y="1356.60" font-size="21.0" fill="#000" textLength="69.18" lengthAdjust="spacingAndGlyphs" xml:space="preserve">jeu. 29</text>
<text x="2055.41" y="1356.60" font-size="21.0" fill="#000" textLength="75.58" lengthAdjust="spacingAndGlyphs" xml:space="preserve">ven. 30</text>
<text x="121.29" y="1326.60" font-size="21.0" fill="#333" textLength="12.27" lengthAdjust="spacingAndGlyphs" xml:space="preserve">0</text>
<text x="121.35" y="1276.09" font-size="21.0" fill="#333" textLength="12.27" lengthAdjust="spacingAndGlyphs" xml:space="preserve">5</text>
<text x="109.02" y="1225.58" font-size="21.0" fill="#333" textLength="24.55" lengthAdjust="spacingAndGlyphs" xml:space="preserve">10</text>
<text x="109.08" y="1175.07" font-size="21.0" fill="#333" textLength="24.55" lengthAdjust="spacingAndGlyphs" xml:space="preserve">15</text>
<text x="109.02" y="1124.56" font-size="21.0" fill="#333" textLength="24.55" lengthAdjust="spacingAndGlyphs" xml:space="preserve">20</text>
<text x="109.08" y="1074.05" font-size="21.0" fill="#333" textLength="24.55" lengthAdjust="spacingAndGlyphs" xml:space="preserve">25</text>
<text x="109.02" y="1023.54" font-size="21.0" fill="#333" textLength="24.55" lengthAdjust="spacingAndGlyphs" xml:space="preserve">30</text>
<text x="109.08" y="973.03" font-size="21.0" fill="#333" textLength="24.55" lengthAdjust="spacingAndGlyphs" xml:space="preserve">35</text>
<text x="109.02" y="922.52" font-size="21.0" fill="#333" textLength="24.55" lengthAdjust="spacingAndGlyphs" xml:space="preserve">40</text>
<text x="109.08" y="872.01" font-size="21.0" fill="#333" textLength="24.55" lengthAdjust="spacingAndGlyphs" xml:space="preserve">45</text>
<text x="109.02" y="821.50" font-size="21.0" fill="#333" textLength="24.55" lengthAdjust="spacingAndGlyphs" xml:space="preserve">50</text>
<g transform="translate(87.3,1066.9) rotate(-90)"><text x="-16.58" y="0.00" font-size="24" fill="#333" textLength="31.76" lengthAdjust="spacingAndGlyphs" xml:space="preserve">kW</text></g>
<rect x="1047.5" y="542.2" width="522" height="69.5" rx="9" fill="#ffffff" fill-opacity="0.9"/>
<text x="1125.77" y="588.80" font-size="32" font-weight="bold" fill="#0a0f0f" textLength="377.61" lengthAdjust="spacingAndGlyphs" xml:space="preserve">vendredi 30 janvier 2026</text>
<path d="M1990,60 H2396 Q2406,60 2406,70 V90 Q2406,96.5 2400,96.5 V97 H1990 Z" fill="#ffffff"/>
<text x="2110.26" y="89.10" font-size="27.6" font-weight="bold" fill="#000" textLength="174.88" lengthAdjust="spacingAndGlyphs" xml:space="preserve">LHB-site-L657</text>
<rect x="1992.8" y="108.4" width="411.0" height="57.1" rx="10" fill="#fff" stroke="#7f7f7f" stroke-width="4"/><text x="2050.58" y="148.50" font-size="30" fill="#000" textLength="314.74" lengthAdjust="spacingAndGlyphs" xml:space="preserve">Consommation: 176 kWh</text>
<rect x="1992.8" y="178.5" width="411.0" height="56.8" rx="10" fill="#fff" stroke="#7f7f7f" stroke-width="4"/><text x="2111.70" y="217.80" font-size="30" fill="#000" textLength="189.89" lengthAdjust="spacingAndGlyphs" xml:space="preserve">P Max :  48 kW</text>
<rect x="1992.8" y="248.3" width="411.0" height="57.1" rx="10" fill="#fff" stroke="#7f7f7f" stroke-width="4"/><text x="2126.36" y="287.90" font-size="30" fill="#000" textLength="161.74" lengthAdjust="spacingAndGlyphs" xml:space="preserve">P min : 1 kW</text>
<rect x="562.2" y="806.3" width="411.4" height="57.2" rx="10" fill="#fff" stroke="#7f7f7f" stroke-width="4"/><text x="609.08" y="845.90" font-size="30" fill="#000" textLength="337.64" lengthAdjust="spacingAndGlyphs" xml:space="preserve">Consommation: 1 320 kWh</text>
<rect x="1100.4" y="807.3" width="410.8" height="55.3" rx="10" fill="#fff" stroke="#7f7f7f" stroke-width="4"/><text x="1219.18" y="845.90" font-size="30" fill="#000" textLength="191.62" lengthAdjust="spacingAndGlyphs" xml:space="preserve">P Max :  48 kW</text>
<rect x="1610.7" y="807.3" width="410.9" height="55.3" rx="10" fill="#fff" stroke="#7f7f7f" stroke-width="4"/><text x="1744.77" y="845.90" font-size="30" fill="#000" textLength="161.13" lengthAdjust="spacingAndGlyphs" xml:space="preserve">P min : 1 kW</text>
<rect x="176.5" y="49.2" width="481.5" height="77.4" fill="#0a0a18"/>
<g fill="none" stroke="url(#ecog2)" stroke-width="6.8" stroke-linecap="round"><path d="M192.4,94.3 H211 A9.3,12.05 0 1 0 208.6,102.6"/><path d="M239.2,87.4 A10.1,12.05 0 1 0 239.8,102.6"/><ellipse cx="257.1" cy="94.55" rx="10.3" ry="12.05"/><path d="M198.2,74.9 L205.2,71.5" stroke-width="6"/></g>
<g fill="none" stroke="#ffffff" stroke-width="7" stroke-linecap="round" stroke-linejoin="round"><path d="M275.2,87.2 L283.5,107.6 L291.8,81.5 L299.4,107.6 L313.6,67.6"/><path d="M316.2,85.2 Q322,81 328.5,81.3 Q335.6,82 335.6,90 V107.4"/><ellipse cx="324.6" cy="100.4" rx="9.5" ry="7.2"/><path d="M346.5,75.5 V99.5 Q346.5,107 353.8,107"/><path d="M362,75.5 V99.5 Q362,107 369.3,107"/><path d="M342.6,81.8 H372.2"/></g>
<ellipse cx="433.7" cy="89" rx="26" ry="28" fill="#00b4e0"/>
<g fill="none" stroke="#f4fbff" stroke-width="1.9" stroke-linecap="butt"><path d="M420.4,96.6 V80.2 H425.8 Q431.6,80.2 431.6,84.2 Q431.6,88.3 425.8,88.3"/><path d="M426.3,88.6 L430.2,96.6"/><path d="M420.4,88.3 H450.5"/><path d="M435.2,82 V94.5 Q435.2,96.6 437.6,96.6"/><path d="M449.6,88.3 Q449.6,82.9 443.8,82.9 Q437.9,82.9 437.9,89.6 Q437.9,96.6 444.2,96.6 H450.5"/></g>
<text x="468.01" y="79.20" font-size="12.8" font-weight="bold" fill="#0a8cba" textLength="48.48" lengthAdjust="spacingAndGlyphs" xml:space="preserve">Le réseau</text>
<text x="467.67" y="92.00" font-size="12.8" font-weight="bold" fill="#0a8cba" textLength="61.66" lengthAdjust="spacingAndGlyphs" xml:space="preserve">de transport</text>
<text x="467.98" y="105.60" font-size="12.8" font-weight="bold" fill="#0a8cba" textLength="57.48" lengthAdjust="spacingAndGlyphs" xml:space="preserve">d’électricité</text>
<rect x="546.2" y="61.4" width="100.8" height="55.9" fill="#ffffff"/>
<rect x="553" y="68.7" width="8.5" height="6.9" fill="#2a3a8c"/><rect x="561.5" y="68.7" width="3.1" height="6.9" fill="#ddd"/><rect x="564.6" y="68.7" width="7.4" height="6.9" fill="#e0202a"/>
<text x="553" y="85.5" font-size="7.2" font-weight="bold" fill="#222" textLength="43" lengthAdjust="spacingAndGlyphs">RÉPUBLIQUE</text>
<text x="553" y="93.3" font-size="7.2" font-weight="bold" fill="#222" textLength="40" lengthAdjust="spacingAndGlyphs">FRANÇAISE</text>
<text x="553" y="101" font-size="4.5" font-style="italic" fill="#666">Liberté</text><text x="553" y="105.5" font-size="4.5" font-style="italic" fill="#666">Égalité</text><text x="553" y="110" font-size="4.5" font-style="italic" fill="#666">Fraternité</text>
<rect x="607.4" y="66.6" width="34.3" height="45" fill="#fff" stroke="#3a6cc0" stroke-width="1"/>
<text x="624.3" y="75" font-size="6.5" font-weight="bold" fill="#e02020" text-anchor="middle" textLength="25" lengthAdjust="spacingAndGlyphs">ADEME</text>
<circle cx="624.3" cy="86.7" r="8.6" fill="#2f5db5"/><path d="M620,81 q3,-1.5 5,1 q-1,3 -4,3.5 z M626,88 q3,0 3.5,3 q-2,2.5 -4,1 z" fill="#8fb0e0"/>
<rect x="612" y="98.8" width="25" height="1.3" fill="#e87070"/><rect x="612" y="102.3" width="25" height="1.3" fill="#e87070"/><rect x="612" y="105.8" width="25" height="1.3" fill="#e87070"/>
<rect x="169.3" y="135.7" width="490.3" height="122.7" fill="#dcdcdc"/>
<rect x="173.0" y="138.8" width="116.0" height="50.2" fill="#f2f2f2"/>
<rect x="173.0" y="194.7" width="116.0" height="57" fill="#f2f2f2"/>
<g transform="translate(180.2,195)"><rect width="106" height="55.6" fill="url(#tealg)"/><path d="M15.5,0 C35,13 55,25 73,25 C88,25 99,21 106,17.4 L106,0 Z" fill="#00f0c8"/><path d="M25.8,0 C42,7 56,10.9 72.6,10.9 C87,10.9 99,7.5 106,4.3 L106,0 Z" fill="#00a08a"/></g>
<text x="231.0" y="174.5" font-size="31" fill="#000" text-anchor="middle">J</text>
<rect x="294.6" y="138.8" width="116.4" height="50.2" fill="#f2f2f2"/>
<rect x="294.6" y="194.7" width="116.4" height="57" fill="#ffffff"/>
<g transform="translate(302.4,196)"><rect width="106" height="55.6" fill="url(#tealg)"/><path d="M15.5,0 C35,13 55,25 73,25 C88,25 99,21 106,17.4 L106,0 Z" fill="#00f0c8"/><path d="M25.8,0 C42,7 56,10.9 72.6,10.9 C87,10.9 99,7.5 106,4.3 L106,0 Z" fill="#00a08a"/></g>
<text x="321.0" y="174.8" font-size="32" fill="#000" text-anchor="middle">J</text>
<text x="354.1" y="173.5" font-size="30" fill="#000" text-anchor="middle">+</text>
<text x="384.4" y="174.8" font-size="32" font-weight="normal" fill="#000" text-anchor="middle">1</text>
<rect x="416.2" y="138.8" width="116.8" height="50.2" fill="#f2f2f2"/>
<rect x="416.2" y="194.7" width="116.8" height="57" fill="#ffffff"/>
<g transform="translate(424.2,196)"><rect width="106" height="55.6" fill="url(#tealg)"/><path d="M15.5,0 C35,13 55,25 73,25 C88,25 99,21 106,17.4 L106,0 Z" fill="#00f0c8"/><path d="M25.8,0 C42,7 56,10.9 72.6,10.9 C87,10.9 99,7.5 106,4.3 L106,0 Z" fill="#00a08a"/></g>
<text x="442.8" y="174.8" font-size="32" fill="#000" text-anchor="middle">J</text>
<text x="475.9" y="173.5" font-size="30" fill="#000" text-anchor="middle">+</text>
<text x="508.3" y="174.8" font-size="32" font-weight="bold" fill="#000" text-anchor="middle">2</text>
<rect x="538.8" y="138.8" width="116.5" height="50.2" fill="#f2f2f2"/>
<rect x="538.8" y="194.7" width="116.5" height="57" fill="#ffffff"/>
<g transform="translate(544.0,196)"><rect width="106" height="55.6" fill="url(#tealg)"/><path d="M15.5,0 C35,13 55,25 73,25 C88,25 99,21 106,17.4 L106,0 Z" fill="#00f0c8"/><path d="M25.8,0 C42,7 56,10.9 72.6,10.9 C87,10.9 99,7.5 106,4.3 L106,0 Z" fill="#00a08a"/></g>
<text x="565.2" y="174.8" font-size="32" fill="#000" text-anchor="middle">J</text>
<text x="598.3" y="173.5" font-size="30" fill="#000" text-anchor="middle">+</text>
<text x="631.0" y="174.8" font-size="32" font-weight="bold" fill="#000" text-anchor="middle">3</text>
<rect x="2322" y="1322.3" width="115.8" height="57" fill="#ffffff"/>
<path d="M2360.6,1343.7 A12.3,12.3 0 1 0 2361.1,1351.2 H2348.6" stroke="#0a6fb8" stroke-width="6" fill="none" stroke-linecap="round"/>
<path d="M2370.3,1350.2 Q2367.8,1345 2371,1341.5 Q2374.5,1337.8 2378.6,1338.3 Q2384.6,1339.3 2384.2,1346 Q2383.7,1351 2371.5,1360.6 H2386" stroke="#0a6fb8" stroke-width="5.8" fill="none" stroke-linecap="round" stroke-linejoin="miter"/>
<path d="M2391.7,1324.8 L2383.3,1338.3 L2400,1338.6 L2388.8,1362.6 L2391.6,1336 Z" fill="#e85c28"/>
<text x="2393.10" y="1334.60" font-size="8" font-weight="bold" fill="#e8643a" textLength="30.89" lengthAdjust="spacingAndGlyphs" xml:space="preserve">FRANCE</text>
<path d="M2403,1339 H2424.4 L2419,1345 H2400.8 Z" fill="#f0921e"/>
<path d="M2399,1348.3 H2418 L2413,1353.8 H2396.6 Z" fill="#f0921e"/>
<path d="M2395,1357.1 H2416.8 L2411.5,1363 H2392.9 Z" fill="#f0921e"/>
<text x="2339.43" y="1368.30" font-size="4.8" fill="#5a9ad6" textLength="74.40" lengthAdjust="spacingAndGlyphs" xml:space="preserve">Optimisation des consommations énergétiques</text>
</svg></body></html>
